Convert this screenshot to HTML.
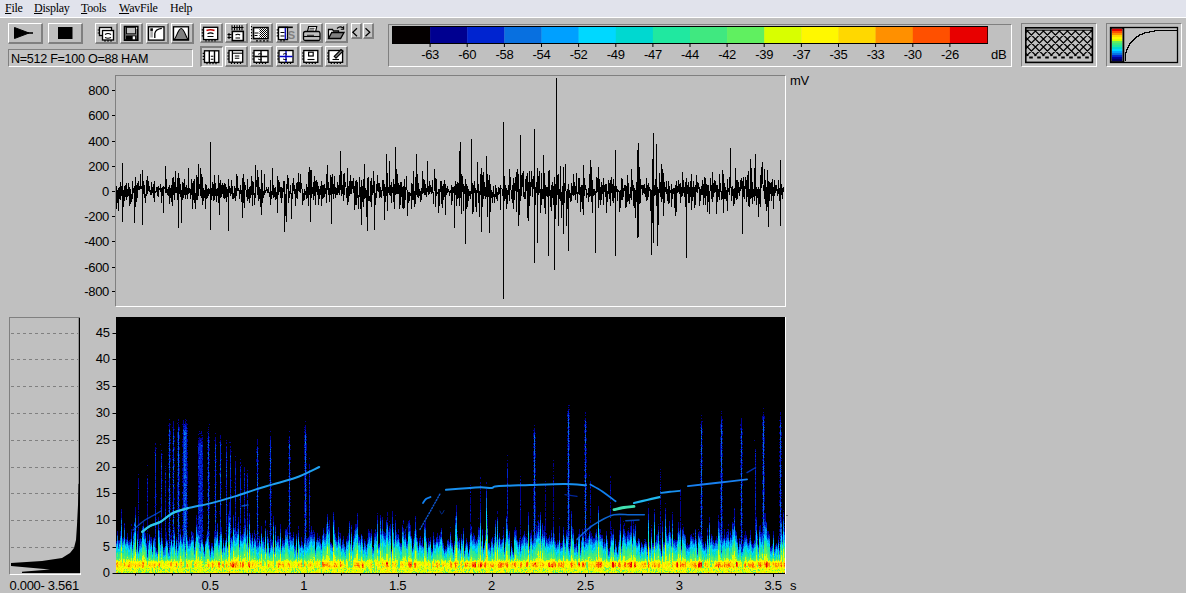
<!DOCTYPE html><html><head><meta charset="utf-8"><style>
*{margin:0;padding:0;box-sizing:border-box}
html,body{width:1186px;height:593px;overflow:hidden;background:#c0c0c0;font-family:"Liberation Sans",sans-serif;color:#000}
.a{position:absolute}
#menu{left:0;top:0;width:1186px;height:17px;background:#e1e3ec;border-bottom:1px solid #fff;height:18px}
#menu span{position:absolute;top:1px;font-family:"Liberation Serif",serif;font-size:12px;line-height:14px;letter-spacing:-0.25px}
#menu u{text-decoration:underline;text-underline-offset:1px;text-decoration-thickness:1px}
.btn{position:absolute;background:#c0c0c0;border-top:1px solid #fff;border-left:1px solid #fff;border-right:2px solid #808080;border-bottom:2px solid #808080}
.btn svg{position:absolute;left:0;top:0}
.pressed{border-top:2px solid #808080;border-left:2px solid #808080;border-right:1px solid #fff;border-bottom:1px solid #fff;background:#c8c8c8}
.sunk{position:absolute;border-top:1px solid #808080;border-left:1px solid #808080;border-right:1px solid #fff;border-bottom:1px solid #fff}
.lbl{position:absolute;font-size:13px;line-height:14px;white-space:nowrap;letter-spacing:-0.3px}
</style></head><body><div id="menu" class="a"><span style="left:5px"><u>F</u>ile</span><span style="left:34px"><u>D</u>isplay</span><span style="left:81px"><u>T</u>ools</span><span style="left:119px"><u>W</u>avFile</span><span style="left:170px">Help</span></div><div class="btn" style="left:8px;top:23px;width:35px;height:21px"></div><div class="btn" style="left:48px;top:23px;width:35px;height:21px"></div><div class="btn" style="left:95px;top:23px;width:23px;height:21px"></div><div class="btn" style="left:120px;top:23px;width:23px;height:21px"></div><div class="btn" style="left:146px;top:23px;width:23px;height:21px"></div><div class="btn" style="left:171px;top:23px;width:23px;height:21px"></div><div class="btn" style="left:200px;top:23px;width:23px;height:20px"></div><div class="btn" style="left:225px;top:23px;width:23px;height:20px"></div><div class="btn" style="left:250px;top:23px;width:23px;height:20px"></div><div class="btn" style="left:276px;top:23px;width:23px;height:20px"></div><div class="btn" style="left:300px;top:23px;width:23px;height:20px"></div><div class="btn" style="left:325px;top:23px;width:23px;height:20px"></div><div class="btn" style="left:351px;top:23px;width:11px;height:16px"></div><div class="btn" style="left:363px;top:23px;width:11px;height:16px"></div><div class="btn pressed" style="left:200px;top:46px;width:23px;height:21px"></div><div class="btn" style="left:225px;top:46px;width:23px;height:21px"></div><div class="btn" style="left:250px;top:46px;width:23px;height:21px"></div><div class="btn" style="left:276px;top:46px;width:23px;height:21px"></div><div class="btn" style="left:300px;top:46px;width:23px;height:21px"></div><div class="btn" style="left:325px;top:46px;width:23px;height:21px"></div><div class="sunk" style="left:8px;top:49px;width:185px;height:18px;background:#c4c4c4"></div><div class="lbl" style="left:11px;top:51.5px;font-size:12.6px;line-height:14px">N=512 F=100 O=88 HAM</div><svg class="a" style="left:0;top:0" width="400" height="70"><path d="M14.5 27.5L14.5 38.5L29 33Z" fill="#000" stroke="#000" stroke-width="1" stroke-linejoin="miter"/><path d="M26 33h7" stroke="#000" stroke-width="1.6"/><rect x="58" y="27" width="14.5" height="12" fill="#000"/><rect x="99.5" y="27.5" width="12.0" height="8.0" fill="#fff" stroke="#000" stroke-width="1.35"/><path d="M97.7 30.0h1.8M97.7 33.0h1.8" stroke="#000" stroke-width="1.2"/><rect x="102.5" y="30.5" width="11.0" height="9.5" fill="#fff" stroke="#000" stroke-width="1.35"/><path d="M105.0 40v1.8M108.0 40v1.8M111.0 40v1.8" stroke="#000" stroke-width="1.2"/><path d="M105 34.5q3-2 6 0M105 37.5q3 1.5 6 0" fill="none" stroke="#000" stroke-width="1.1"/><path d="M124.5 26.5h13.3v13.6h-13.3z" fill="#808080" stroke="#000" stroke-width="1.6"/><rect x="126.5" y="27.3" width="9" height="6.5" fill="#c0c0c0" stroke="#000" stroke-width=".9"/><rect x="126" y="35.5" width="10.5" height="4.3" fill="#000"/><rect x="132.7" y="36.3" width="2.4" height="3" fill="#fff"/><rect x="136" y="27.6" width="1.2" height="1.2" fill="#fff"/><rect x="148.5" y="26.8" width="15.5" height="13.3" fill="#fff" stroke="#000" stroke-width="1.35"/><rect x="150.3" y="28.3" width="2.6" height="2.6" fill="#000"/><rect x="150.3" y="31" width="2.6" height="6.5" fill="#a8a8a8"/><path d="M154.8 38V33.5Q155.5 29 161.8 28.3" fill="none" stroke="#000" stroke-width="1.3"/><rect x="173.5" y="26.8" width="15" height="13.3" fill="#fff" stroke="#000" stroke-width="1.35"/><path d="M174.2 39.5C176.5 37.5 178.2 28.5 181.2 28.5S185.9 37.5 188 39.5Z" fill="#808080" stroke="#000" stroke-width="1.1"/><rect x="203.5" y="27.3" width="14.199999999999989" height="12.3" fill="#fff" stroke="#000" stroke-width="1.35"/><path d="M201.7 29.8h1.8M201.7 32.8h1.8M201.7 35.8h1.8M206.0 39.6v1.8M209.0 39.6v1.8M212.0 39.6v1.8M215.0 39.6v1.8" stroke="#000" stroke-width="1.2"/><path d="M206.5 30.5q4-1.5 8 0" fill="none" stroke="#c00000" stroke-width="1.4"/><path d="M207.5 33.8q3-1.8 6 0M207.5 36.5h6" fill="none" stroke="#000" stroke-width="1.2"/><path d="M232 25.3v5M234.5 25.3v5M237 25.3v5M239.5 25.3v5M242 25.3v5M231.5 27.5h12" stroke="#000" stroke-width="1.1"/><rect x="232.3" y="31.4" width="11" height="9.2" fill="#fff" stroke="#000" stroke-width="1.6"/><path d="M227.5 34.5h4M227.5 37.5h4M229 33v6" stroke="#000" stroke-width="1.1"/><path d="M235.5 35q2.3-1.5 4.6 0M235.5 38h4.6" fill="none" stroke="#000" stroke-width="1.1"/><defs><pattern id="chk" width="2" height="2" patternUnits="userSpaceOnUse"><rect width="2" height="2" fill="#fff"/><rect width="1" height="1" fill="#000"/><rect x="1" y="1" width="1" height="1" fill="#000"/></pattern></defs><rect x="253.5" y="27.6" width="14.5" height="11" fill="#fff" stroke="#000" stroke-width="1.6"/><rect x="259.5" y="28.4" width="7.7" height="9.4" fill="url(#chk)"/><path d="M254.5 33h4M254.5 35.5h3" stroke="#000"/><path d="M251.5 26v13" stroke="#000" stroke-width="1.1" stroke-dasharray="1.2 1.8"/><path d="M256 40.8h13" stroke="#000" stroke-width="1.3" stroke-dasharray="2 1.5"/><rect x="278.5" y="27.3" width="9.0" height="12.3" fill="#fff" stroke="#000" stroke-width="1.35"/><path d="M276.7 29.8h1.8M276.7 32.8h1.8M276.7 35.8h1.8M281.0 39.6v1.8M284.0 39.6v1.8" stroke="#000" stroke-width="1.2"/><path d="M278.5 27.3h14.3" stroke="#000" stroke-width="1.6"/><path d="M285.3 28v11.5" stroke="#0000c0" stroke-width="1.3"/><path d="M280.5 32.5h4M280.5 36h4" stroke="#000" stroke-width="1.1"/><text x="287.6" y="38.5" font-family="Liberation Sans" font-weight="bold" font-size="11.5" fill="#808080">S</text><path d="M307.5 31.5l1.2-5h8l-1 5z" fill="#fff" stroke="#000" stroke-width="1.2"/><path d="M309.5 28.3h5M309.2 30h5" stroke="#000" stroke-width=".8"/><path d="M303.5 33.5q0-2 2-2h13q1.5 0 1.5 2v5.5q0 1.5-1.5 1.5h-13q-2 0-2-1.5z" fill="#c0c0c0" stroke="#000" stroke-width="1.3"/><path d="M304 36.5h16" stroke="#000" stroke-width="1.1"/><path d="M307 35.3h7" stroke="#000" stroke-width=".8"/><path d="M328.5 38.5v-9h4l1 1.5h5v1.8" fill="#fff" stroke="#000" stroke-width="1.3"/><path d="M328.5 38.5l3.2-6h12.3l-3.4 6z" fill="#808080" stroke="#000" stroke-width="1.3"/><path d="M337 28.5q3-3 6 -0.5" fill="none" stroke="#000" stroke-width="1.1"/><path d="M343.6 26.2v3h-2.8" fill="none" stroke="#000" stroke-width="1.1"/><path d="M357 28.3L352.8 32.3L357 36.3" fill="none" stroke="#000" stroke-width="1.25"/><path d="M365.5 28.3L369.8 32.3L365.5 36.3" fill="none" stroke="#000" stroke-width="1.25"/><rect x="204.5" y="50.8" width="14.300000000000011" height="11.700000000000003" fill="#fff" stroke="#000" stroke-width="1.35"/><path d="M202.7 53.3h1.8M202.7 56.3h1.8M202.7 59.3h1.8M207.0 62.5v1.8M210.0 62.5v1.8M213.0 62.5v1.8M216.0 62.5v1.8" stroke="#000" stroke-width="1.2"/><path d="M209.3 51v11.5M214.5 51v11.5" stroke="#000" stroke-width="1.4"/><path d="M210.8 56.2h2.6M210.8 59.2h2.6" stroke="#000" stroke-width="1.1"/><rect x="229" y="50.5" width="13.699999999999989" height="11.700000000000003" fill="#fff" stroke="#000" stroke-width="1.35"/><path d="M227.2 53.0h1.8M227.2 56.0h1.8M227.2 59.0h1.8M231.5 62.2v1.8M234.5 62.2v1.8M237.5 62.2v1.8M240.5 62.2v1.8" stroke="#000" stroke-width="1.2"/><path d="M232.4 51v11" stroke="#000" stroke-width="1.3"/><path d="M232.5 53.2h10" stroke="#000" stroke-width="1.1"/><path d="M234.8 56h4.5M234.8 58.3h4.5" stroke="#000" stroke-width="1.1"/><rect x="254" y="50.5" width="14" height="11.799999999999997" fill="#fff" stroke="#000" stroke-width="1.35"/><path d="M252.2 53.0h1.8M252.2 56.0h1.8M252.2 59.0h1.8M256.5 62.3v1.8M259.5 62.3v1.8M262.5 62.3v1.8M265.5 62.3v1.8" stroke="#000" stroke-width="1.2"/><path d="M261 51v11M254.5 56.5h13" stroke="#000" stroke-width="1.4"/><path d="M258 54.3q2-1.5 4 0M258 59q2 1.5 4 0" fill="none" stroke="#000" stroke-width=".9"/><rect x="279" y="50.5" width="14" height="11.799999999999997" fill="#fff" stroke="#000" stroke-width="1.35"/><path d="M277.2 53.0h1.8M277.2 56.0h1.8M277.2 59.0h1.8M281.5 62.3v1.8M284.5 62.3v1.8M287.5 62.3v1.8M290.5 62.3v1.8" stroke="#000" stroke-width="1.2"/><path d="M286 51v11M279.5 56.5h13" stroke="#0000c0" stroke-width="1.4"/><path d="M283 54.3q2-1.5 4 0M283 59q2 1.5 4 0" fill="none" stroke="#000" stroke-width=".9"/><rect x="303.8" y="50.5" width="14.0" height="11.799999999999997" fill="#fff" stroke="#000" stroke-width="1.35"/><path d="M302.0 53.0h1.8M302.0 56.0h1.8M302.0 59.0h1.8M306.3 62.3v1.8M309.3 62.3v1.8M312.3 62.3v1.8M315.3 62.3v1.8" stroke="#000" stroke-width="1.2"/><rect x="308.6" y="52.2" width="4.6" height="3.8" fill="#fff" stroke="#000" stroke-width="1.2"/><path d="M307.5 59.5h7" stroke="#000" stroke-width="1.1"/><rect x="328.8" y="50.5" width="13.800000000000011" height="11.799999999999997" fill="#fff" stroke="#000" stroke-width="1.35"/><path d="M327.0 53.0h1.8M327.0 56.0h1.8M327.0 59.0h1.8M331.3 62.3v1.8M334.3 62.3v1.8M337.3 62.3v1.8M340.3 62.3v1.8" stroke="#000" stroke-width="1.2"/><path d="M334.2 56.3l6.8-6.8l1.8 1.8l-6.8 6.8z" fill="#808080" stroke="#000" stroke-width="1.2"/><path d="M332.5 59.5h6.5" stroke="#000" stroke-width="1.1"/></svg><div class="sunk" style="left:388px;top:24px;width:624px;height:43px"></div><svg class="a" style="left:0;top:0" width="1186" height="70"><rect x="392.5" y="26.5" width="595" height="17" fill="none" stroke="#000"/><rect x="393.0" y="27" width="37.4" height="16" fill="#040000"/><rect x="430.1" y="27" width="37.4" height="16" fill="#000090"/><rect x="467.2" y="27" width="37.4" height="16" fill="#0024d0"/><rect x="504.4" y="27" width="37.4" height="16" fill="#0870e0"/><rect x="541.5" y="27" width="37.4" height="16" fill="#00a0ff"/><rect x="578.6" y="27" width="37.4" height="16" fill="#00d8ff"/><rect x="615.8" y="27" width="37.4" height="16" fill="#00d8d0"/><rect x="652.9" y="27" width="37.4" height="16" fill="#20e8a0"/><rect x="690.0" y="27" width="37.4" height="16" fill="#40e880"/><rect x="727.1" y="27" width="37.4" height="16" fill="#60f060"/><rect x="764.2" y="27" width="37.4" height="16" fill="#d8ff00"/><rect x="801.4" y="27" width="37.4" height="16" fill="#fff800"/><rect x="838.5" y="27" width="37.4" height="16" fill="#ffd800"/><rect x="875.6" y="27" width="37.4" height="16" fill="#ff9000"/><rect x="912.8" y="27" width="37.4" height="16" fill="#ff5000"/><rect x="949.9" y="27" width="37.4" height="16" fill="#e80000"/><path d="M430.1 43v4" stroke="#000"/><path d="M467.2 43v4" stroke="#000"/><path d="M504.4 43v4" stroke="#000"/><path d="M541.5 43v4" stroke="#000"/><path d="M578.6 43v4" stroke="#000"/><path d="M615.8 43v4" stroke="#000"/><path d="M652.9 43v4" stroke="#000"/><path d="M690.0 43v4" stroke="#000"/><path d="M727.1 43v4" stroke="#000"/><path d="M764.2 43v4" stroke="#000"/><path d="M801.4 43v4" stroke="#000"/><path d="M838.5 43v4" stroke="#000"/><path d="M875.6 43v4" stroke="#000"/><path d="M912.8 43v4" stroke="#000"/><path d="M949.9 43v4" stroke="#000"/></svg><div class="lbl" style="left:410.1px;top:48px;width:40px;text-align:center">-63</div><div class="lbl" style="left:447.2px;top:48px;width:40px;text-align:center">-60</div><div class="lbl" style="left:484.4px;top:48px;width:40px;text-align:center">-58</div><div class="lbl" style="left:521.5px;top:48px;width:40px;text-align:center">-54</div><div class="lbl" style="left:558.6px;top:48px;width:40px;text-align:center">-52</div><div class="lbl" style="left:595.8px;top:48px;width:40px;text-align:center">-49</div><div class="lbl" style="left:632.9px;top:48px;width:40px;text-align:center">-47</div><div class="lbl" style="left:670.0px;top:48px;width:40px;text-align:center">-44</div><div class="lbl" style="left:707.1px;top:48px;width:40px;text-align:center">-42</div><div class="lbl" style="left:744.2px;top:48px;width:40px;text-align:center">-39</div><div class="lbl" style="left:781.4px;top:48px;width:40px;text-align:center">-37</div><div class="lbl" style="left:818.5px;top:48px;width:40px;text-align:center">-35</div><div class="lbl" style="left:855.6px;top:48px;width:40px;text-align:center">-33</div><div class="lbl" style="left:892.8px;top:48px;width:40px;text-align:center">-30</div><div class="lbl" style="left:929.9px;top:48px;width:40px;text-align:center">-26</div><div class="lbl" style="left:991px;top:48px">dB</div><div class="sunk" style="left:1021px;top:23px;width:76px;height:44px"></div><svg class="a" style="left:0;top:0" width="1186" height="70"><defs><clipPath id="hc"><rect x="1026" y="30" width="66" height="26.5"/></clipPath></defs><rect x="1025.8" y="27.8" width="66.6" height="34.6" fill="#c0c0c0" stroke="#000" stroke-width="1.6"/><g clip-path="url(#hc)"><path d="M986.4 30L1012.4 56M1012.4 30L986.4 56M994.4 30L1020.4 56M1020.4 30L994.4 56M1002.4 30L1028.4 56M1028.4 30L1002.4 56M1010.4 30L1036.4 56M1036.4 30L1010.4 56M1018.4 30L1044.4 56M1044.4 30L1018.4 56M1026.4 30L1052.4 56M1052.4 30L1026.4 56M1034.4 30L1060.4 56M1060.4 30L1034.4 56M1042.4 30L1068.4 56M1068.4 30L1042.4 56M1050.4 30L1076.4 56M1076.4 30L1050.4 56M1058.4 30L1084.4 56M1084.4 30L1058.4 56M1066.4 30L1092.4 56M1092.4 30L1066.4 56M1074.4 30L1100.4 56M1100.4 30L1074.4 56M1082.4 30L1108.4 56M1108.4 30L1082.4 56M1090.4 30L1116.4 56M1116.4 30L1090.4 56M1098.4 30L1124.4 56M1124.4 30L1098.4 56M1106.4 30L1132.4 56M1132.4 30L1106.4 56M1114.4 30L1140.4 56M1140.4 30L1114.4 56M1122.4 30L1148.4 56M1148.4 30L1122.4 56M1130.4 30L1156.4 56M1156.4 30L1130.4 56" stroke="#000" stroke-width="1.2"/></g><path d="M1026 30.2h66" stroke="#000" stroke-width="1"/><path d="M1029.2 57.6h3.6M1037.2 57.6h3.6M1045.2 57.6h3.6M1053.2 57.6h3.6M1061.2 57.6h3.6M1069.2 57.6h3.6M1077.2 57.6h3.6M1085.2 57.6h3.6" stroke="#000" stroke-width="2"/></svg><div class="sunk" style="left:1106px;top:23px;width:76px;height:44px"></div><svg class="a" style="left:0;top:0" width="1186" height="70"><rect x="1110.5" y="27.5" width="67" height="35" fill="#c0c0c0" stroke="#000" stroke-width="1.3"/><rect x="1111.3" y="28.3" width="11.6" height="33.2" fill="#d8d8d8" stroke="#000" stroke-width=".9"/><rect x="1112" y="58.89" width="10.2" height="2.21" fill="#000060"/><rect x="1112" y="56.89" width="10.2" height="2.21" fill="#000090"/><rect x="1112" y="54.88" width="10.2" height="2.21" fill="#0024d0"/><rect x="1112" y="52.88" width="10.2" height="2.21" fill="#0870e0"/><rect x="1112" y="50.87" width="10.2" height="2.21" fill="#00a0ff"/><rect x="1112" y="48.86" width="10.2" height="2.21" fill="#00d8ff"/><rect x="1112" y="46.86" width="10.2" height="2.21" fill="#00d8d0"/><rect x="1112" y="44.85" width="10.2" height="2.21" fill="#20e8a0"/><rect x="1112" y="42.84" width="10.2" height="2.21" fill="#40e880"/><rect x="1112" y="40.84" width="10.2" height="2.21" fill="#60f060"/><rect x="1112" y="38.83" width="10.2" height="2.21" fill="#d8ff00"/><rect x="1112" y="36.83" width="10.2" height="2.21" fill="#fff800"/><rect x="1112" y="34.82" width="10.2" height="2.21" fill="#ffd800"/><rect x="1112" y="32.81" width="10.2" height="2.21" fill="#ff9000"/><rect x="1112" y="30.81" width="10.2" height="2.21" fill="#ff5000"/><rect x="1112" y="28.80" width="10.2" height="2.21" fill="#e00000"/><path d="M1123.6 28v34" stroke="#000" stroke-width="1.4"/><path d="M1125.5 61V54.5V52.5H1126.5V49.5H1127.5V47.5H1128.5V45.5H1129.5V43.5H1130.5V42.5H1131.5V41.5H1132.5V40.5H1133.5V39.5H1134.5V38.5H1135.5V37.5H1136.5V36.5H1137.5H1138.5V35.5H1139.5V34.5H1140.5H1141.5H1142.5V33.5H1143.5H1144.5V32.5H1145.5H1146.5H1147.5H1148.5H1149.5V31.5H1150.5H1151.5H1152.5H1153.5H1154.5V30.5H1155.5H1156.5H1157.5H1158.5H1159.5H1160.5H1161.5H1162.5H1163.5H1164.5H1165.5H1166.5H1167.5H1168.5H1169.5H1170.5H1171.5H1172.5H1173.5H1174.5H1175.5H1176.5H1176.5V29.5" fill="none" stroke="#000" stroke-width="1.3" shape-rendering="crispEdges"/></svg><div class="sunk" style="left:115px;top:75px;width:671px;height:232px"></div><div class="lbl" style="left:60px;top:83.5px;width:49px;text-align:right">800</div><div class="lbl" style="left:60px;top:108.5px;width:49px;text-align:right">600</div><div class="lbl" style="left:60px;top:134.5px;width:49px;text-align:right">400</div><div class="lbl" style="left:60px;top:159.5px;width:49px;text-align:right">200</div><div class="lbl" style="left:60px;top:184.5px;width:49px;text-align:right">0</div><div class="lbl" style="left:60px;top:209.5px;width:49px;text-align:right">-200</div><div class="lbl" style="left:60px;top:234.5px;width:49px;text-align:right">-400</div><div class="lbl" style="left:60px;top:260.5px;width:49px;text-align:right">-600</div><div class="lbl" style="left:60px;top:284.5px;width:49px;text-align:right">-800</div><div class="lbl" style="left:790px;top:74px">mV</div><svg class="a" style="left:0;top:0" width="1186" height="320"><path d="M112 90.5h3M112 115.5h3M112 141.5h3M112 166.5h3M112 191.5h3M112 216.5h3M112 241.5h3M112 267.5h3M112 291.5h3" stroke="#000"/><path d="M116.5 186V209M117.5 190V203M118.5 188V211M119.5 187V199M120.5 182V200M121.5 186V196M122.5 163V222M123.5 190V207M124.5 186V201M125.5 185V197M126.5 183V200M127.5 189V197M128.5 183V196M129.5 187V206M130.5 189V204M131.5 194V202M132.5 181V199M133.5 188V193M134.5 186V223M135.5 177V207M136.5 185V202M137.5 183V198M138.5 181V190M139.5 186V190M140.5 174V189M141.5 186V189M142.5 170V225M143.5 181V194M144.5 185V198M145.5 194V203M146.5 180V196M147.5 176V194M148.5 181V191M149.5 186V192M150.5 190V195M151.5 182V195M152.5 187V193M153.5 184V198M154.5 181V202M155.5 191V193M156.5 187V192M157.5 187V196M158.5 186V197M159.5 188V190M160.5 184V192M161.5 188V203M162.5 187V196M163.5 186V213M164.5 187V189M165.5 166V193M166.5 179V193M167.5 189V195M168.5 187V196M169.5 185V204M170.5 188V198M171.5 185V202M172.5 178V206M173.5 177V195M174.5 182V200M175.5 171V193M176.5 187V193M177.5 178V200M178.5 173V228M179.5 178V194M180.5 184V197M181.5 190V223M182.5 182V200M183.5 183V198M184.5 179V195M185.5 187V199M186.5 185V195M187.5 188V199M188.5 168V194M189.5 188V193M190.5 189V199M191.5 179V195M192.5 183V209M193.5 181V200M194.5 179V203M195.5 193V209M196.5 175V200M197.5 177V200M198.5 164V196M199.5 184V189M200.5 168V196M201.5 174V198M202.5 177V205M203.5 188V201M204.5 190V198M205.5 184V209M206.5 185V199M207.5 189V198M208.5 188V196M209.5 189V194M210.5 142V230M211.5 188V200M212.5 182V196M213.5 184V201M214.5 175V200M215.5 183V196M216.5 189V202M217.5 188V196M218.5 175V203M219.5 183V215M220.5 180V198M221.5 185V197M222.5 183V194M223.5 185V198M224.5 183V199M225.5 184V198M226.5 187V202M227.5 189V197M228.5 179V231M229.5 186V193M230.5 188V196M231.5 180V194M232.5 186V199M233.5 193V199M234.5 186V198M235.5 188V201M236.5 174V196M237.5 176V191M238.5 188V191M239.5 190V199M240.5 185V194M241.5 190V202M242.5 178V218M243.5 174V203M244.5 182V208M245.5 185V190M246.5 190V197M247.5 179V201M248.5 189V199M249.5 187V203M250.5 186V198M251.5 176V195M252.5 181V206M253.5 182V195M254.5 193V205M255.5 165V198M256.5 180V187M257.5 170V195M258.5 177V201M259.5 187V199M260.5 189V207M261.5 170V215M262.5 183V203M263.5 191V198M264.5 174V195M265.5 190V193M266.5 187V191M267.5 189V193M268.5 187V193M269.5 192V197M270.5 180V205M271.5 191V199M272.5 168V195M273.5 185V198M274.5 188V197M275.5 187V200M276.5 192V199M277.5 176V213M278.5 180V195M279.5 182V192M280.5 187V198M281.5 187V203M282.5 188V198M283.5 181V192M284.5 181V232M285.5 194V216M286.5 184V222M287.5 175V189M288.5 178V203M289.5 191V198M290.5 185V194M291.5 193V219M292.5 183V199M293.5 178V191M294.5 185V194M295.5 189V206M296.5 183V198M297.5 182V199M298.5 173V191M299.5 182V192M300.5 174V193M301.5 183V189M302.5 189V205M303.5 193V201M304.5 189V200M305.5 191V195M306.5 184V199M307.5 187V198M308.5 172V206M309.5 167V195M310.5 170V222M311.5 170V198M312.5 187V194M313.5 182V200M314.5 176V196M315.5 181V205M316.5 180V192M317.5 182V195M318.5 186V205M319.5 189V199M320.5 186V195M321.5 181V206M322.5 185V199M323.5 185V198M324.5 184V197M325.5 188V194M326.5 174V203M327.5 165V190M328.5 182V195M329.5 188V202M330.5 175V195M331.5 177V224M332.5 174V194M333.5 184V199M334.5 176V194M335.5 187V198M336.5 188V195M337.5 182V195M338.5 185V193M339.5 175V195M340.5 151V190M341.5 171V196M342.5 185V194M343.5 174V201M344.5 173V195M345.5 182V187M346.5 188V198M347.5 168V205M348.5 186V202M349.5 181V196M350.5 175V194M351.5 181V194M352.5 181V189M353.5 178V193M354.5 186V210M355.5 181V205M356.5 180V205M357.5 182V198M358.5 195V209M359.5 177V197M360.5 187V209M361.5 180V225M362.5 186V202M363.5 179V207M364.5 164V199M365.5 188V198M366.5 190V217M367.5 178V231M368.5 177V201M369.5 196V201M370.5 181V202M371.5 178V207M372.5 185V195M373.5 171V193M374.5 181V230M375.5 193V205M376.5 184V198M377.5 175V191M378.5 183V192M379.5 183V198M380.5 187V197M381.5 190V198M382.5 180V191M383.5 180V196M384.5 184V220M385.5 187V202M386.5 154V196M387.5 173V211M388.5 187V193M389.5 161V195M390.5 185V196M391.5 182V203M392.5 187V193M393.5 179V202M394.5 184V209M395.5 147V195M396.5 169V194M397.5 174V194M398.5 183V194M399.5 185V209M400.5 182V205M401.5 182V197M402.5 187V208M403.5 186V209M404.5 179V208M405.5 187V200M406.5 176V190M407.5 190V216M408.5 192V203M409.5 192V201M410.5 193V196M411.5 183V209M412.5 184V200M413.5 171V200M414.5 191V207M415.5 177V204M416.5 154V195M417.5 174V197M418.5 183V198M419.5 189V196M420.5 191V202M421.5 188V200M422.5 171V194M423.5 179V193M424.5 180V195M425.5 184V195M426.5 188V197M427.5 161V192M428.5 186V195M429.5 181V194M430.5 185V192M431.5 187V194M432.5 180V193M433.5 192V204M434.5 169V191M435.5 178V207M436.5 179V196M437.5 192V194M438.5 189V213M439.5 189V206M440.5 181V192M441.5 181V204M442.5 186V208M443.5 184V200M444.5 180V197M445.5 184V215M446.5 188V195M447.5 186V193M448.5 189V192M449.5 191V196M450.5 190V193M451.5 185V205M452.5 187V201M453.5 187V193M454.5 186V228M455.5 181V195M456.5 184V206M457.5 182V199M458.5 183V198M459.5 151V206M460.5 142V198M461.5 174V214M462.5 176V192M463.5 184V211M464.5 186V194M465.5 179V244M466.5 184V209M467.5 186V207M468.5 189V201M469.5 191V196M470.5 191V199M471.5 139V194M472.5 183V214M473.5 185V212M474.5 181V193M475.5 188V207M476.5 190V212M477.5 162V193M478.5 184V203M479.5 191V217M480.5 174V195M481.5 168V232M482.5 175V207M483.5 172V199M484.5 182V196M485.5 187V199M486.5 156V197M487.5 174V217M488.5 180V197M489.5 175V233M490.5 184V212M491.5 190V198M492.5 192V203M493.5 186V197M494.5 194V203M495.5 185V197M496.5 188V199M497.5 192V201M498.5 187V195M499.5 188V194M500.5 185V210M501.5 188V189M502.5 189V196M503.5 122V299M504.5 176V201M505.5 185V199M506.5 188V209M507.5 190V204M508.5 185V195M509.5 169V201M510.5 177V190M511.5 190V199M512.5 185V203M513.5 178V209M514.5 183V200M515.5 177V191M516.5 172V212M517.5 169V192M518.5 174V226M519.5 189V215M520.5 135V201M521.5 175V196M522.5 173V187M523.5 171V197M524.5 192V199M525.5 179V199M526.5 176V191M527.5 173V218M528.5 182V221M529.5 171V206M530.5 182V196M531.5 171V187M532.5 179V197M533.5 176V189M534.5 129V263M535.5 187V205M536.5 182V193M537.5 168V243M538.5 176V195M539.5 171V193M540.5 189V213M541.5 173V205M542.5 189V199M543.5 155V199M544.5 173V208M545.5 185V214M546.5 187V196M547.5 187V197M548.5 171V256M549.5 170V196M550.5 190V207M551.5 185V211M552.5 182V198M553.5 186V205M554.5 177V270M555.5 184V219M556.5 78V205M557.5 175V195M558.5 174V226M559.5 189V199M560.5 166V201M561.5 192V218M562.5 186V205M563.5 167V234M564.5 183V203M565.5 164V191M566.5 191V226M567.5 189V209M568.5 184V251M569.5 190V198M570.5 193V202M571.5 183V201M572.5 186V195M573.5 174V196M574.5 182V195M575.5 186V200M576.5 173V194M577.5 192V203M578.5 178V194M579.5 178V195M580.5 187V212M581.5 185V202M582.5 185V209M583.5 165V215M584.5 178V196M585.5 185V190M586.5 189V198M587.5 193V195M588.5 188V202M589.5 174V197M590.5 160V196M591.5 167V202M592.5 180V213M593.5 189V196M594.5 189V195M595.5 191V253M596.5 177V193M597.5 178V192M598.5 167V208M599.5 179V200M600.5 187V205M601.5 182V200M602.5 185V194M603.5 178V205M604.5 185V192M605.5 184V197M606.5 184V213M607.5 191V202M608.5 180V194M609.5 183V199M610.5 180V206M611.5 177V193M612.5 184V201M613.5 179V203M614.5 186V198M615.5 150V256M616.5 186V192M617.5 189V201M618.5 190V192M619.5 191V212M620.5 190V208M621.5 178V200M622.5 179V200M623.5 188V197M624.5 185V191M625.5 185V208M626.5 186V207M627.5 175V202M628.5 183V201M629.5 194V204M630.5 187V198M631.5 169V200M632.5 180V191M633.5 185V206M634.5 188V208M635.5 190V218M636.5 182V202M637.5 150V238M638.5 143V237M639.5 167V204M640.5 179V203M641.5 185V189M642.5 185V195M643.5 185V193M644.5 184V194M645.5 188V197M646.5 178V201M647.5 185V200M648.5 183V197M649.5 187V191M650.5 189V211M651.5 190V255M652.5 159V223M653.5 133V243M654.5 185V196M655.5 179V195M656.5 144V206M657.5 187V246M658.5 189V225M659.5 173V193M660.5 182V197M661.5 164V202M662.5 169V199M663.5 173V216M664.5 182V203M665.5 187V192M666.5 181V194M667.5 189V201M668.5 181V204M669.5 186V203M670.5 190V193M671.5 184V207M672.5 189V199M673.5 188V194M674.5 188V208M675.5 185V216M676.5 181V212M677.5 186V193M678.5 180V192M679.5 184V194M680.5 183V203M681.5 187V197M682.5 172V196M683.5 180V193M684.5 187V197M685.5 182V207M686.5 178V258M687.5 185V194M688.5 182V203M689.5 187V203M690.5 181V197M691.5 174V210M692.5 187V201M693.5 181V197M694.5 187V208M695.5 185V205M696.5 175V192M697.5 182V193M698.5 183V189M699.5 187V206M700.5 189V201M701.5 186V195M702.5 180V195M703.5 184V205M704.5 177V198M705.5 178V205M706.5 184V196M707.5 185V212M708.5 185V202M709.5 191V214M710.5 178V191M711.5 185V199M712.5 172V202M713.5 183V197M714.5 180V193M715.5 181V192M716.5 185V214M717.5 185V202M718.5 189V197M719.5 174V200M720.5 183V192M721.5 191V200M722.5 170V199M723.5 174V213M724.5 183V199M725.5 187V199M726.5 190V201M727.5 179V211M728.5 188V192M729.5 177V195M730.5 148V188M731.5 187V201M732.5 186V196M733.5 189V206M734.5 188V204M735.5 168V198M736.5 180V200M737.5 180V199M738.5 182V193M739.5 187V196M740.5 180V191M741.5 178V189M742.5 181V234M743.5 177V197M744.5 186V199M745.5 177V189M746.5 180V202M747.5 175V197M748.5 171V206M749.5 189V207M750.5 159V199M751.5 168V198M752.5 182V204M753.5 189V197M754.5 168V201M755.5 154V196M756.5 187V205M757.5 189V198M758.5 187V217M759.5 189V204M760.5 175V207M761.5 167V188M762.5 162V184M763.5 185V191M764.5 169V199M765.5 180V204M766.5 187V211M767.5 170V207M768.5 181V227M769.5 182V201M770.5 183V194M771.5 182V201M772.5 179V196M773.5 187V209M774.5 180V196M775.5 185V193M776.5 185V191M777.5 189V196M778.5 180V194M779.5 188V201M780.5 160V226M781.5 184V195M782.5 188V199M783.5 187V192" stroke="#000" stroke-width="1" shape-rendering="crispEdges"/></svg><div class="sunk" style="left:9px;top:317px;width:72px;height:258px"></div><svg class="a" style="left:0;top:300px" width="100" height="293"><g transform="translate(0,-300)"><path d="M11 547.5h67M11 520.5h67M11 493.5h67M11 467.5h67M11 440.5h67M11 413.5h67M11 386.5h67M11 359.5h67M11 333.5h67" stroke="#808080" stroke-dasharray="3 3"/><path d="M80 318V483L78.5 484L78 505L77 525L76 540L74 548L70 553L62 558L42 561L11 563L11 566L50 569.6L22 571.7L22 573L80 573Z" fill="#000"/><path d="M79.5 318V573" stroke="#000" stroke-width="1.5"/></g></svg><div class="lbl" style="left:9.5px;top:578.8px">0.000- 3.561</div><div class="lbl" style="left:70.7px;top:566.0px;width:39px;text-align:right">0</div><div class="lbl" style="left:70.7px;top:540.0px;width:39px;text-align:right">5</div><div class="lbl" style="left:70.7px;top:513.0px;width:39px;text-align:right">10</div><div class="lbl" style="left:70.7px;top:486.0px;width:39px;text-align:right">15</div><div class="lbl" style="left:70.7px;top:460.0px;width:39px;text-align:right">20</div><div class="lbl" style="left:70.7px;top:433.0px;width:39px;text-align:right">25</div><div class="lbl" style="left:70.7px;top:406.0px;width:39px;text-align:right">30</div><div class="lbl" style="left:70.7px;top:379.0px;width:39px;text-align:right">35</div><div class="lbl" style="left:70.7px;top:352.0px;width:39px;text-align:right">40</div><div class="lbl" style="left:70.7px;top:326.0px;width:39px;text-align:right">45</div><div class="lbl" style="left:190.0px;top:578.6px;width:40px;text-align:center">0.5</div><div class="lbl" style="left:283.8px;top:578.6px;width:40px;text-align:center">1</div><div class="lbl" style="left:377.7px;top:578.6px;width:40px;text-align:center">1.5</div><div class="lbl" style="left:471.5px;top:578.6px;width:40px;text-align:center">2</div><div class="lbl" style="left:565.3px;top:578.6px;width:40px;text-align:center">2.5</div><div class="lbl" style="left:659.2px;top:578.6px;width:40px;text-align:center">3</div><div class="lbl" style="left:753.0px;top:578.6px;width:40px;text-align:center">3.5</div><div class="lbl" style="left:790px;top:578.6px">s</div><svg class="a" style="left:0;top:300px" width="1186" height="293"><g transform="translate(0,-300)"><path d="M112.5 573.5h3.5M112.5 547.5h3.5M112.5 520.5h3.5M112.5 493.5h3.5M112.5 467.5h3.5M112.5 440.5h3.5M112.5 413.5h3.5M112.5 386.5h3.5M112.5 359.5h3.5M112.5 333.5h3.5M135.5 573v2.5M154.5 573v2.5M172.5 573v2.5M191.5 573v2.5M210.5 573v4M229.5 573v2.5M248.5 573v2.5M266.5 573v2.5M285.5 573v2.5M304.5 573v4M323.5 573v2.5M341.5 573v2.5M360.5 573v2.5M379.5 573v2.5M398.5 573v4M416.5 573v2.5M435.5 573v2.5M454.5 573v2.5M473.5 573v2.5M492.5 573v4M510.5 573v2.5M529.5 573v2.5M548.5 573v2.5M567.5 573v2.5M585.5 573v4M604.5 573v2.5M623.5 573v2.5M642.5 573v2.5M660.5 573v2.5M679.5 573v4M698.5 573v2.5M717.5 573v2.5M735.5 573v2.5M754.5 573v2.5M773.5 573v4" stroke="#000"/><path d="M116 573.5H785" stroke="#000"/><path d="M785 515.5h3" stroke="#707070"/><rect x="116" y="317" width="669" height="256" fill="#000"/><g shape-rendering="crispEdges" transform="translate(.5,0)"><path d="M116 541v2M117 531v4M118 540v1M119 540v1M120 531v5M121 509v3M121 513v5M122 538v1M123 537v2M124 523v1M124 525v3M125 539v4M126 539v1M127 533v4M128 541v2M129 540v2M130 539v3M131 524v2M131 529v3M132 545v2M133 527v1M133 532v2M134 522v1M134 526v2M135 507v8M136 547v2M137 531v3M138 474v1M138 478v10M138 490v12M138 504v6M138 511v2M138 514v1M138 516v10M138 528v13M138 542v1M138 544v7M139 539v2M140 538v1M141 536v1M141 539v2M142 526v2M143 522v4M144 530v1M145 533v3M146 543v1M147 465v1M147 475v1M147 478v1M147 480v2M147 484v4M147 489v2M147 492v4M147 497v3M147 501v1M147 503v1M147 505v10M147 516v10M147 527v2M147 530v2M147 533v8M147 543v11M148 541v2M149 534v1M150 537v4M151 537v2M152 547v5M153 538v2M154 452v1M154 497v1M154 506v1M154 514v1M154 537v1M155 443v2M155 447v3M155 451v2M155 456v1M155 473v1M155 475v1M155 480v1M155 482v1M155 488v1M155 504v1M155 506v1M155 508v1M155 516v1M155 528v1M155 534v1M155 537v2M155 540v2M156 448v1M156 494v1M156 496v1M156 504v1M156 519v1M156 548v3M157 550v2M158 517v5M159 528v1M159 530v1M160 444v1M160 498v1M160 508v1M160 533v1M160 542v3M161 450v1M161 453v1M161 455v1M161 459v1M161 461v1M161 470v1M161 475v1M161 477v1M161 484v1M161 487v1M161 489v1M161 492v2M161 496v1M161 504v2M161 517v3M161 522v6M161 530v1M161 532v1M162 454v1M162 480v1M162 538v3M163 548v2M164 547v1M165 466v1M165 468v1M165 470v1M165 472v1M165 475v3M165 480v1M165 483v3M165 487v3M165 491v1M165 493v2M165 496v1M165 498v3M165 502v7M165 511v1M165 518v1M165 520v1M165 522v1M165 524v1M165 526v2M165 530v5M165 536v2M165 539v5M165 545v1M166 532v7M167 540v1M168 425v1M168 434v2M168 443v1M168 446v1M168 448v1M168 452v1M168 454v2M168 459v1M168 463v2M168 467v1M168 481v1M168 488v4M168 497v1M168 499v1M168 502v2M168 505v2M168 508v1M168 510v2M168 516v1M168 523v1M168 525v2M168 528v4M168 534v1M168 540v1M168 544v1M168 546v1M168 550v2M169 419v1M169 423v6M169 521v1M170 424v1M170 431v4M170 436v1M170 439v2M170 442v2M170 449v2M170 452v1M170 455v1M170 458v4M170 467v1M170 471v1M170 477v1M170 484v1M170 488v1M170 491v1M170 494v2M170 497v2M170 500v1M170 502v1M170 504v3M170 508v2M170 512v1M170 516v2M170 520v1M170 524v1M170 527v1M170 529v3M170 535v3M170 539v2M170 542v3M171 533v3M171 537v2M172 427v1M172 443v1M172 450v2M172 455v1M172 457v1M172 459v1M172 467v1M172 472v1M172 474v1M172 476v1M172 479v1M172 484v1M172 492v1M172 502v2M172 505v1M172 508v1M172 510v2M172 520v2M172 524v2M172 530v1M172 532v1M172 535v1M172 540v2M172 543v2M173 421v8M173 431v1M173 446v1M173 472v1M173 478v1M173 483v1M173 518v1M173 529v1M174 429v1M174 436v2M174 440v2M174 447v3M174 458v1M174 460v1M174 464v3M174 471v1M174 484v1M174 487v2M174 498v2M174 504v1M174 507v2M174 512v1M174 517v1M174 527v5M175 545v2M176 537v2M177 423v1M177 432v6M177 439v4M177 444v1M177 446v1M177 448v2M177 451v1M177 453v3M177 458v3M177 462v1M177 466v1M177 469v2M177 472v1M177 474v4M177 479v1M177 482v3M177 486v7M177 494v7M177 503v2M177 506v1M177 508v7M177 516v1M177 519v3M177 525v1M177 527v2M177 533v1M177 540v2M177 543v4M177 548v1M178 419v2M178 422v1M178 424v3M179 427v4M179 435v4M179 442v1M179 444v1M179 447v3M179 454v2M179 457v2M179 460v3M179 465v2M179 468v6M179 476v6M179 484v1M179 486v1M179 489v1M179 491v5M179 499v2M179 505v2M179 508v2M179 511v2M179 515v1M179 517v1M179 522v2M179 526v3M179 530v2M179 534v8M180 529v5M181 537v2M182 424v1M182 433v1M182 439v1M182 441v2M182 444v3M182 453v1M182 456v1M182 458v3M182 462v1M182 465v1M182 468v3M182 473v1M182 475v2M182 478v2M182 481v2M182 485v1M182 493v1M182 498v2M182 505v5M182 513v2M182 516v1M182 520v1M182 525v3M182 529v2M182 535v8M183 420v6M183 427v2M183 435v1M183 466v1M183 479v1M183 487v2M183 506v1M183 521v1M184 425v1M184 427v1M184 429v1M184 481v1M185 419v1M185 421v4M186 420v1M186 423v4M186 429v1M186 466v1M186 474v1M186 486v1M186 488v1M186 491v1M186 508v1M186 512v1M186 524v1M186 528v1M187 424v1M187 428v1M187 430v2M187 433v1M187 435v1M187 439v3M187 444v1M187 446v1M187 450v1M187 452v3M187 456v2M187 461v1M187 463v4M187 468v2M187 471v9M187 481v3M187 485v1M187 488v1M187 491v1M187 495v1M187 498v1M187 501v1M187 504v6M187 511v3M187 516v1M187 518v2M187 522v2M187 526v1M187 532v1M187 535v5M188 541v3M189 537v2M190 540v3M191 531v1M191 535v2M192 532v3M193 533v5M194 547v1M195 538v3M196 515v3M196 519v6M197 446v1M197 519v1M197 524v8M198 434v1M198 438v1M198 440v4M198 445v2M198 454v6M198 464v2M198 469v2M198 472v1M198 476v5M198 482v2M198 485v1M198 487v3M198 491v1M198 494v1M198 497v2M198 500v1M198 503v1M198 510v1M198 514v2M198 517v1M198 520v1M198 524v1M198 526v1M198 529v1M199 431v1M199 433v1M199 437v6M199 451v1M199 453v1M199 455v1M199 459v1M199 471v1M199 473v2M199 476v1M199 480v1M199 484v1M199 488v1M199 506v1M199 511v1M199 513v2M199 530v1M199 534v1M200 433v1M200 438v2M200 441v2M200 464v1M200 467v1M200 474v1M200 478v1M200 491v1M200 500v1M200 513v1M200 516v1M200 525v2M200 529v1M200 539v1M200 542v1M201 431v3M201 435v1M201 438v4M201 443v2M201 459v1M201 464v1M201 474v1M201 480v1M201 486v1M201 490v2M201 512v2M201 515v2M201 522v1M201 524v2M202 435v1M202 437v3M202 441v4M202 447v6M202 455v1M202 457v1M202 460v4M202 467v2M202 470v1M202 472v1M202 475v1M202 477v1M202 480v2M202 483v1M202 487v4M202 492v2M202 495v1M202 497v3M202 502v1M202 505v1M202 507v2M202 510v5M202 522v2M202 526v1M202 532v1M202 535v1M202 537v2M203 490v1M203 496v1M203 498v1M203 511v1M203 530v1M203 535v1M203 537v1M203 544v2M204 551v1M205 541v1M206 535v4M207 432v1M207 438v1M207 440v2M207 444v1M207 446v2M207 449v1M207 452v2M207 457v3M207 463v1M207 467v3M207 472v1M207 476v4M207 481v1M207 489v1M207 493v4M207 500v1M207 505v2M207 509v2M207 514v1M207 523v1M207 527v1M207 529v2M208 427v1M208 429v1M208 431v1M208 434v2M209 424v1M209 437v1M209 440v3M209 445v1M209 448v3M209 454v1M209 456v1M209 459v2M209 462v1M209 464v1M209 472v5M209 478v1M209 482v2M209 487v2M209 490v2M209 495v1M209 497v4M209 503v1M209 505v4M209 510v1M209 512v1M209 514v1M209 519v1M209 521v1M209 531v1M209 533v3M209 542v3M210 551v2M211 543v3M212 543v3M213 548v2M214 440v1M214 452v1M214 460v1M214 470v1M214 476v1M214 484v1M214 491v1M214 496v1M214 498v1M214 503v1M214 506v1M214 514v1M214 531v6M215 433v1M215 437v7M215 524v1M215 531v1M215 534v1M216 445v1M216 459v1M216 461v1M216 470v1M216 474v1M216 482v1M216 484v1M216 501v1M216 511v2M216 514v1M216 517v1M216 531v4M217 523v1M217 528v1M218 541v2M219 442v1M219 465v1M219 473v2M219 511v1M219 513v1M219 533v1M219 536v4M220 435v4M220 440v2M220 471v1M220 484v1M220 499v2M220 517v2M221 444v1M221 453v1M221 459v1M221 482v1M221 484v1M221 488v1M221 491v1M221 499v1M221 504v1M221 527v5M222 548v1M223 538v2M224 546v1M225 486v1M225 533v1M225 540v1M226 440v1M226 442v2M226 446v1M226 448v4M226 458v2M226 461v1M226 468v1M226 472v1M226 478v2M226 485v1M226 487v1M226 489v2M226 493v1M226 496v1M226 503v1M226 515v1M226 523v1M226 525v1M226 529v1M226 532v1M227 460v1M227 505v1M227 524v1M227 541v1M227 546v1M228 514v2M229 442v1M229 497v1M229 502v9M229 515v1M230 442v1M230 446v2M230 449v6M230 462v1M230 478v1M230 488v1M230 493v1M230 516v1M230 522v1M230 524v1M230 530v1M230 534v4M230 539v1M230 543v1M231 451v1M231 480v1M231 487v1M231 495v1M231 528v1M231 530v3M231 537v1M232 536v4M233 515v2M234 482v1M234 490v1M234 528v2M234 532v2M235 456v1M235 461v7M235 475v3M235 480v3M235 484v2M235 488v1M235 494v2M235 502v1M235 504v3M235 508v4M235 515v1M235 518v1M235 521v2M235 524v1M235 526v1M236 531v1M237 524v1M237 526v1M237 528v4M237 533v1M238 517v5M239 499v1M239 540v4M240 459v1M240 462v2M240 466v1M240 468v1M240 472v3M240 476v2M240 490v3M240 494v1M240 503v1M240 505v1M240 507v1M240 514v1M240 518v1M240 523v1M240 525v1M240 527v1M240 529v1M241 465v1M241 489v1M241 535v3M242 534v2M242 538v1M243 527v1M243 529v5M244 467v5M244 475v3M244 481v1M244 483v1M244 486v1M244 488v2M244 495v1M244 498v1M244 500v4M244 505v1M244 507v1M244 509v3M244 513v2M244 516v2M244 523v2M244 528v1M245 519v6M246 475v1M246 535v1M247 470v1M247 473v3M247 477v2M247 483v1M247 487v1M247 489v1M247 491v2M247 497v2M247 509v1M247 511v2M247 516v2M247 520v1M247 527v1M248 543v2M249 513v2M249 516v4M250 533v2M251 538v3M252 533v2M253 541v3M254 530v3M254 534v2M254 537v1M255 534v2M255 537v3M256 449v1M256 451v2M256 459v3M256 465v1M256 473v1M256 488v1M256 496v1M256 499v1M256 513v1M256 534v1M256 539v7M257 439v6M257 446v1M257 472v2M257 486v1M258 448v1M258 454v1M258 460v2M258 464v1M258 468v1M258 473v1M258 478v1M258 483v1M258 487v5M258 496v1M258 507v1M258 514v1M258 525v1M258 527v1M258 532v2M258 536v1M258 538v2M258 543v2M259 536v3M260 541v1M260 543v1M261 526v7M262 538v3M263 537v3M264 542v3M265 520v1M265 523v3M265 528v1M266 548v1M267 530v4M267 535v1M268 538v1M269 445v1M269 453v1M269 455v1M269 458v1M269 460v1M269 468v2M269 473v1M269 475v2M269 478v1M269 480v1M269 483v1M269 489v1M269 494v2M269 497v2M269 507v1M269 512v1M269 524v1M269 526v1M269 531v1M269 533v1M269 541v1M269 548v4M270 431v1M270 436v4M270 499v1M271 447v1M271 459v1M271 462v1M271 482v1M271 486v1M271 489v1M271 491v3M271 495v1M271 497v1M271 503v1M271 505v1M271 511v1M271 513v3M271 518v1M271 524v1M271 526v1M271 529v2M271 533v2M271 539v4M272 540v2M273 516v6M274 547v1M275 525v2M276 541v1M277 536v4M278 536v3M279 539v6M280 524v5M281 546v2M282 538v3M283 540v3M284 540v3M285 529v2M286 529v1M287 527v5M288 440v1M288 442v1M288 446v2M288 453v1M288 457v2M288 464v1M288 469v1M288 476v1M288 490v2M288 496v1M288 501v1M288 509v1M288 512v1M288 520v1M288 525v2M288 533v1M288 539v2M289 431v1M289 436v1M289 438v3M289 442v2M289 456v1M290 445v1M290 449v1M290 457v3M290 462v1M290 470v1M290 472v1M290 474v1M290 477v1M290 480v1M290 491v1M290 496v1M290 499v1M290 502v1M290 505v1M290 513v1M290 516v1M290 522v2M290 527v1M290 532v1M290 534v2M291 535v1M291 537v3M292 537v2M293 532v3M293 536v1M294 546v1M295 545v2M296 534v2M297 550v2M298 526v3M298 530v3M299 542v2M300 546v1M301 537v4M302 542v3M303 546v2M304 427v1M304 429v1M304 431v2M304 435v3M304 439v3M304 443v2M304 446v1M304 449v6M304 456v4M304 462v1M304 464v3M304 468v1M304 470v1M304 473v12M304 486v2M304 489v3M304 494v2M304 500v12M304 515v3M304 520v1M304 523v3M304 527v1M304 529v5M304 535v3M305 421v1M305 425v5M305 431v1M306 434v1M306 436v2M306 439v2M306 443v8M306 453v3M306 457v1M306 459v1M306 463v3M306 467v2M306 470v6M306 479v2M306 482v1M306 484v2M306 487v1M306 489v3M306 493v4M306 498v1M306 500v2M306 504v7M306 512v4M306 517v1M306 520v5M306 526v2M306 530v2M306 536v1M306 538v5M307 538v1M308 537v1M309 458v1M309 464v5M309 472v2M309 475v1M309 477v3M309 481v1M309 484v3M309 488v2M309 491v1M309 493v2M309 504v2M309 508v1M309 511v1M309 516v2M309 520v1M309 523v2M309 526v2M309 529v2M309 532v4M310 496v1M310 532v3M311 526v4M311 534v1M312 532v3M313 530v3M313 534v3M314 532v2M315 549v1M316 540v2M317 533v5M318 538v1M318 540v1M319 536v3M320 539v4M321 544v2M322 535v1M323 528v2M324 533v5M325 534v3M326 524v3M327 514v3M328 524v1M328 526v3M329 520v6M329 527v1M330 542v2M331 543v1M332 545v2M333 512v2M333 515v1M334 520v10M335 533v4M336 538v3M337 540v2M338 527v5M339 533v1M339 537v2M340 533v5M341 545v3M342 540v2M343 536v3M344 544v2M345 547v2M346 539v2M347 536v5M348 533v7M349 521v2M350 541v1M350 543v1M351 525v2M351 529v3M352 545v3M353 536v4M354 530v4M355 524v5M356 524v4M357 513v2M357 516v4M358 535v2M359 537v3M360 539v4M361 534v1M362 536v3M363 547v2M364 539v2M365 541v3M366 545v1M366 547v1M367 538v5M368 529v4M369 531v2M370 533v5M371 529v5M373 545v1M373 548v2M374 533v4M375 529v1M375 531v3M376 532v4M377 513v1M377 515v5M378 544v2M379 543v2M380 515v3M381 531v3M382 517v3M383 531v3M384 532v4M385 533v3M386 520v2M387 512v4M387 517v4M387 522v1M388 530v2M388 536v1M389 521v1M389 526v2M390 524v5M391 549v2M392 511v6M393 524v1M393 527v1M393 529v3M394 539v3M395 515v1M395 520v3M396 532v3M397 534v3M397 538v1M398 529v4M398 534v1M399 539v3M400 543v1M401 543v2M402 525v2M403 520v1M403 522v2M403 528v3M404 535v4M405 529v5M406 539v5M407 541v1M408 521v4M409 520v3M410 525v6M411 536v2M412 548v1M413 539v4M413 544v1M414 531v3M414 535v1M415 516v2M415 519v3M416 530v5M416 536v1M417 538v3M418 546v2M419 538v3M420 536v2M420 539v2M421 543v2M422 538v2M423 546v1M424 524v3M425 519v1M425 521v7M426 538v3M427 548v2M428 538v5M429 541v1M429 543v1M430 537v3M431 548v2M432 549v2M433 532v4M434 539v4M435 542v2M436 537v1M437 533v4M437 538v1M438 539v3M439 535v1M440 532v5M441 528v2M442 539v2M443 543v2M444 549v2M445 546v3M446 547v2M447 540v1M448 539v2M449 542v2M450 527v1M450 532v2M451 540v3M452 543v2M453 550v2M454 541v2M455 516v2M455 520v3M456 505v7M457 531v1M457 534v2M458 541v1M459 538v2M460 549v1M461 534v4M462 539v2M463 528v3M465 544v2M466 538v2M467 542v2M468 552v1M469 542v3M469 546v1M470 485v1M470 487v3M470 491v1M470 495v1M470 497v7M470 505v5M470 511v1M470 513v1M470 515v7M470 524v5M470 530v3M471 526v1M471 529v3M472 536v4M473 533v4M474 535v1M475 539v4M476 540v1M477 537v2M478 518v1M478 527v3M479 528v2M480 477v2M480 482v2M480 485v5M480 491v3M480 495v2M480 498v4M480 503v7M480 511v1M481 541v1M482 529v1M483 548v1M484 543v2M485 530v5M486 482v2M486 489v2M487 515v1M487 517v1M487 519v7M487 527v1M488 543v1M489 543v2M490 547v1M491 539v2M492 537v1M493 544v3M494 534v1M494 536v2M494 539v1M495 520v4M496 537v3M497 511v3M497 517v2M498 539v1M499 533v4M500 539v5M501 540v3M502 536v1M502 539v1M503 527v2M503 530v5M504 548v2M505 538v2M506 516v2M507 455v1M507 460v1M507 463v4M507 468v1M507 478v5M507 485v2M507 488v2M507 492v2M507 495v2M507 499v1M507 504v1M507 509v2M507 514v3M507 518v4M507 523v2M508 535v2M509 531v2M510 552v3M511 541v1M511 543v3M512 548v2M513 552v1M514 530v2M515 527v4M516 530v6M517 540v1M518 542v3M519 538v2M520 476v1M520 479v2M520 482v1M520 484v16M520 501v3M520 505v1M520 507v2M520 510v15M520 526v2M520 529v6M520 536v2M520 540v7M520 548v1M521 539v2M522 537v1M523 535v1M524 531v3M525 536v2M526 534v1M526 537v2M527 538v1M527 540v1M528 512v4M529 546v1M530 533v3M531 530v5M532 541v2M533 430v1M533 433v4M533 438v1M533 443v2M533 446v2M533 451v5M533 457v2M533 460v2M533 465v1M533 467v1M533 470v2M533 474v1M533 479v2M533 482v2M533 485v1M533 488v4M533 493v1M533 495v6M533 503v1M533 505v4M533 512v2M533 515v1M533 519v1M533 521v1M533 523v3M533 527v1M533 529v1M533 531v1M533 535v5M534 425v1M534 428v4M535 433v1M535 437v2M535 441v1M535 443v1M535 446v1M535 448v1M535 451v1M535 453v5M535 460v1M535 462v1M535 465v1M535 468v5M535 474v2M535 479v2M535 482v3M535 487v1M535 492v4M535 498v1M535 500v1M535 502v3M535 506v8M535 515v5M535 521v2M535 524v2M535 527v2M535 530v1M535 533v2M536 525v6M537 521v2M537 526v6M538 515v2M538 520v2M539 523v7M539 531v1M540 512v3M541 536v3M542 523v2M543 530v6M544 526v6M545 481v1M545 485v2M545 488v1M545 490v2M545 494v7M545 502v5M545 508v3M545 512v5M545 518v1M545 520v11M545 532v10M546 533v2M546 536v2M547 539v2M548 538v1M548 541v1M549 535v2M550 539v2M551 530v3M551 536v1M552 537v3M553 460v1M553 463v4M553 468v1M553 471v1M553 475v1M553 477v2M553 480v1M553 482v4M553 487v10M553 498v3M553 502v9M553 512v2M553 515v1M553 518v2M553 521v6M554 534v4M554 539v1M555 541v1M556 544v3M557 540v3M558 542v2M559 518v1M559 526v7M560 543v4M561 543v2M562 541v2M563 527v3M563 532v1M564 537v2M565 543v1M566 530v4M567 411v1M567 413v2M567 416v1M567 418v1M567 420v1M567 422v1M567 427v2M567 431v2M567 435v2M567 438v3M567 442v1M567 444v3M567 448v2M567 451v1M567 453v3M567 457v1M567 459v1M567 462v3M567 466v1M567 468v2M567 473v2M567 476v2M567 479v8M567 488v3M567 492v2M567 496v1M567 498v1M567 500v1M567 502v1M567 505v4M567 511v2M567 517v1M567 519v2M567 522v2M567 525v1M567 527v1M567 529v3M567 534v1M568 405v1M568 407v1M568 409v2M569 405v1M569 409v1M569 413v1M569 415v2M569 418v2M569 422v2M569 426v2M569 429v1M569 431v1M569 433v2M569 438v1M569 440v1M569 443v7M569 454v2M569 459v1M569 461v1M569 463v2M569 467v1M569 469v5M569 475v3M569 480v2M569 483v1M569 486v1M569 488v1M569 490v2M569 493v7M569 501v1M569 504v4M569 509v4M569 514v7M569 526v3M569 531v5M569 537v1M569 539v1M569 543v2M569 546v1M569 548v1M570 539v3M571 511v3M571 518v1M572 527v2M572 530v4M573 529v4M574 544v3M575 544v3M576 540v3M577 546v4M578 534v3M579 529v5M580 548v3M581 540v1M582 529v3M583 534v2M584 420v1M584 424v3M584 430v3M584 437v1M584 439v2M584 444v3M584 448v2M584 452v3M584 459v1M584 462v1M584 464v1M584 466v1M584 469v1M584 475v3M584 480v2M584 486v1M584 490v2M584 494v1M584 496v1M584 498v1M584 501v2M584 504v1M584 507v1M584 509v1M584 511v1M584 517v1M584 519v1M584 524v1M584 528v2M584 531v1M584 533v1M584 535v1M584 541v1M584 545v1M585 412v2M585 415v1M585 418v3M585 445v1M586 422v1M586 424v1M586 426v2M586 430v2M586 438v3M586 444v1M586 448v3M586 452v2M586 457v1M586 459v4M586 465v2M586 469v1M586 473v5M586 483v2M586 487v3M586 492v1M586 494v2M586 500v1M586 502v1M586 505v1M586 508v3M586 515v1M586 518v1M586 524v1M586 528v1M586 530v3M586 534v5M587 533v1M587 538v1M588 536v2M589 475v1M589 526v6M590 481v6M590 488v1M590 490v3M590 494v2M590 497v1M590 499v5M590 505v1M590 508v8M590 517v2M590 520v3M590 525v2M590 528v1M590 531v7M591 533v4M592 536v4M593 538v1M594 538v1M595 533v2M596 529v3M597 537v3M598 506v4M599 529v4M600 529v4M600 534v1M601 535v3M602 535v3M603 542v4M604 539v3M605 543v1M606 531v4M607 539v2M608 549v2M609 548v3M610 476v2M610 481v2M610 484v6M610 491v4M610 496v4M610 502v2M610 505v3M610 509v6M610 521v9M610 531v3M610 536v5M611 527v1M611 529v1M611 531v2M612 534v1M613 529v5M614 549v1M615 539v2M616 546v1M617 552v1M618 542v3M619 530v5M620 517v7M621 546v1M622 537v1M623 521v1M623 525v4M624 523v3M624 529v2M625 533v4M626 536v6M627 531v4M628 528v1M628 530v2M629 533v2M630 526v6M631 521v5M632 541v2M633 521v3M633 525v4M634 529v5M635 524v2M636 542v1M637 541v1M637 543v1M638 538v1M639 539v2M640 548v2M641 542v1M642 544v1M643 547v1M644 539v1M644 541v1M644 543v1M645 539v3M646 542v2M647 549v1M648 503v1M648 508v6M649 542v4M650 548v1M651 525v1M651 528v2M651 531v2M652 543v2M653 543v2M654 509v2M654 512v2M655 542v1M656 535v5M657 534v2M658 524v1M658 526v4M659 541v3M660 469v1M660 472v1M660 474v1M660 476v2M660 479v1M660 482v1M660 484v2M660 488v2M660 493v1M660 497v2M660 500v5M660 506v1M660 508v1M660 511v4M660 516v1M660 518v4M660 524v1M660 526v8M660 535v3M660 539v6M661 551v3M662 521v6M663 542v2M664 542v1M665 503v1M665 508v2M665 511v3M666 528v6M667 536v2M668 533v2M669 521v5M670 532v1M671 538v1M672 512v1M672 514v6M673 540v1M674 539v2M675 540v2M676 540v2M677 533v7M678 522v6M679 531v2M680 489v7M680 497v3M680 501v16M680 518v3M680 522v6M681 546v3M682 524v1M682 529v1M683 527v4M684 534v1M685 535v2M686 545v2M687 543v3M688 545v2M689 544v1M690 535v2M691 534v2M692 537v2M693 533v2M693 537v2M694 540v3M695 529v1M696 539v2M697 548v4M698 529v1M698 532v2M699 531v6M700 424v1M700 427v1M700 430v1M700 445v1M700 449v1M700 451v1M700 453v1M700 459v1M700 461v1M700 463v3M700 467v1M700 471v2M700 474v1M700 476v1M700 478v2M700 481v1M700 483v1M700 485v2M700 494v1M700 496v1M700 498v1M700 501v3M700 506v2M700 509v1M700 515v3M700 519v1M700 522v1M700 525v1M700 532v4M701 415v1M701 418v1M701 421v4M701 463v1M701 528v1M702 421v1M702 429v1M702 431v2M702 434v1M702 439v1M702 445v2M702 448v1M702 453v1M702 457v1M702 460v2M702 463v1M702 465v1M702 469v1M702 481v1M702 483v1M702 487v1M702 491v1M702 493v1M702 495v2M702 500v1M702 506v3M702 515v1M702 519v1M702 521v1M702 523v1M702 526v1M702 528v1M702 536v2M702 539v4M703 542v2M704 547v2M705 541v2M706 545v2M707 528v2M707 532v3M708 539v4M709 517v4M709 522v1M710 539v3M711 534v2M712 536v5M713 540v2M714 543v1M715 540v1M716 536v4M717 538v3M718 515v3M718 519v2M719 522v7M720 424v6M720 431v1M720 437v3M720 441v1M720 443v14M720 458v4M720 466v1M720 471v1M720 473v5M720 479v1M720 482v2M720 487v1M720 489v3M720 493v1M720 495v4M720 500v1M720 502v1M720 504v1M720 506v3M720 510v3M720 514v1M720 517v1M720 519v1M720 523v3M720 527v2M720 531v4M721 411v1M721 413v1M721 416v4M722 419v2M722 423v1M722 425v2M722 428v1M722 432v1M722 434v2M722 438v2M722 442v2M722 446v1M722 448v1M722 450v1M722 453v4M722 459v1M722 463v1M722 468v3M722 474v3M722 478v4M722 483v3M722 487v1M722 490v1M722 496v1M722 498v2M722 501v1M722 506v1M722 509v3M722 513v1M722 516v3M722 521v7M722 529v1M722 531v3M722 535v5M723 538v1M724 529v6M725 538v3M726 532v5M727 529v1M727 531v2M727 534v1M728 524v2M728 529v3M729 540v1M730 531v2M730 535v2M731 535v3M732 522v2M733 518v1M733 523v1M733 525v4M734 508v1M734 510v7M734 518v1M735 530v1M736 532v3M737 539v3M738 547v2M739 538v1M739 540v1M740 424v2M740 428v2M740 434v1M740 436v3M740 440v1M740 443v1M740 449v1M740 451v1M740 455v1M740 458v1M740 460v3M740 465v3M740 469v1M740 473v2M740 479v1M740 484v1M740 487v1M740 489v1M740 493v3M740 498v1M740 500v1M740 509v2M740 512v3M740 519v1M740 521v1M740 523v3M740 530v1M740 536v1M740 539v1M740 541v3M741 418v10M741 483v1M742 429v1M742 432v3M742 441v1M742 443v2M742 447v1M742 449v1M742 452v3M742 456v1M742 460v1M742 462v2M742 465v1M742 468v1M742 473v1M742 480v2M742 483v3M742 493v1M742 498v2M742 501v2M742 508v1M742 513v3M742 517v2M742 522v1M742 524v1M742 528v1M742 531v2M742 534v1M742 536v2M742 539v2M742 544v5M743 540v3M744 535v3M745 531v7M746 535v2M747 539v4M748 543v2M749 538v3M750 530v5M751 541v3M752 544v3M753 543v2M754 440v1M754 540v1M755 449v2M755 454v1M755 457v2M755 460v1M755 462v2M755 465v3M755 469v1M755 475v1M755 477v1M755 480v2M755 484v3M755 489v2M755 492v1M755 498v1M755 506v1M755 510v3M755 514v5M755 521v2M755 524v1M755 531v1M755 533v2M756 517v3M757 534v2M758 545v2M759 526v4M760 525v7M760 533v1M761 532v2M762 416v4M762 422v4M762 429v1M762 433v3M762 437v3M762 442v1M762 444v3M762 448v2M762 452v2M762 455v1M762 459v2M762 464v1M762 466v2M762 469v1M762 471v4M762 480v3M762 490v5M762 498v1M762 503v2M762 506v2M762 509v3M762 514v1M762 517v2M762 522v4M762 527v6M763 408v1M763 412v1M763 414v3M764 416v3M764 421v2M764 425v1M764 429v2M764 432v1M764 435v1M764 437v7M764 446v2M764 449v2M764 453v2M764 457v1M764 461v1M764 463v1M764 465v2M764 468v1M764 470v1M764 472v4M764 477v7M764 485v2M764 488v7M764 496v6M764 504v1M764 507v3M764 513v6M764 520v2M765 513v8M765 524v1M766 522v1M767 531v6M768 531v4M769 534v2M770 547v1M771 546v3M772 544v2M773 531v4M774 549v1M775 545v2M776 543v1M777 545v2M778 536v4M779 420v1M779 426v2M779 432v2M779 439v1M779 442v1M779 444v1M779 447v1M779 451v2M779 455v2M779 459v3M779 465v2M779 470v2M779 473v1M779 475v1M779 477v1M779 481v1M779 484v4M779 491v3M779 496v1M779 500v3M779 504v2M779 515v3M779 521v2M779 526v1M779 529v3M779 533v3M779 538v1M779 542v1M779 544v1M779 548v2M780 412v3M780 416v4M780 421v1M781 423v1M781 427v1M781 432v4M781 437v1M781 441v2M781 444v1M781 446v2M781 449v1M781 451v1M781 453v2M781 458v1M781 460v1M781 465v1M781 467v1M781 469v1M781 471v1M781 474v3M781 484v1M781 490v1M781 492v2M781 495v1M781 498v1M781 502v2M781 505v1M781 508v2M781 514v1M781 517v5M782 534v3M783 510v1M783 512v2M783 517v2M784 523v1M784 526v1M784 528v4" stroke="#000090"/><path d="M116 543v1M117 535v1M118 541v6M119 541v2M120 536v2M121 512v1M121 518v2M121 524v1M122 539v4M123 539v2M124 524v1M124 528v2M125 543v1M126 540v2M127 537v3M128 543v2M129 542v3M130 542v1M131 532v7M132 547v2M133 534v2M133 539v1M134 523v1M134 528v4M135 515v3M136 549v1M137 534v5M138 488v1M138 502v1M138 527v1M138 551v1M139 541v5M140 539v5M141 541v1M142 528v3M143 526v1M143 530v2M144 531v8M145 536v2M146 544v2M147 479v1M147 482v2M147 488v1M147 491v1M147 496v1M147 500v1M147 504v1M147 515v1M147 541v2M147 554v3M148 543v2M149 535v5M150 541v3M151 539v4M153 540v1M154 538v1M155 450v1M155 453v2M155 457v16M155 474v1M155 476v4M155 481v1M155 483v5M155 489v15M155 505v1M155 507v1M155 509v7M155 517v11M155 529v5M155 535v2M155 539v1M155 542v6M156 551v1M157 552v2M158 522v8M159 531v6M161 454v1M161 456v3M161 460v1M161 462v4M161 467v3M161 471v4M161 476v1M161 478v6M161 485v2M161 490v2M161 494v2M161 497v7M161 506v11M161 520v2M161 528v2M161 531v1M161 533v5M162 541v3M163 550v2M164 548v2M165 473v2M165 478v1M165 481v2M165 486v1M165 490v1M165 492v1M165 495v1M165 501v1M165 509v2M165 512v6M165 519v1M165 521v1M165 523v1M165 525v1M165 528v2M165 535v1M165 538v1M165 544v1M166 539v2M167 541v2M168 552v1M169 429v1M169 432v3M169 436v2M169 439v1M169 441v2M169 444v1M169 446v2M169 451v4M169 457v1M169 459v2M169 463v1M169 465v1M169 468v1M169 470v3M169 478v8M169 487v2M169 491v1M169 493v2M169 496v2M169 500v1M169 505v2M169 509v1M169 513v1M169 515v1M169 517v1M169 519v2M169 523v5M169 530v1M169 533v1M169 536v2M169 539v3M169 543v5M169 549v1M170 545v1M171 536v1M171 539v1M172 545v1M173 429v2M173 432v4M173 437v1M173 439v2M173 442v1M173 444v2M173 447v2M173 451v8M173 461v1M173 463v3M173 470v2M173 474v3M173 479v1M173 481v1M173 484v1M173 487v18M173 506v1M173 509v1M173 512v1M173 514v1M173 516v1M173 524v4M173 532v4M173 538v2M173 542v1M174 532v2M175 547v2M176 539v2M177 485v1M177 502v1M177 549v2M178 427v2M178 430v2M178 441v1M178 445v1M178 450v1M178 467v1M178 471v1M178 476v3M178 480v2M178 485v1M178 487v4M178 495v2M178 499v2M178 502v1M178 506v1M178 508v2M178 512v2M178 516v1M178 527v2M178 532v1M178 534v1M178 536v1M178 540v1M179 525v1M179 542v1M180 534v1M181 539v3M182 492v1M182 543v1M183 426v1M183 429v1M183 431v4M183 436v16M183 453v13M183 467v12M183 480v7M183 489v6M183 496v10M183 507v3M183 511v10M183 523v6M183 530v7M184 424v1M184 426v1M184 428v1M184 430v1M184 435v2M184 440v2M184 443v1M184 446v1M184 449v2M184 453v1M184 458v1M184 462v1M184 471v2M184 474v1M184 479v2M184 482v1M184 486v1M184 489v2M184 492v1M184 494v1M184 496v2M184 499v1M184 502v1M184 506v1M184 508v2M184 511v1M184 513v1M184 515v1M184 523v1M184 527v1M184 529v2M184 532v1M184 541v1M185 425v5M185 431v1M185 435v1M185 439v1M185 442v1M185 445v1M185 447v1M185 449v1M185 452v1M185 454v2M185 457v1M185 459v2M185 462v2M185 466v3M185 471v1M185 473v1M185 478v2M185 482v2M185 486v1M185 488v2M185 491v1M185 493v1M185 496v1M185 500v4M185 507v1M185 509v2M185 518v1M185 521v1M185 524v2M185 527v1M185 530v1M185 535v1M185 537v7M185 545v1M185 547v3M186 427v2M186 430v3M186 434v24M186 459v7M186 467v7M186 475v2M186 478v7M186 487v1M186 490v1M186 492v1M186 494v1M186 496v12M186 509v1M186 511v1M186 513v6M186 520v4M186 525v3M186 529v1M186 532v1M187 540v1M188 544v2M189 539v5M190 543v1M191 532v3M191 537v3M192 535v1M192 538v2M193 538v2M194 548v2M195 541v1M196 518v1M196 525v2M197 532v2M198 444v1M198 447v7M198 460v4M198 467v2M198 471v1M198 473v3M198 481v1M198 486v1M198 490v1M198 492v2M198 495v2M198 499v1M198 501v2M198 504v6M198 511v3M198 516v1M198 518v2M198 521v3M198 527v2M198 530v5M199 443v8M199 452v1M199 454v1M199 456v2M199 460v11M199 472v1M199 475v1M199 477v3M199 481v3M199 485v1M199 487v1M199 489v9M199 499v7M199 507v3M199 512v1M199 515v2M199 518v8M199 527v3M199 532v2M199 535v2M199 539v4M200 440v1M200 443v11M200 455v9M200 465v2M200 468v6M200 476v2M200 479v4M200 484v7M200 492v8M200 501v12M200 514v2M200 517v3M200 521v4M200 527v2M200 530v5M200 536v3M200 540v2M200 543v4M201 442v1M201 446v5M201 452v7M201 460v4M201 465v9M201 475v5M201 481v5M201 487v3M201 492v1M201 494v16M201 511v1M201 514v1M201 517v5M201 523v1M201 527v13M202 445v2M202 453v2M202 456v1M202 458v2M202 464v3M202 469v1M202 471v1M202 473v2M202 476v1M202 478v2M202 482v1M202 484v3M202 491v1M202 494v1M202 496v1M202 500v2M202 503v2M202 506v1M202 509v1M202 515v4M202 520v2M202 524v2M202 527v5M202 534v1M202 536v1M202 539v3M203 546v1M204 552v2M205 542v2M206 539v2M207 531v3M207 535v2M208 433v1M208 436v4M208 441v1M208 443v1M208 446v1M208 448v4M208 456v1M208 459v3M208 464v3M208 468v2M208 471v1M208 474v1M208 478v1M208 481v2M208 484v5M208 491v1M208 497v1M208 500v1M208 502v1M208 504v1M208 506v1M208 509v3M208 513v2M208 519v2M208 524v2M208 529v3M208 534v2M208 538v1M209 486v1M209 545v4M210 553v2M211 546v2M212 546v1M213 550v1M214 537v2M215 444v4M215 449v7M215 457v5M215 463v3M215 467v20M215 488v6M215 495v11M215 507v3M215 511v5M215 517v3M215 522v2M215 525v5M215 532v2M215 535v2M216 535v3M217 524v4M217 529v3M218 543v2M219 540v3M220 442v3M220 446v14M220 461v3M220 465v3M220 470v1M220 472v2M220 477v5M220 483v1M220 485v9M220 495v2M220 498v1M220 501v2M220 505v12M220 519v2M220 522v10M220 533v1M221 532v2M222 549v3M223 540v3M224 547v1M225 541v2M226 447v1M226 452v5M226 460v1M226 462v5M226 469v2M226 473v2M226 476v2M226 480v5M226 486v1M226 488v1M226 491v2M226 494v2M226 497v6M226 505v9M226 516v7M226 524v1M226 526v3M226 531v1M226 533v5M227 547v1M228 516v11M229 511v4M229 516v2M229 520v2M230 455v1M230 457v5M230 463v5M230 469v9M230 479v9M230 489v4M230 494v22M230 517v1M230 519v3M230 523v1M230 526v3M230 531v3M230 538v1M230 540v3M230 544v4M231 538v1M232 540v2M233 517v11M234 530v2M234 534v1M235 468v7M235 478v2M235 483v1M235 486v2M235 489v5M235 496v6M235 503v1M235 507v1M235 512v3M235 516v2M235 519v2M235 523v1M235 525v1M235 527v7M235 535v2M236 532v6M237 532v1M238 522v7M239 544v3M240 467v1M240 469v3M240 475v1M240 478v12M240 493v1M240 495v8M240 504v1M240 506v1M240 509v5M240 515v3M240 519v4M240 526v1M240 528v1M240 530v2M240 533v3M241 538v3M242 536v2M242 539v2M243 534v3M244 473v2M244 478v3M244 482v1M244 484v2M244 487v1M244 490v5M244 496v2M244 499v1M244 504v1M244 506v1M244 508v1M244 512v1M244 515v1M244 518v5M244 525v3M244 529v3M245 525v3M246 536v7M247 476v1M247 479v4M247 484v3M247 488v1M247 490v1M247 493v4M247 500v5M247 506v3M247 510v1M247 513v3M247 518v2M247 521v6M247 528v2M248 545v2M249 515v1M249 520v4M250 535v5M251 541v4M252 535v3M253 544v3M254 533v1M254 538v1M255 536v1M255 540v1M256 546v1M257 447v5M257 453v1M257 455v1M257 457v6M257 465v7M257 475v2M257 478v1M257 480v2M257 483v1M257 487v1M257 489v2M257 493v2M257 497v2M257 500v1M257 502v2M257 505v1M257 507v7M257 515v3M257 519v2M257 522v3M257 526v5M257 532v1M257 534v4M257 539v2M257 542v4M258 545v2M259 539v2M260 544v2M261 533v1M262 541v1M263 540v2M264 545v3M265 521v2M265 529v2M266 549v3M267 534v1M267 536v1M267 538v1M268 539v4M269 552v1M270 440v9M270 450v1M270 452v6M270 459v1M270 462v1M270 464v2M270 467v2M270 470v3M270 474v1M270 476v4M270 481v1M270 483v1M270 485v6M270 493v6M270 502v2M270 505v15M270 521v2M270 525v6M270 532v1M270 534v1M270 536v4M270 541v7M271 543v2M272 542v5M273 522v4M274 548v4M275 527v5M275 533v2M276 542v2M276 545v1M277 540v2M278 539v3M279 545v2M280 529v4M281 548v2M282 541v3M283 543v3M284 543v2M285 531v4M286 530v7M287 532v3M288 541v3M289 437v1M289 441v1M289 449v6M289 458v4M289 464v9M289 474v2M289 477v7M289 485v2M289 489v7M289 497v1M289 499v4M289 506v4M289 511v4M289 516v3M289 521v2M289 525v8M289 534v2M289 539v2M289 542v4M290 533v1M290 536v4M291 540v1M292 539v2M293 535v1M293 537v1M294 547v2M295 547v3M296 536v3M297 552v1M298 533v4M299 544v1M300 547v1M301 541v4M302 545v2M303 548v1M304 445v1M304 447v1M304 514v1M304 538v5M305 430v1M305 432v3M305 440v1M305 445v2M305 448v1M305 450v1M305 453v1M305 455v1M305 463v1M305 465v1M305 469v1M305 472v2M305 475v1M305 477v1M305 480v1M305 482v1M305 484v1M305 487v1M305 491v3M305 500v2M305 504v1M305 507v1M305 513v1M305 515v4M305 526v2M305 529v1M305 531v2M305 539v1M306 543v2M307 539v2M308 538v2M308 541v2M309 470v2M309 474v1M309 476v1M309 480v1M309 482v1M309 487v1M309 490v1M309 492v1M309 495v9M309 506v2M309 509v2M309 512v4M309 518v2M309 521v2M309 525v1M309 528v1M309 531v1M309 536v5M310 535v2M311 530v4M311 535v2M312 535v4M313 537v2M314 534v3M315 550v1M317 538v2M318 541v1M319 539v3M320 543v1M321 546v3M322 536v4M323 530v4M324 538v2M325 537v3M326 527v7M327 517v5M328 529v1M328 531v3M329 526v1M329 528v3M330 544v1M331 544v2M332 547v1M333 514v1M333 516v6M334 530v4M335 537v3M336 541v1M337 542v3M338 532v4M339 539v4M340 538v1M341 548v1M342 542v3M343 539v5M344 546v1M345 549v1M346 541v1M347 541v2M348 540v1M349 523v4M349 528v1M350 544v1M351 527v2M351 532v2M352 548v2M353 540v2M354 534v4M355 529v2M356 528v2M357 515v1M357 520v7M358 537v6M359 540v1M360 543v2M361 535v1M362 539v4M363 549v1M364 541v2M365 544v2M366 548v2M367 543v1M368 533v7M369 533v4M370 538v3M371 534v2M372 547v2M373 550v1M374 537v3M375 530v1M375 534v3M376 536v5M377 520v4M378 546v2M379 545v2M380 518v3M380 525v1M380 527v1M381 534v1M382 520v9M383 534v2M384 536v3M385 536v4M386 522v7M387 523v2M388 532v4M388 537v3M389 528v4M390 529v7M391 551v1M392 517v7M393 532v1M394 542v2M395 523v7M396 535v6M397 537v1M397 539v1M398 535v3M399 542v1M400 544v3M401 545v2M402 527v5M403 521v1M403 531v2M404 539v1M405 534v4M406 544v2M407 542v2M408 525v7M409 523v4M409 528v3M410 531v5M411 538v1M412 549v2M413 543v1M413 545v2M414 534v1M414 536v2M415 518v1M415 522v7M416 535v1M416 537v1M417 541v1M418 548v2M419 541v2M420 538v1M420 541v4M421 545v1M422 540v7M423 547v1M424 527v2M425 528v2M426 541v1M427 550v2M428 543v2M429 542v1M429 544v2M430 540v2M431 550v2M432 551v1M433 536v4M434 543v2M435 544v1M436 538v4M437 537v1M437 539v3M438 542v4M439 536v6M440 537v2M441 530v2M441 534v3M442 541v2M443 545v3M444 551v2M445 549v1M446 549v2M447 541v3M448 541v4M449 544v2M450 534v2M451 543v3M452 545v2M453 552v1M454 543v2M455 518v2M455 523v2M456 512v4M457 536v2M458 542v6M459 540v3M460 550v1M461 538v2M462 541v3M463 531v3M464 551v3M465 546v2M466 540v3M467 544v2M468 553v1M469 545v1M469 547v2M470 492v1M470 510v1M470 514v1M470 529v1M470 533v2M471 527v2M471 532v2M472 540v1M473 537v2M474 536v6M475 543v1M476 541v1M477 539v4M478 530v5M479 530v7M480 510v1M480 512v11M481 542v4M482 530v5M483 549v1M484 545v1M485 535v5M486 491v7M487 526v1M487 528v1M487 533v1M488 544v5M489 545v3M490 548v3M491 541v1M492 538v5M493 547v1M494 538v1M494 540v3M495 524v3M496 540v2M497 519v2M498 540v5M499 537v1M500 544v1M501 543v1M502 540v2M503 535v3M504 550v2M505 540v2M506 518v1M506 522v1M507 469v9M507 483v2M507 487v1M507 490v2M507 494v1M507 497v2M507 500v4M507 505v4M507 511v3M507 517v1M507 525v4M508 537v2M509 533v5M510 555v1M511 546v1M512 550v2M513 553v2M514 532v5M515 531v4M516 536v4M517 541v1M518 545v2M519 540v2M520 483v1M520 500v1M520 504v1M520 509v1M520 538v1M520 547v1M520 549v2M521 541v3M522 538v5M523 536v4M524 534v3M525 538v5M526 539v3M527 541v2M528 516v9M529 547v2M530 536v3M531 535v3M532 543v2M533 530v1M533 540v3M534 432v3M534 438v1M534 442v1M534 446v1M534 448v1M534 455v2M534 459v1M534 462v1M534 467v1M534 473v2M534 478v1M534 480v1M534 484v1M534 486v1M534 488v3M534 495v2M534 498v1M534 500v2M534 503v2M534 508v1M534 512v1M534 518v1M534 530v1M535 535v3M536 531v7M537 532v2M538 522v4M538 527v1M539 530v1M539 532v4M540 515v5M541 539v2M542 525v9M543 536v2M544 532v4M545 519v1M545 542v4M546 538v2M547 541v2M548 539v2M548 542v2M549 537v4M550 541v1M551 533v3M551 537v1M552 540v2M553 481v1M553 517v1M553 527v6M554 538v1M554 540v2M555 542v3M556 547v1M557 543v2M558 544v1M559 533v7M560 547v2M561 546v2M562 543v4M563 530v2M563 533v2M564 539v4M565 544v3M566 534v2M567 415v1M567 532v2M567 535v2M568 411v4M568 416v1M568 418v1M568 421v1M568 428v2M568 435v1M568 437v1M568 439v1M568 442v1M568 444v2M568 447v1M568 451v2M568 455v1M568 463v2M568 466v1M568 468v1M568 477v1M568 479v1M568 489v1M568 495v1M568 497v1M568 500v1M568 509v1M568 514v1M568 516v1M568 520v1M568 522v1M568 524v1M568 530v1M568 532v1M568 536v1M568 540v1M568 542v1M568 544v3M569 441v1M569 524v1M569 549v2M570 542v4M571 514v4M571 519v7M572 529v1M572 534v4M573 533v2M574 547v2M575 547v1M576 543v3M577 550v2M578 537v2M579 534v3M580 551v2M581 541v1M582 532v5M583 536v2M584 470v1M584 542v3M584 546v1M585 422v3M585 426v1M585 428v1M585 430v1M585 432v3M585 436v1M585 438v1M585 443v2M585 448v2M585 451v3M585 455v7M585 463v1M585 465v2M585 468v1M585 470v1M585 472v3M585 476v1M585 479v1M585 482v1M585 486v2M585 490v1M585 493v2M585 497v1M585 499v2M585 504v1M585 506v1M585 508v3M585 514v1M585 519v1M585 524v1M585 528v1M585 532v1M585 535v3M585 539v1M585 541v1M586 539v4M587 539v4M588 538v2M589 532v2M590 487v1M590 496v1M590 498v1M590 506v1M590 527v1M590 538v1M591 537v2M592 540v2M593 539v4M594 539v3M595 535v5M596 532v2M597 540v1M598 510v3M599 533v2M600 535v2M600 538v1M601 538v1M602 538v1M603 546v2M604 542v2M605 544v3M606 535v1M607 541v2M607 544v1M608 551v4M609 551v1M610 490v1M610 517v1M610 541v5M611 533v5M612 535v5M613 534v1M614 550v2M615 541v3M616 547v1M617 553v1M618 545v2M619 535v5M620 524v7M621 547v2M622 538v3M623 529v5M624 531v5M625 537v2M626 542v2M627 535v2M628 532v7M629 535v5M630 532v3M631 526v7M632 543v1M633 529v4M634 534v2M635 526v5M636 543v2M637 544v2M638 539v2M639 541v2M640 550v2M641 543v4M642 545v2M643 548v1M644 544v1M645 542v2M646 544v2M647 550v2M647 554v1M648 514v6M649 546v2M650 549v1M651 530v1M651 533v4M652 545v2M653 545v2M654 514v8M655 543v3M656 540v2M657 536v7M658 530v2M659 544v1M660 487v1M660 491v1M660 495v1M660 517v1M660 523v1M660 545v4M661 554v2M662 527v5M663 544v3M664 543v2M665 510v1M665 514v5M666 534v2M667 538v3M668 535v6M669 526v6M670 533v4M671 539v7M672 520v4M672 526v2M673 541v3M674 541v2M675 542v4M676 542v3M676 546v1M677 540v1M678 528v4M679 533v2M680 528v2M681 549v1M682 530v6M683 531v3M684 535v1M685 537v2M686 547v1M687 546v3M688 547v1M689 545v2M690 537v4M691 536v3M692 539v2M693 539v4M694 543v1M695 530v3M695 534v2M695 537v1M696 541v3M697 552v2M698 534v2M699 537v1M700 526v1M700 536v4M701 425v3M701 429v1M701 434v2M701 437v1M701 439v3M701 443v1M701 445v2M701 452v1M701 455v5M701 464v1M701 466v1M701 468v1M701 476v2M701 479v1M701 483v1M701 485v2M701 495v3M701 499v1M701 504v2M701 507v1M701 510v1M701 513v2M701 517v4M701 530v1M701 532v1M701 534v3M701 538v1M702 543v2M703 544v4M704 549v1M705 543v1M706 547v2M707 530v2M707 535v1M708 543v2M709 523v2M710 542v1M711 536v2M712 541v3M713 542v1M713 544v1M714 544v2M715 541v2M716 540v3M717 541v3M718 521v7M719 529v4M720 488v1M720 530v1M720 535v5M721 420v5M721 427v2M721 434v2M721 437v1M721 444v1M721 446v1M721 448v2M721 455v1M721 466v1M721 468v1M721 473v3M721 477v3M721 482v2M721 490v2M721 495v1M721 501v1M721 503v1M721 508v1M721 510v4M721 515v2M721 521v1M721 523v1M721 527v1M721 529v1M721 531v1M721 537v1M721 543v2M721 551v1M722 431v1M722 433v1M722 473v1M722 540v2M723 539v2M724 535v4M725 541v2M726 537v3M727 535v3M728 532v6M729 541v1M730 533v2M730 537v1M731 538v2M732 524v5M733 524v1M733 529v1M734 509v1M734 517v1M734 519v2M734 522v4M735 531v5M736 535v1M737 542v1M738 549v1M739 539v1M739 541v3M741 428v3M741 433v3M741 438v2M741 441v1M741 444v3M741 448v2M741 453v2M741 456v3M741 461v1M741 463v5M741 470v1M741 472v1M741 477v5M741 489v2M741 493v2M741 497v2M741 501v1M741 503v3M741 507v1M741 511v2M741 514v1M741 516v1M741 518v2M741 523v1M741 525v5M741 531v1M741 533v2M741 537v3M741 544v3M741 549v3M742 549v3M743 543v3M744 538v4M745 538v2M746 537v2M747 543v1M748 545v1M749 541v2M750 535v3M750 539v1M751 544v1M752 547v1M753 545v3M754 541v3M755 451v1M755 453v1M755 455v2M755 459v1M755 461v1M755 464v1M755 468v1M755 470v5M755 476v1M755 478v2M755 482v2M755 487v2M755 491v1M755 493v5M755 499v7M755 507v3M755 513v1M755 519v2M755 523v1M755 525v6M755 532v1M755 535v8M756 520v5M756 526v4M757 536v3M757 540v4M758 547v1M759 530v2M760 532v1M760 534v3M761 534v8M762 483v1M762 533v3M763 417v3M763 421v1M763 423v1M763 425v1M763 432v1M763 437v1M763 439v1M763 441v1M763 448v1M763 452v1M763 454v1M763 458v2M763 461v1M763 464v2M763 470v1M763 474v2M763 482v1M763 488v1M763 490v2M763 497v1M763 499v1M763 501v1M763 511v1M763 514v1M763 517v2M763 525v1M763 528v1M763 531v1M763 533v1M763 536v2M764 427v1M764 506v1M764 519v1M764 522v3M765 521v3M765 525v2M766 523v5M767 537v2M768 535v3M769 536v3M770 548v3M771 549v2M772 546v2M773 535v3M774 550v2M775 547v2M776 544v2M777 547v2M778 540v3M779 550v1M780 420v1M780 422v3M780 427v3M780 435v2M780 440v1M780 442v1M780 444v1M780 449v2M780 452v5M780 458v7M780 467v1M780 469v1M780 473v1M780 477v2M780 480v1M780 482v1M780 484v2M780 487v2M780 491v2M780 494v3M780 498v4M780 507v3M780 512v2M780 515v1M780 517v3M780 521v2M780 528v1M780 532v2M780 535v1M780 537v2M780 541v1M781 522v2M781 527v2M782 537v5M783 514v3M783 519v2M784 532v3" stroke="#0024d0"/><path d="M116 544v2M117 536v5M118 547v2M119 543v1M120 538v3M121 520v4M121 525v2M122 543v2M123 541v1M124 530v8M125 544v1M126 542v2M127 540v2M128 545v1M129 545v4M130 543v2M131 539v2M132 549v2M133 536v3M133 540v2M134 524v2M134 532v1M135 518v7M135 530v1M136 550v2M137 539v1M138 552v1M139 546v2M140 544v2M141 542v5M142 531v6M143 527v3M143 532v2M144 539v1M145 538v1M145 542v1M146 546v2M147 557v1M148 545v4M149 540v1M150 544v3M151 543v2M152 552v2M153 541v2M154 539v8M155 455v1M155 548v5M156 552v1M157 554v2M158 530v1M159 537v3M160 545v3M161 466v1M161 488v1M161 538v3M162 544v2M163 552v3M164 550v5M165 546v2M166 541v1M167 543v4M168 553v1M169 430v2M169 435v1M169 438v1M169 440v1M169 443v1M169 445v1M169 448v3M169 455v2M169 458v1M169 461v2M169 464v1M169 466v2M169 469v1M169 473v1M169 475v3M169 486v1M169 489v2M169 492v1M169 495v1M169 498v2M169 501v4M169 507v2M169 510v3M169 514v1M169 516v1M169 518v1M169 522v1M169 528v2M169 531v2M169 534v2M169 538v1M169 542v1M169 548v1M169 550v6M170 546v2M171 540v1M172 546v1M173 436v1M173 438v1M173 441v1M173 443v1M173 449v2M173 459v2M173 462v1M173 466v4M173 473v1M173 477v1M173 480v1M173 482v1M173 485v2M173 505v1M173 507v2M173 510v2M173 513v1M173 515v1M173 517v1M173 519v5M173 528v1M173 530v2M173 536v2M173 540v2M173 543v1M174 534v2M174 539v1M175 549v2M176 541v2M177 551v2M178 429v1M178 432v9M178 442v3M178 446v4M178 451v4M178 456v8M178 465v2M178 468v3M178 472v4M178 479v1M178 482v3M178 486v1M178 491v4M178 497v2M178 501v1M178 503v3M178 507v1M178 510v2M178 514v2M178 517v10M178 529v3M178 533v1M178 535v1M178 537v3M178 541v7M179 543v2M180 535v5M181 542v2M182 544v1M183 430v1M183 452v1M183 495v1M183 510v1M183 522v1M183 529v1M183 537v2M184 431v3M184 437v3M184 442v1M184 444v2M184 447v2M184 451v2M184 454v4M184 459v3M184 463v8M184 473v1M184 475v4M184 483v3M184 487v2M184 491v1M184 493v1M184 495v1M184 498v1M184 500v2M184 503v3M184 507v1M184 510v1M184 512v1M184 514v1M184 516v7M184 524v3M184 528v1M184 531v1M184 533v8M184 542v2M185 430v1M185 432v3M185 436v3M185 440v2M185 443v2M185 446v1M185 448v1M185 450v2M185 453v1M185 456v1M185 458v1M185 461v1M185 464v2M185 469v2M185 472v1M185 474v4M185 480v2M185 484v2M185 487v1M185 490v1M185 492v1M185 494v2M185 497v3M185 504v3M185 508v1M185 511v2M185 514v4M185 519v2M185 522v2M185 528v2M185 531v4M185 536v1M185 544v1M185 546v1M185 550v2M186 433v1M186 458v1M186 477v1M186 485v1M186 489v1M186 493v1M186 495v1M186 510v1M186 519v1M186 530v2M186 533v4M187 541v1M188 546v2M189 544v2M190 544v2M191 540v2M192 536v2M192 540v1M193 540v2M194 550v4M195 542v2M196 527v3M197 534v3M198 466v1M198 535v1M198 538v4M199 458v1M199 486v1M199 498v1M199 510v1M199 517v1M199 526v1M199 531v1M199 537v2M199 543v2M199 548v1M200 454v1M200 475v1M200 483v1M200 520v1M200 535v1M200 547v4M201 445v1M201 451v1M201 493v1M201 510v1M201 526v1M201 540v3M202 542v2M203 547v1M203 551v1M204 554v2M205 544v1M206 541v2M207 534v1M207 537v1M208 440v1M208 442v1M208 444v2M208 447v1M208 452v4M208 457v2M208 462v2M208 467v1M208 470v1M208 472v2M208 475v3M208 479v2M208 483v1M208 489v2M208 492v5M208 498v2M208 501v1M208 503v1M208 505v1M208 507v2M208 512v1M208 515v4M208 521v3M208 526v3M208 532v2M208 536v2M208 539v6M209 549v1M210 555v2M211 548v1M212 547v3M213 551v2M214 539v4M215 448v1M215 456v1M215 462v1M215 466v1M215 487v1M215 494v1M215 506v1M215 510v1M215 516v1M215 520v2M215 530v1M215 537v6M216 538v2M217 532v3M217 536v1M218 545v3M219 543v2M220 445v1M220 460v1M220 464v1M220 468v2M220 474v3M220 482v1M220 494v1M220 497v1M220 503v2M220 521v1M220 532v1M220 534v2M221 534v2M221 537v1M222 552v1M223 543v2M224 548v4M225 543v2M226 457v1M226 467v1M226 471v1M226 475v1M226 504v1M226 514v1M226 530v1M226 538v2M227 548v1M228 527v4M228 532v2M229 518v2M229 522v1M230 456v1M230 468v1M230 518v1M230 525v1M230 529v1M230 548v2M231 539v2M232 542v2M233 528v2M234 535v5M235 534v1M235 537v5M236 538v2M237 534v2M238 529v5M239 547v1M240 508v1M240 532v1M240 536v4M241 541v1M242 541v2M243 537v3M244 532v2M245 528v9M246 543v1M247 530v4M248 547v1M249 524v1M249 529v2M250 540v3M251 545v2M252 538v3M253 547v1M254 539v4M255 541v1M256 547v2M257 452v1M257 454v1M257 456v1M257 463v2M257 474v1M257 477v1M257 479v1M257 482v1M257 484v2M257 488v1M257 491v2M257 495v2M257 499v1M257 501v1M257 504v1M257 506v1M257 514v1M257 518v1M257 521v1M257 525v1M257 531v1M257 533v1M257 538v1M257 541v1M257 546v2M258 547v1M259 541v1M260 546v1M261 534v2M262 542v2M263 542v5M264 548v2M265 531v6M266 552v1M267 537v1M267 539v4M268 543v3M269 553v1M270 449v1M270 451v1M270 458v1M270 460v2M270 463v1M270 466v1M270 469v1M270 473v1M270 475v1M270 480v1M270 482v1M270 484v1M270 491v2M270 500v2M270 504v1M270 520v1M270 523v2M270 531v1M270 533v1M270 535v1M270 540v1M270 548v2M271 545v1M272 547v2M273 526v1M273 530v4M274 552v2M275 532v1M275 535v5M276 544v1M276 546v1M277 542v1M278 542v4M279 547v1M280 533v4M281 550v2M282 544v2M283 546v1M284 545v3M285 535v4M286 537v2M287 535v4M288 544v2M289 444v5M289 455v1M289 457v1M289 462v2M289 473v1M289 476v1M289 484v1M289 487v2M289 496v1M289 498v1M289 503v3M289 510v1M289 515v1M289 519v2M289 523v2M289 533v1M289 536v3M289 541v1M289 546v2M290 540v2M291 541v3M292 541v4M293 538v1M293 540v3M294 549v3M295 550v1M296 539v2M297 553v2M298 537v2M299 545v2M300 551v1M301 545v1M302 547v1M303 549v1M304 543v1M305 435v5M305 441v1M305 443v2M305 447v1M305 449v1M305 451v2M305 454v1M305 456v7M305 464v1M305 466v3M305 470v2M305 474v1M305 476v1M305 478v2M305 481v1M305 483v1M305 485v2M305 488v3M305 494v6M305 502v2M305 505v2M305 508v5M305 514v1M305 519v7M305 528v1M305 530v1M305 533v6M305 540v5M305 546v1M306 545v2M307 541v6M308 540v1M308 543v3M309 483v1M309 541v1M310 537v3M311 537v2M312 539v3M313 539v2M314 537v4M315 551v2M316 542v5M317 540v3M318 542v1M319 542v4M320 544v1M321 549v1M322 540v2M323 534v2M323 538v1M324 540v2M325 540v3M326 534v2M327 522v2M327 525v1M327 528v3M328 530v1M328 534v1M328 538v1M329 531v2M330 545v3M331 546v2M332 548v3M333 522v3M334 534v1M335 540v2M336 542v4M337 545v2M338 536v4M339 543v1M340 539v7M341 549v2M342 545v3M343 544v4M344 547v5M345 550v2M345 553v1M346 542v4M347 543v2M347 548v1M348 541v1M349 527v1M349 529v6M350 545v2M351 534v3M352 550v1M353 542v3M354 538v1M355 531v4M356 530v4M357 527v2M358 543v2M359 541v2M360 545v2M361 536v4M362 543v2M363 550v1M364 543v4M365 546v3M366 550v2M367 544v1M368 540v2M369 537v2M370 541v2M371 536v2M372 549v4M373 551v2M374 540v3M375 537v2M377 524v8M378 548v1M379 547v1M380 521v4M380 526v1M380 528v1M380 533v1M381 535v4M382 529v5M383 536v2M384 539v1M385 540v2M386 529v6M387 525v2M388 540v2M389 532v3M390 536v3M391 552v2M392 524v4M393 533v7M394 544v3M395 530v6M396 541v2M397 540v2M398 538v2M399 543v3M400 547v2M401 547v3M402 532v1M402 534v1M403 533v4M403 538v1M404 540v2M405 538v2M406 546v2M407 544v3M408 532v2M409 527v1M409 531v1M410 536v1M411 539v2M412 551v1M413 547v2M414 538v2M415 529v2M416 538v2M417 542v4M418 550v1M419 543v2M420 545v1M421 546v2M423 548v1M424 529v4M425 530v6M426 542v2M427 552v2M428 545v2M429 546v1M430 542v2M431 552v3M432 552v1M433 540v3M434 545v3M435 545v3M436 542v1M437 542v1M438 546v1M439 542v2M440 539v1M441 532v2M441 537v1M442 543v3M443 548v2M444 553v1M445 550v2M446 551v1M447 544v4M448 545v2M449 546v2M450 536v7M451 546v2M452 547v2M453 553v2M454 545v2M455 525v4M456 516v2M456 520v3M457 538v4M458 548v2M459 543v2M460 551v2M461 540v2M462 544v2M463 534v6M464 554v2M465 548v2M466 543v2M467 546v2M468 554v2M469 549v1M470 535v1M471 534v6M472 541v3M473 539v5M474 542v2M475 544v2M476 542v3M477 543v1M478 535v5M479 537v3M480 523v3M481 546v1M482 535v1M483 550v2M484 546v2M485 540v1M486 498v10M487 529v4M487 534v1M488 549v1M489 548v2M490 551v3M491 542v4M492 543v2M493 548v4M494 543v2M495 527v7M496 542v2M497 521v6M497 528v1M497 530v1M498 545v2M499 538v1M500 545v2M501 544v3M502 542v1M503 538v1M504 552v2M505 542v2M506 519v3M506 523v6M507 529v2M508 539v2M509 538v2M510 556v1M511 547v2M512 552v2M513 555v2M514 537v2M515 535v3M516 540v1M517 542v3M518 547v2M519 542v2M520 551v1M521 544v2M522 543v1M523 540v5M524 537v1M525 543v3M526 542v2M527 543v1M528 525v6M529 549v2M530 539v3M531 538v4M532 545v4M533 543v1M534 435v2M534 439v3M534 443v3M534 447v1M534 449v6M534 457v2M534 460v2M534 463v4M534 468v5M534 475v1M534 477v1M534 479v1M534 481v3M534 485v1M534 487v1M534 491v4M534 497v1M534 499v1M534 502v1M534 505v3M534 509v3M534 513v5M534 519v11M534 531v8M534 540v3M535 538v5M536 538v1M537 534v2M538 526v1M538 528v4M539 536v2M540 520v6M541 541v2M541 544v1M542 534v3M543 538v2M544 536v2M545 546v1M546 540v3M547 543v2M548 544v2M549 541v3M550 542v2M551 538v3M552 542v2M553 533v5M554 542v2M555 545v3M556 548v1M557 545v2M558 545v2M559 540v1M560 549v2M562 547v1M563 535v1M563 537v1M564 543v2M565 547v3M566 536v3M567 537v2M568 415v1M568 417v1M568 419v2M568 422v6M568 430v5M568 436v1M568 438v1M568 440v2M568 443v1M568 446v1M568 448v3M568 453v2M568 456v7M568 465v1M568 467v1M568 469v7M568 478v1M568 480v4M568 485v4M568 490v5M568 496v1M568 498v2M568 501v8M568 510v4M568 515v1M568 517v3M568 521v1M568 523v1M568 525v5M568 531v1M568 533v3M568 537v3M568 541v1M568 543v1M568 547v2M569 551v2M570 546v1M571 526v5M572 538v1M573 535v5M574 549v3M575 548v2M576 546v2M577 552v1M578 539v3M579 537v2M580 553v2M581 542v5M582 537v1M583 538v4M584 547v1M585 421v1M585 425v1M585 427v1M585 429v1M585 431v1M585 435v1M585 437v1M585 439v4M585 446v2M585 450v1M585 454v1M585 462v1M585 464v1M585 467v1M585 469v1M585 471v1M585 475v1M585 477v2M585 480v1M585 483v3M585 488v2M585 491v2M585 495v2M585 498v1M585 501v3M585 505v1M585 507v1M585 511v3M585 515v4M585 520v4M585 525v3M585 529v3M585 533v2M585 538v1M585 540v1M585 542v2M586 543v1M587 543v2M588 540v3M589 534v2M590 539v5M591 539v3M592 542v3M593 543v1M594 542v2M595 540v1M596 534v2M596 537v3M597 541v2M598 513v8M598 524v1M599 535v5M600 537v1M600 539v2M601 539v2M602 539v3M603 548v1M604 544v3M605 547v2M606 536v4M607 543v1M607 545v3M608 555v1M609 552v2M610 546v1M611 538v2M612 540v1M613 535v3M614 552v1M615 544v3M616 548v4M617 554v1M618 547v3M619 540v2M620 531v2M621 549v3M622 541v2M623 534v1M624 536v4M625 539v4M626 544v2M627 537v2M628 539v2M629 540v1M630 535v2M631 533v4M632 544v1M633 533v3M634 536v1M635 531v9M636 545v1M637 546v1M638 541v1M639 543v1M640 552v2M641 547v1M642 547v2M642 550v2M643 549v2M644 545v2M645 544v2M646 546v2M647 552v2M648 520v3M649 548v2M650 550v3M651 537v2M652 547v2M653 547v2M654 522v3M655 546v2M656 542v3M657 543v1M658 532v4M659 545v3M660 549v2M661 556v1M662 532v6M663 547v2M664 545v3M665 519v7M666 536v3M667 541v2M668 541v2M669 532v3M670 537v2M671 546v1M672 524v2M672 528v2M672 531v3M673 544v3M674 543v2M675 546v2M676 545v1M676 547v1M677 541v1M678 532v2M679 535v5M680 530v7M681 550v1M682 536v2M683 534v6M684 536v5M685 539v5M686 548v3M688 548v2M689 547v1M690 541v2M691 539v2M692 541v3M693 543v1M694 544v1M695 533v1M695 536v1M695 538v2M696 544v2M697 554v1M698 536v6M699 538v1M700 540v1M701 428v1M701 430v4M701 436v1M701 442v1M701 444v1M701 447v5M701 453v2M701 460v3M701 465v1M701 467v1M701 469v7M701 478v1M701 480v3M701 484v1M701 487v8M701 498v1M701 500v4M701 506v1M701 508v2M701 511v2M701 515v2M701 521v1M701 523v5M701 529v1M701 531v1M701 537v1M701 539v4M702 545v3M703 548v1M704 550v1M705 544v4M706 549v4M707 536v3M708 545v2M709 525v5M709 532v3M710 543v2M711 538v4M712 544v1M713 543v1M713 545v4M714 546v2M715 543v3M716 543v1M717 544v2M718 528v2M718 531v1M719 533v3M720 540v1M721 425v2M721 429v5M721 436v1M721 438v6M721 445v1M721 447v1M721 450v5M721 456v10M721 467v1M721 469v4M721 476v1M721 480v2M721 484v6M721 492v3M721 496v5M721 502v1M721 504v4M721 509v1M721 514v1M721 517v4M721 522v1M721 524v3M721 528v1M721 530v1M721 532v5M721 538v5M721 545v6M721 552v1M722 542v2M723 541v2M724 539v1M725 543v3M726 540v1M727 538v3M728 538v2M729 542v4M730 538v2M731 540v3M732 529v6M733 530v2M734 521v1M734 526v1M735 536v3M736 536v6M737 543v2M738 550v3M739 544v3M740 544v1M741 431v2M741 436v2M741 440v1M741 442v2M741 447v1M741 450v3M741 455v1M741 459v2M741 462v1M741 468v2M741 471v1M741 473v4M741 482v1M741 484v5M741 491v2M741 495v2M741 499v2M741 502v1M741 506v1M741 508v3M741 513v1M741 515v1M741 517v1M741 520v3M741 524v1M741 530v1M741 532v1M741 535v2M741 540v4M741 547v2M741 552v1M743 546v2M744 542v2M745 540v2M746 539v3M747 544v2M748 546v2M749 543v2M750 538v1M750 540v2M751 545v2M752 548v4M753 548v1M754 544v3M755 543v2M756 525v1M756 530v1M757 539v1M757 544v1M758 548v4M759 532v5M760 537v2M761 542v2M762 536v4M763 420v1M763 422v1M763 424v1M763 426v6M763 433v4M763 438v1M763 440v1M763 442v6M763 449v3M763 453v1M763 455v3M763 460v1M763 462v2M763 466v4M763 471v3M763 476v6M763 483v5M763 489v1M763 492v5M763 500v1M763 502v9M763 512v2M763 515v2M763 519v6M763 526v2M763 529v2M763 532v1M763 534v2M763 538v7M764 525v2M764 528v6M765 527v2M766 528v2M766 531v1M766 533v2M767 539v1M768 538v2M769 539v2M770 551v1M771 551v2M772 548v2M773 538v2M774 552v2M775 549v2M776 546v1M777 549v1M778 543v1M779 551v3M780 425v2M780 430v5M780 437v3M780 441v1M780 443v1M780 445v4M780 451v1M780 457v1M780 465v2M780 468v1M780 470v3M780 474v3M780 479v1M780 481v1M780 483v1M780 486v1M780 489v2M780 493v1M780 497v1M780 502v5M780 510v2M780 514v1M780 516v1M780 520v1M780 523v5M780 529v3M780 534v1M780 536v1M780 539v2M780 542v2M781 524v3M781 529v6M782 542v2M783 521v6M783 529v2M784 535v5" stroke="#0870e0"/><path d="M116 546v2M117 541v3M119 544v1M119 546v3M120 541v4M121 527v9M122 545v3M123 542v3M124 538v2M125 545v1M126 544v3M127 542v2M128 546v2M129 549v1M130 545v2M131 541v1M132 551v2M133 542v3M134 533v6M134 540v3M135 525v2M135 528v2M135 531v2M136 552v2M137 540v2M138 553v1M139 548v2M140 546v3M141 547v1M142 537v1M143 534v5M144 540v2M145 539v3M145 543v2M146 548v2M148 549v1M149 541v2M150 547v2M151 545v1M152 554v1M153 543v2M155 553v2M156 553v1M157 556v1M158 531v7M159 540v3M160 548v3M160 553v1M161 541v3M162 546v1M163 555v2M164 555v1M165 548v7M166 542v4M167 547v1M168 554v3M169 474v1M170 548v4M171 541v1M172 547v1M173 544v3M174 536v3M174 540v1M175 551v2M176 543v3M177 553v3M178 455v1M178 464v1M178 548v3M179 545v1M180 540v1M181 544v2M182 545v4M183 539v3M184 434v1M184 544v2M185 513v1M185 526v1M185 552v5M186 537v1M187 542v4M188 548v1M189 546v3M190 546v1M191 542v1M192 541v1M193 542v4M194 554v1M195 544v3M196 530v7M197 537v1M198 536v2M198 542v1M199 545v3M199 549v2M200 551v1M201 543v1M202 544v1M203 548v3M203 552v1M204 556v1M205 545v2M206 543v1M207 538v4M208 545v1M209 550v1M210 557v1M211 549v3M212 550v2M213 553v3M214 543v3M215 543v1M216 540v1M217 535v1M217 537v2M218 548v2M219 545v1M220 536v4M221 536v1M221 538v3M222 553v2M223 545v3M224 552v1M225 545v3M226 540v2M227 549v6M228 531v1M228 534v2M229 523v1M229 525v2M229 528v1M230 550v3M231 541v5M232 544v3M233 530v2M233 535v1M234 540v1M235 542v2M236 540v3M237 536v2M238 534v1M239 548v2M240 540v1M241 542v2M242 543v1M243 540v2M244 534v4M245 537v2M246 544v1M247 534v3M248 548v5M249 525v4M249 531v2M249 534v3M250 543v1M251 547v2M252 541v1M253 548v1M253 550v1M254 543v2M255 542v3M256 549v1M257 548v5M258 548v4M259 542v4M260 547v1M261 536v4M262 544v5M263 547v2M264 550v2M265 537v2M266 553v1M267 543v1M268 546v2M269 554v2M270 550v2M271 546v2M272 549v2M273 527v3M273 534v2M274 554v1M275 540v1M276 547v1M277 543v2M278 546v3M279 548v2M280 537v2M281 552v2M282 546v2M283 547v1M284 548v2M285 539v3M286 539v4M287 539v2M288 546v3M289 548v2M290 542v3M291 544v3M292 545v1M293 539v1M293 543v2M294 552v2M295 551v6M296 541v2M297 555v2M298 539v2M299 547v2M300 548v3M300 552v1M301 546v2M302 548v3M303 550v1M303 552v3M304 544v1M305 442v1M305 545v1M305 547v3M306 547v4M307 547v1M308 546v3M309 542v3M310 540v2M311 539v2M312 542v4M313 541v4M314 541v1M315 553v2M316 547v1M317 543v3M318 543v2M319 546v1M320 545v5M321 550v1M321 553v1M322 542v1M323 536v2M323 539v2M324 542v2M324 545v1M325 543v3M326 536v3M326 540v1M327 524v1M327 526v2M327 531v1M328 535v3M328 539v4M329 533v5M330 548v2M331 548v3M332 551v1M333 525v2M334 535v5M335 542v2M336 546v2M337 547v1M338 540v2M339 544v2M340 546v1M341 551v1M342 548v1M343 548v2M344 552v1M345 552v1M345 554v2M346 546v2M347 545v3M348 542v3M349 535v5M350 547v5M351 537v3M352 551v1M353 545v2M354 539v3M355 535v3M356 534v2M356 537v1M356 539v4M357 529v5M358 545v1M359 543v2M360 547v3M361 540v2M362 545v2M362 548v1M363 551v3M364 547v3M365 549v3M366 552v3M367 545v3M368 542v2M369 539v7M370 543v1M371 538v3M372 553v2M373 553v1M374 543v2M375 539v5M376 541v4M377 532v2M378 549v2M379 548v2M380 529v4M380 534v1M381 539v4M382 534v2M383 538v3M384 540v3M385 542v3M386 535v3M387 527v11M388 542v2M389 535v4M389 540v1M390 539v4M391 554v4M392 528v2M393 540v3M394 547v1M395 536v4M396 543v2M397 542v2M398 540v2M399 546v1M400 549v2M401 550v2M402 533v1M402 535v3M403 537v1M403 539v2M404 542v4M405 540v2M406 548v1M407 547v2M408 534v3M409 532v4M410 537v2M411 541v5M412 552v1M413 549v1M414 540v4M415 531v3M416 540v2M417 546v2M418 551v2M419 545v2M420 546v2M421 548v3M422 547v3M423 549v4M424 533v4M425 536v3M426 544v4M427 554v3M428 547v1M429 547v1M430 544v1M431 555v1M432 553v1M433 543v2M434 548v3M435 548v1M436 543v2M437 543v1M438 547v1M439 544v2M440 540v2M440 544v2M441 538v2M442 546v3M443 550v1M444 554v2M445 552v1M446 552v2M447 548v2M448 547v1M449 548v3M450 543v2M451 548v1M452 549v3M453 555v3M454 547v3M455 529v6M456 518v2M456 523v6M457 542v3M458 550v1M459 545v4M460 553v1M461 542v2M461 545v1M462 546v2M463 540v1M464 556v1M465 550v1M466 545v2M467 548v2M468 556v1M469 550v1M470 536v7M471 540v2M472 544v2M473 544v1M474 544v2M475 546v3M476 545v3M477 544v2M479 540v3M480 526v4M481 547v3M482 536v5M483 552v2M484 548v2M485 541v1M486 508v3M487 535v1M488 550v1M489 550v2M490 554v2M491 546v2M492 545v3M493 552v2M494 545v1M495 534v3M496 544v3M497 527v1M497 529v1M497 531v4M498 547v1M499 539v3M500 547v2M501 547v2M502 543v4M503 539v4M504 554v1M505 544v3M506 529v3M506 533v1M507 531v8M508 541v3M509 540v4M510 557v2M511 549v2M512 554v1M513 557v1M514 539v1M515 538v3M516 541v2M517 545v2M518 549v3M519 544v1M520 552v2M521 546v2M521 550v1M522 544v2M523 545v1M524 538v5M525 546v3M526 544v2M527 544v2M528 531v2M529 551v3M530 542v4M531 542v2M532 549v1M533 544v2M534 437v1M534 476v1M534 539v1M534 543v4M535 543v2M536 539v1M537 536v3M538 532v6M539 538v1M539 540v3M540 526v3M541 543v1M541 545v3M542 537v2M543 540v3M544 538v2M545 547v1M546 543v1M547 545v2M548 546v1M549 544v4M550 544v1M551 541v5M552 544v1M553 538v3M554 544v3M555 548v2M556 549v3M557 547v3M558 547v2M559 541v2M560 551v1M561 548v3M562 548v3M563 536v1M563 538v2M564 545v2M565 550v2M566 539v2M567 539v3M568 476v1M568 484v1M568 549v2M569 553v2M570 547v2M571 531v4M572 539v2M573 540v2M574 552v1M575 550v3M576 548v4M577 553v2M578 542v2M579 539v5M580 555v1M581 547v3M582 538v5M583 542v4M584 548v2M585 481v1M585 544v3M586 544v1M586 547v2M587 545v2M588 543v2M589 536v4M590 544v1M591 542v3M592 545v5M593 544v4M594 544v3M595 541v2M596 536v1M596 540v2M597 543v4M598 521v3M598 525v3M599 540v2M600 541v1M601 541v4M602 542v4M603 549v1M604 547v2M605 549v2M606 540v3M607 548v2M608 556v1M609 554v3M610 547v1M611 540v2M612 541v2M613 538v3M614 553v2M615 547v3M616 552v1M617 555v2M618 550v5M619 542v2M619 545v1M620 533v2M621 552v2M622 543v3M623 535v3M623 539v1M624 540v3M625 543v1M626 546v1M627 539v3M628 541v1M629 541v2M630 537v3M631 537v2M632 545v5M633 536v2M634 537v2M635 540v1M636 546v2M637 547v1M638 542v4M639 544v1M639 551v1M640 554v2M641 548v2M642 549v1M643 551v2M644 547v3M645 546v2M646 548v4M647 555v2M648 523v4M648 528v3M649 550v2M650 553v3M651 539v2M652 549v2M653 549v1M654 525v4M655 548v2M656 545v4M657 544v2M658 536v5M659 548v1M660 551v2M662 538v2M663 549v2M664 548v4M665 526v1M665 528v2M665 531v1M666 539v4M667 543v2M668 543v1M669 535v2M670 539v4M671 547v1M672 530v1M672 534v1M673 547v1M674 545v4M675 548v3M676 548v2M677 542v2M678 534v3M679 540v2M680 537v3M681 551v2M682 538v2M683 540v3M684 541v3M685 544v2M686 551v4M687 549v2M688 550v2M689 548v4M690 543v4M691 541v1M691 544v1M692 544v3M693 544v1M694 545v3M695 540v2M696 546v2M697 555v1M698 542v1M699 539v5M700 541v1M700 544v2M701 438v1M701 522v1M701 533v1M701 543v2M702 548v2M703 549v2M705 548v2M706 553v1M707 539v2M708 547v2M709 530v2M709 535v1M710 545v1M711 542v3M712 545v4M713 549v1M714 548v1M715 546v3M716 544v5M717 546v3M718 530v1M718 532v4M719 536v3M720 541v3M721 553v1M722 544v2M723 543v2M724 540v1M725 546v3M726 541v2M727 541v4M728 540v2M729 546v2M730 540v4M731 543v3M732 535v5M733 532v5M734 527v8M735 539v2M736 542v1M737 545v2M738 553v2M739 547v3M740 545v4M741 553v3M742 552v2M743 548v1M744 544v3M745 542v4M746 542v3M747 546v2M748 548v2M749 545v4M750 542v2M751 547v4M752 552v1M753 549v2M754 547v1M755 545v2M756 531v2M757 545v1M758 552v2M759 537v2M760 539v3M761 544v1M762 540v2M763 498v1M763 545v4M764 527v1M764 534v1M765 529v7M766 530v1M766 532v1M766 535v3M767 540v1M768 540v3M769 541v3M770 552v2M771 553v2M772 550v2M773 540v3M774 554v2M775 551v2M776 547v2M777 550v5M778 544v2M778 547v1M779 554v1M780 544v1M781 535v1M782 544v1M783 527v2M783 531v1M784 540v3" stroke="#00a0ff"/><path d="M116 548v3M117 544v3M118 549v2M119 545v1M119 549v2M120 545v2M121 536v3M122 548v4M123 545v2M123 551v1M124 540v1M125 546v3M126 547v3M127 544v4M128 548v4M129 550v2M130 547v2M131 542v1M131 544v2M132 553v2M133 545v2M134 539v1M134 543v1M135 527v1M135 533v3M136 554v2M137 542v5M138 554v4M139 550v2M140 549v1M141 548v4M142 538v1M142 541v1M143 539v4M144 542v4M145 545v2M146 550v1M147 558v1M148 550v3M149 543v2M150 549v2M151 546v3M152 555v2M153 545v5M154 547v1M155 555v2M156 554v2M157 557v1M158 538v5M159 543v2M160 551v2M160 554v2M161 544v1M162 547v1M163 557v1M164 556v1M165 555v1M166 546v2M167 548v2M168 557v1M169 556v2M170 552v2M171 542v4M172 548v6M173 547v3M174 541v3M175 553v2M176 546v2M177 556v2M178 551v2M179 546v4M180 541v2M181 546v1M182 549v2M183 542v1M184 546v3M185 557v1M186 538v1M186 542v1M187 546v2M187 549v3M188 549v2M189 549v2M190 547v3M191 543v4M192 542v2M193 546v2M194 555v2M195 547v2M196 537v1M197 538v3M197 542v1M198 543v1M199 551v2M200 552v1M201 544v2M202 545v4M203 553v2M204 557v1M205 547v5M206 544v1M206 546v1M207 542v3M208 546v1M209 551v4M211 552v2M212 552v2M213 556v2M214 546v1M215 544v2M216 541v5M217 539v2M218 550v1M219 546v2M220 540v2M221 541v1M222 555v2M223 548v2M224 553v2M225 548v4M226 542v2M227 555v1M228 536v5M229 524v1M229 527v1M229 529v2M230 553v2M231 546v4M232 547v4M233 532v3M233 536v4M234 541v2M234 544v2M235 544v2M236 543v2M237 538v6M238 535v6M239 550v1M240 541v5M241 544v2M242 544v4M243 542v2M244 538v3M245 539v3M246 545v4M247 537v1M248 553v2M249 533v1M249 537v1M250 544v3M251 549v2M252 542v5M253 549v1M253 551v2M254 545v1M255 545v2M256 550v1M256 552v2M257 553v3M258 552v2M258 556v2M259 546v2M260 548v4M261 540v2M262 549v1M263 549v2M264 552v1M265 539v4M266 554v2M267 544v1M268 548v3M269 556v2M270 552v1M271 548v4M272 551v2M273 536v3M274 555v1M275 541v1M276 548v3M276 553v2M277 545v3M278 549v2M279 550v2M280 539v3M282 548v2M284 550v2M285 542v3M286 543v2M287 541v2M288 549v3M289 550v4M290 545v2M291 547v3M292 546v3M293 545v2M294 554v3M296 543v3M297 557v1M298 541v3M299 549v4M300 553v3M301 548v4M302 551v2M303 551v1M303 555v1M304 545v2M305 550v5M306 551v2M307 548v4M308 549v1M309 545v4M310 542v5M311 541v2M312 546v1M313 545v3M314 542v4M315 555v2M316 548v2M317 546v3M318 545v2M319 547v1M321 551v2M321 554v2M322 543v4M323 541v3M324 544v1M324 546v3M325 546v1M326 539v1M326 541v3M327 532v2M328 543v1M329 538v2M330 550v2M331 551v3M332 552v3M333 527v6M333 534v1M334 540v2M335 544v1M336 548v3M337 548v2M338 542v2M339 546v2M340 547v1M341 552v3M342 549v1M343 550v2M344 553v1M345 556v1M346 548v2M347 549v2M348 545v2M348 548v1M350 552v1M351 540v2M352 552v6M353 547v2M354 542v5M355 538v4M356 536v1M356 538v1M356 543v1M357 534v4M357 539v1M358 546v1M359 545v7M360 550v2M361 542v3M362 547v1M362 549v2M363 554v3M364 550v2M365 552v2M366 555v2M367 548v6M368 544v1M369 546v1M370 544v1M370 546v2M371 541v3M372 555v1M373 554v3M374 545v3M375 544v1M376 545v2M377 534v2M378 551v4M379 550v4M380 535v4M381 543v3M382 536v2M383 541v6M384 543v3M385 545v2M386 538v4M387 538v2M388 544v1M389 539v1M389 541v2M390 543v2M392 530v5M393 543v3M394 548v4M395 540v1M396 545v1M397 544v3M398 542v4M399 547v4M400 551v4M401 552v2M402 538v3M403 541v2M404 546v1M405 542v5M406 549v1M407 549v4M408 537v5M409 536v3M410 539v4M411 546v2M412 553v3M413 550v4M414 544v3M415 534v2M415 537v2M416 542v3M417 548v4M418 553v2M419 547v5M420 548v1M421 551v2M422 550v3M423 553v4M424 537v4M425 539v2M426 548v1M427 557v1M428 548v2M429 548v5M430 545v2M430 551v1M431 556v2M432 554v3M433 545v4M434 551v2M435 549v4M436 545v3M437 544v3M438 548v4M439 546v2M440 542v2M440 546v1M441 540v5M442 549v2M443 551v3M444 556v2M445 553v1M446 554v3M447 550v1M448 548v5M449 551v4M450 545v2M451 549v2M452 552v2M453 558v1M454 550v2M455 535v1M455 542v1M456 529v4M457 545v1M458 551v2M459 549v2M460 554v4M461 544v1M461 546v2M462 548v5M463 541v3M464 557v1M465 551v2M466 547v5M467 550v4M468 557v2M469 551v4M470 543v3M471 542v4M472 546v3M473 545v4M474 546v2M475 549v2M476 548v5M477 546v6M478 540v2M479 543v2M480 530v3M481 550v2M482 541v3M483 554v4M484 550v4M485 542v4M486 511v9M487 536v4M488 551v4M489 552v2M490 556v1M491 548v2M492 548v1M493 554v2M494 546v1M495 537v3M496 547v2M497 535v2M498 548v4M499 542v5M500 549v3M501 549v2M501 552v1M502 547v1M503 543v1M504 555v2M505 547v5M506 532v1M506 534v2M507 539v1M508 544v2M509 544v1M511 551v1M512 555v2M513 558v1M514 540v5M515 541v1M516 543v6M517 547v6M518 552v2M519 545v4M520 554v3M521 548v2M521 551v2M522 546v3M523 546v2M524 543v3M525 549v1M526 546v3M527 546v4M528 533v2M529 554v2M530 546v1M531 544v1M532 550v3M533 546v1M534 547v2M535 545v2M536 540v2M537 539v3M538 538v3M539 539v1M539 543v1M540 529v6M541 548v1M542 539v3M543 543v3M544 540v2M545 548v2M546 544v2M547 547v5M548 547v1M549 548v2M550 545v4M551 546v1M552 545v2M553 541v2M554 547v2M555 550v1M556 552v3M557 550v3M558 549v4M559 543v2M560 552v1M561 551v4M562 551v1M563 540v2M564 547v2M565 552v1M566 541v2M567 542v5M568 551v4M569 555v2M570 549v3M571 535v2M572 541v3M573 542v4M574 553v2M575 553v2M576 552v1M577 555v1M578 544v5M579 544v1M580 556v1M581 550v2M582 543v2M583 546v2M584 550v2M585 547v1M586 545v2M586 549v1M587 547v3M589 540v1M590 545v1M591 545v3M592 550v2M593 548v2M594 547v2M595 543v2M596 542v1M597 547v2M598 528v4M598 533v1M599 542v2M600 542v4M601 545v1M602 546v1M603 550v3M604 549v2M605 551v3M606 543v3M607 550v1M608 557v1M609 557v1M610 548v1M611 542v3M612 543v2M613 541v4M614 555v2M615 550v2M615 553v1M616 553v2M617 557v2M618 555v1M619 544v1M619 546v4M620 535v6M621 554v1M622 546v1M623 538v1M623 540v1M624 543v2M625 544v2M626 547v2M627 542v4M628 542v3M629 543v2M630 540v4M631 539v1M632 550v2M633 538v5M634 539v7M635 541v1M636 548v6M637 548v4M638 546v4M639 545v6M639 552v2M640 556v2M641 550v2M642 552v2M643 553v1M644 550v3M645 548v1M646 552v3M647 557v2M648 527v1M648 531v3M649 552v2M650 556v1M651 541v3M652 551v3M653 550v2M654 529v6M655 550v2M656 549v1M657 546v3M658 541v1M659 549v2M660 553v3M661 557v1M662 540v3M663 551v2M664 552v2M665 527v1M665 530v1M665 532v5M666 543v2M667 545v6M668 544v2M668 547v1M669 537v6M670 543v1M671 548v4M672 535v1M673 548v2M674 549v1M675 551v2M676 550v2M677 544v3M678 537v2M679 542v2M680 540v1M681 553v2M682 540v3M683 543v1M684 544v1M685 546v2M686 555v1M687 551v2M688 552v3M689 552v1M690 547v2M691 542v2M691 545v3M692 547v2M693 545v2M694 548v3M695 542v4M696 548v4M697 556v1M698 543v2M699 544v3M700 542v2M700 546v1M701 545v4M702 550v2M703 551v3M704 551v6M705 550v2M706 554v2M707 541v3M708 549v3M709 536v4M710 546v2M711 545v1M712 549v3M713 550v1M714 549v3M714 553v1M715 549v2M716 549v1M717 549v1M718 536v2M719 539v2M720 544v3M721 554v3M722 546v2M723 545v1M724 541v5M725 549v2M726 543v3M727 545v2M728 542v2M729 548v3M730 544v3M731 546v1M732 540v2M733 537v4M734 535v3M735 541v5M736 543v1M737 547v2M737 551v1M738 555v2M739 550v2M740 549v2M741 556v1M742 554v1M743 549v2M744 547v1M745 546v1M746 545v2M747 548v4M748 550v3M749 549v2M750 544v1M751 551v2M752 553v2M753 551v2M754 548v1M755 547v1M756 533v6M757 546v3M758 554v2M759 539v3M760 542v5M761 545v2M762 542v2M763 549v3M764 535v3M765 536v3M766 538v2M767 541v1M767 543v3M768 543v1M769 544v2M770 554v2M771 555v2M772 552v3M773 543v3M774 556v1M775 553v3M776 549v4M777 555v2M778 546v1M778 548v3M779 555v3M780 545v2M781 536v4M782 545v3M783 532v7M784 543v3" stroke="#00d8ff"/><path d="M116 551v2M117 547v5M118 551v1M118 553v1M119 551v1M120 547v1M121 539v2M122 552v1M123 547v1M123 549v2M123 552v1M124 541v3M125 549v2M126 550v3M127 548v2M128 552v3M129 552v3M130 549v4M131 543v1M131 546v2M132 555v3M133 547v2M134 544v1M135 536v2M136 556v2M137 547v1M139 552v2M140 550v2M141 552v1M142 539v2M142 542v2M143 543v2M144 546v1M145 547v3M146 551v5M147 559v1M148 553v3M149 545v6M150 551v4M151 549v2M152 557v2M153 550v3M154 548v3M155 557v1M156 556v1M157 558v1M158 543v1M159 545v2M160 556v1M161 545v4M162 548v3M163 558v1M165 556v1M166 548v1M167 550v6M168 558v1M169 558v1M170 554v3M171 546v3M172 554v2M173 550v3M174 544v3M175 555v1M176 548v2M178 553v2M179 550v3M180 543v4M181 547v5M182 551v4M183 543v2M183 546v2M184 549v3M186 539v3M186 543v1M187 548v1M188 551v5M189 551v3M190 550v1M190 552v1M191 547v1M192 544v4M193 548v3M194 557v1M195 549v4M196 538v3M197 541v1M197 543v3M198 544v1M198 546v2M199 553v3M200 553v1M201 546v1M201 551v2M202 549v2M203 555v1M204 558v1M205 552v2M206 545v1M206 547v3M207 545v2M208 547v2M209 555v1M210 558v2M211 554v3M212 554v4M213 558v1M214 547v1M214 549v1M215 546v3M216 546v1M217 541v5M218 551v1M219 548v4M220 542v6M221 542v7M222 557v1M223 550v2M224 555v2M225 552v1M226 544v2M227 556v2M228 541v1M229 531v2M229 534v1M230 555v1M231 550v2M232 551v4M233 540v1M234 543v1M234 546v2M235 546v4M236 545v1M237 544v2M238 541v2M239 551v4M240 546v1M241 546v5M242 548v4M243 544v3M244 541v2M245 542v2M246 549v2M247 538v4M248 555v2M249 538v1M250 547v4M251 551v4M252 547v2M252 550v2M253 553v2M254 546v2M255 547v3M256 551v1M256 554v2M257 556v2M258 554v2M258 558v1M259 548v3M260 552v2M261 542v5M262 550v1M262 552v3M263 551v2M264 553v2M265 543v2M266 556v2M267 545v2M268 551v3M270 553v2M271 552v3M272 553v4M273 539v2M274 556v2M275 542v3M276 551v2M276 555v1M277 548v4M278 551v3M279 552v3M280 542v3M281 554v3M282 550v1M282 552v1M283 548v7M284 552v2M285 545v2M286 545v3M287 543v3M288 552v2M289 554v3M290 547v1M290 549v2M291 550v1M292 549v3M293 547v1M294 557v2M295 557v1M296 546v2M297 558v1M298 544v4M299 553v4M300 556v1M301 552v2M302 553v5M303 556v2M304 547v5M305 555v1M306 553v1M307 552v1M308 550v5M309 549v4M310 547v1M310 550v2M311 543v2M312 547v1M312 550v2M313 548v2M314 546v3M315 557v1M316 550v3M317 549v2M318 547v4M319 548v4M320 550v5M321 556v2M322 547v5M323 544v3M324 549v2M325 547v1M326 544v2M327 534v7M328 544v2M329 540v4M330 552v2M331 554v2M332 555v3M333 533v1M333 535v4M334 542v2M335 545v4M336 551v2M337 550v1M337 552v3M338 544v3M339 548v2M340 548v4M341 555v2M342 550v6M343 552v2M344 554v2M345 557v1M346 550v1M347 551v2M348 547v1M348 549v2M349 540v3M350 553v2M351 542v3M352 558v1M353 549v6M354 547v2M355 542v3M356 544v1M357 538v1M357 540v1M358 547v6M359 552v2M360 552v3M361 545v2M362 551v3M363 557v2M364 552v2M365 554v2M366 557v1M367 554v2M368 545v4M369 547v1M370 545v1M370 548v3M371 544v1M372 556v2M373 557v1M374 548v3M375 545v5M376 547v2M377 536v5M378 555v1M379 554v2M380 539v4M381 546v2M382 538v4M383 547v6M384 546v3M385 547v6M386 542v3M387 540v1M388 545v5M389 543v3M390 545v1M391 558v1M392 535v4M393 546v2M394 552v2M395 541v1M395 544v2M396 546v2M397 547v2M398 546v4M399 551v2M400 555v2M401 554v4M402 541v3M403 543v2M404 547v2M405 547v1M406 550v3M407 553v2M408 542v2M409 539v4M410 543v1M411 548v2M412 556v2M413 554v3M414 547v3M415 536v1M415 539v3M416 545v2M417 552v1M418 555v3M419 552v1M420 549v7M421 553v4M422 553v1M423 557v2M424 541v2M425 541v1M426 549v2M427 558v1M428 550v3M429 553v3M430 547v4M431 558v1M432 557v2M433 549v2M434 553v1M435 553v2M436 548v3M437 547v2M438 552v2M439 548v3M440 547v1M441 545v1M442 551v5M443 554v1M445 554v4M446 557v1M447 551v2M448 553v1M449 555v1M450 547v1M450 549v4M451 551v2M452 554v1M453 559v1M454 552v3M455 536v6M455 543v1M456 533v4M457 546v2M458 553v3M459 551v3M460 558v1M461 548v2M462 553v3M463 544v1M464 558v1M465 553v2M466 552v2M467 554v3M468 559v1M469 555v2M470 546v2M471 546v1M472 549v2M473 549v2M474 548v3M475 551v2M476 553v1M477 552v2M478 542v4M479 545v3M480 533v5M481 552v4M482 544v3M482 548v2M484 554v2M485 546v3M486 520v1M486 522v1M487 540v2M487 543v3M488 555v2M489 554v3M490 557v1M491 550v3M492 549v3M493 556v2M494 547v3M495 540v3M496 549v4M497 537v3M498 552v2M499 547v1M500 552v1M501 551v1M501 553v2M502 548v4M503 544v2M503 550v2M504 557v2M505 552v1M506 536v7M507 540v2M508 546v4M509 545v3M510 559v1M511 552v3M511 556v1M512 557v1M514 545v4M515 542v5M516 549v1M517 553v2M518 554v2M519 549v3M520 557v1M521 553v2M522 549v2M523 548v1M523 550v5M524 546v1M525 550v3M526 549v2M527 550v5M528 535v4M529 556v1M530 547v2M530 550v1M532 553v3M533 547v3M534 549v2M535 547v2M536 543v4M537 542v3M538 541v2M540 535v2M540 538v1M541 549v2M541 553v2M542 542v2M543 546v4M544 542v4M545 550v3M546 546v3M547 552v2M548 548v5M549 550v2M550 549v3M551 547v2M552 547v7M553 543v3M554 549v3M555 551v4M556 555v3M557 553v3M558 553v1M559 545v5M560 553v5M561 555v2M562 552v3M562 556v2M563 542v3M564 549v4M565 553v2M566 543v6M567 547v1M568 555v2M569 557v2M570 552v4M571 537v2M572 544v5M573 546v1M574 555v2M575 555v1M576 553v2M577 556v1M578 549v1M579 545v1M580 557v1M581 552v2M582 545v2M583 548v3M584 552v3M585 548v3M586 550v2M587 550v1M587 554v1M588 545v5M589 541v5M590 546v4M591 548v3M592 552v1M593 550v1M593 552v1M594 549v2M595 545v5M596 543v2M597 549v5M597 555v1M598 532v1M598 534v2M598 538v2M599 544v1M600 546v1M601 546v2M602 547v4M603 553v4M604 551v3M605 554v4M606 546v1M607 551v4M608 558v1M609 558v1M610 549v3M610 553v2M611 545v2M612 545v7M613 545v3M614 557v1M615 552v1M615 554v1M616 555v2M617 559v1M618 556v1M619 550v1M620 541v3M621 555v1M622 547v2M622 551v1M623 541v3M624 545v1M625 546v4M626 549v2M627 546v2M628 545v2M629 545v4M630 544v1M630 546v2M631 540v2M632 552v4M633 543v3M634 546v2M635 542v4M636 554v2M637 552v3M638 550v1M639 554v1M640 558v1M641 552v2M641 556v2M642 554v1M643 554v4M644 553v4M645 549v2M646 555v2M647 559v1M648 534v5M649 554v4M650 557v1M651 544v3M652 554v4M653 552v4M654 535v5M655 552v2M656 550v2M657 549v1M658 542v2M659 551v3M660 556v1M661 558v1M662 543v1M663 553v3M664 554v1M665 537v2M666 545v3M667 551v2M668 546v1M668 548v2M668 554v1M669 543v3M670 544v2M671 552v1M672 536v6M672 545v1M673 550v2M674 550v3M675 553v1M676 552v3M677 547v5M678 539v1M678 541v3M679 544v3M680 541v4M681 555v3M682 543v2M683 544v3M684 545v4M685 548v4M686 556v2M687 553v4M688 555v3M689 553v3M690 549v2M691 548v6M692 549v3M693 547v3M694 551v3M695 546v2M696 552v2M697 557v1M698 545v4M699 547v1M700 547v1M701 549v2M702 552v2M702 555v3M703 554v1M704 557v2M705 552v3M706 556v2M707 544v6M708 552v2M709 540v3M709 544v1M710 548v7M711 546v3M712 552v2M713 551v4M714 552v1M714 554v3M715 551v3M716 550v1M716 554v1M717 550v1M718 538v4M719 541v3M720 547v3M721 557v1M722 548v3M723 546v4M724 546v2M725 551v3M726 546v2M727 547v1M728 544v3M729 551v4M730 547v2M731 547v5M732 542v3M733 541v2M734 538v1M735 546v1M736 544v4M737 549v2M737 552v2M738 557v1M739 552v2M740 551v2M741 557v2M742 555v1M743 551v4M744 548v5M745 547v3M746 547v5M747 552v2M748 553v3M749 551v2M750 545v4M750 550v1M751 553v2M752 555v3M753 553v3M754 549v7M755 548v4M756 539v2M757 549v3M758 556v2M759 542v4M760 547v1M761 547v5M762 544v2M763 552v1M764 538v3M765 539v2M766 540v3M767 542v1M767 546v1M768 544v3M769 546v1M770 556v2M771 557v1M772 555v2M773 546v3M774 557v2M775 556v2M776 553v2M777 557v2M778 551v1M779 558v1M780 547v1M781 540v3M782 548v4M783 539v1M784 546v1" stroke="#00d8d0"/><path d="M116 553v3M117 552v1M117 557v1M118 552v1M118 554v4M119 552v2M120 548v4M121 541v3M122 553v2M123 548v1M123 553v1M124 544v6M125 551v5M126 553v3M127 550v1M128 555v2M129 555v2M130 553v3M131 548v2M132 558v1M133 549v2M134 545v2M135 538v2M136 558v2M137 548v8M138 558v1M139 554v2M140 552v1M140 556v2M141 553v2M141 556v2M142 544v1M142 546v3M143 545v2M144 547v3M145 550v2M146 556v2M148 556v2M149 551v2M150 555v1M151 551v4M151 556v2M153 553v3M154 551v3M155 558v1M156 557v1M157 559v1M158 544v2M158 547v2M159 547v5M160 557v1M161 549v2M162 551v4M164 557v3M165 557v1M166 549v5M167 556v2M168 559v1M170 557v2M171 549v2M172 556v1M173 553v4M174 547v2M175 556v1M176 550v1M176 552v3M177 558v2M178 555v3M179 553v2M180 547v1M181 552v4M182 555v1M183 545v1M183 548v4M184 552v3M185 558v1M185 572v1M186 544v5M187 552v2M188 556v2M189 554v3M190 551v1M190 553v4M191 548v3M192 548v4M193 551v3M194 558v1M195 553v3M196 541v3M197 546v2M198 545v1M198 548v5M199 556v2M200 554v4M201 547v4M201 553v1M202 551v7M203 556v3M204 559v1M205 554v3M206 550v4M207 547v2M208 549v1M209 556v1M210 560v1M211 557v1M212 558v1M213 559v1M214 548v1M214 550v4M215 549v4M216 547v5M217 546v3M218 552v3M219 552v2M220 548v1M222 558v1M223 552v2M224 557v1M225 553v3M225 557v1M226 546v4M226 554v1M227 558v1M228 542v1M229 533v1M229 535v6M230 556v2M231 552v4M232 555v3M233 541v6M234 548v3M235 550v1M236 546v3M236 554v1M237 546v2M238 543v1M239 555v2M240 547v1M240 549v3M241 551v3M242 552v3M243 547v4M244 543v1M245 544v1M245 546v3M246 551v4M247 542v2M248 557v1M249 539v2M250 551v4M251 555v1M252 549v1M252 552v1M253 555v3M254 548v4M254 553v2M255 550v3M256 556v2M257 558v1M258 559v1M259 551v2M260 554v3M261 547v3M262 551v1M262 555v3M263 553v5M264 555v3M265 545v2M266 558v1M267 547v6M268 554v2M269 558v1M270 555v3M271 555v2M272 557v1M273 541v2M274 558v2M275 545v7M276 556v2M277 552v3M278 554v4M279 555v3M280 545v3M280 549v2M281 557v1M282 551v1M282 553v4M283 555v2M284 554v4M285 547v1M285 549v3M286 548v2M287 546v3M287 550v2M288 554v2M289 557v1M290 548v1M290 551v4M291 551v7M292 552v3M293 548v5M293 555v1M294 559v1M295 558v1M296 548v4M297 559v2M298 548v1M299 557v1M300 557v1M301 554v3M302 558v1M303 558v2M304 552v1M305 556v2M306 554v4M307 553v3M308 555v2M309 553v2M310 548v2M310 552v2M311 545v5M312 548v2M312 552v2M313 550v3M314 549v4M315 558v1M316 553v2M317 551v2M318 551v5M319 552v2M319 555v1M320 555v2M321 558v2M322 552v2M323 547v2M324 551v2M325 548v4M326 546v3M327 541v3M328 546v2M329 544v2M330 554v5M330 572v1M331 556v2M332 558v1M333 539v4M334 544v4M335 549v2M335 552v3M336 553v3M337 551v1M337 555v1M338 547v1M338 549v1M339 550v7M340 552v1M341 557v2M342 556v1M343 554v3M344 556v2M345 558v2M346 551v4M346 556v1M347 553v3M348 551v3M348 555v3M349 543v4M350 555v1M351 545v2M351 551v2M352 559v2M353 555v2M354 549v5M355 545v2M356 545v4M357 541v2M358 553v5M359 554v1M360 555v3M361 547v2M362 554v2M363 559v1M364 554v2M365 556v2M366 558v2M367 556v2M368 549v2M369 548v5M370 551v2M370 554v1M371 545v4M372 558v1M373 558v2M374 551v2M375 550v4M376 549v3M377 541v5M378 556v1M379 556v1M380 543v1M381 548v2M382 542v2M383 553v3M384 549v4M385 553v3M386 545v2M387 541v3M388 550v2M389 546v2M390 546v4M391 559v1M392 539v4M393 548v1M393 550v2M394 554v4M395 542v2M395 546v2M396 548v5M397 549v4M397 555v3M398 550v2M398 563v4M399 553v2M399 562v1M399 564v1M400 557v2M401 558v1M402 544v5M403 545v2M404 549v2M405 548v2M406 553v5M407 555v2M408 544v2M409 543v2M410 544v6M411 550v5M412 558v1M413 557v1M414 550v2M414 553v1M415 542v2M416 547v4M417 553v4M418 558v1M419 553v3M420 556v2M421 557v1M422 554v4M424 543v3M425 542v1M426 551v4M427 559v1M428 553v3M429 556v3M430 552v2M431 559v1M432 559v1M433 551v5M434 554v3M435 555v2M436 551v4M437 549v4M438 554v2M439 551v3M440 548v4M441 546v6M442 556v1M443 555v2M444 558v2M445 558v1M446 558v2M447 553v2M448 554v4M449 556v1M450 548v1M450 553v2M451 553v2M452 555v2M453 560v1M454 555v3M455 544v1M456 537v4M457 548v3M457 552v1M458 556v2M459 554v2M460 559v1M461 550v3M462 556v1M463 545v4M464 559v2M465 555v3M466 554v3M467 557v1M468 560v1M469 557v1M470 548v3M471 547v2M472 551v3M473 551v1M473 553v3M474 551v3M474 555v1M475 553v3M475 557v1M476 554v4M477 554v2M478 546v2M479 548v4M480 538v3M481 556v2M482 547v1M482 550v2M483 558v2M484 556v1M485 549v3M486 521v1M486 523v6M486 533v1M487 542v1M487 546v2M488 557v1M489 557v1M490 558v2M491 553v4M492 552v2M493 558v1M494 550v5M495 543v2M496 553v3M497 540v3M498 554v2M499 548v6M500 553v5M501 555v2M502 552v5M503 546v4M503 552v1M505 553v2M505 556v1M506 543v2M507 542v3M507 546v1M508 550v1M508 553v2M509 548v7M510 560v1M511 555v1M511 557v2M512 558v2M513 559v1M514 549v3M515 547v5M516 550v1M516 552v1M517 555v1M518 556v2M519 552v2M519 555v1M520 558v2M521 555v2M522 551v3M523 549v1M523 555v1M524 547v1M525 553v4M526 551v5M527 555v1M528 539v4M529 557v2M530 549v1M530 551v3M531 545v4M531 551v3M532 556v2M533 550v3M534 551v5M535 549v2M536 542v1M536 547v1M537 545v3M537 549v1M538 543v1M539 544v1M539 547v5M540 537v1M540 539v4M541 551v2M541 555v3M542 544v3M543 550v1M544 546v5M545 553v2M546 549v2M546 552v3M547 554v4M548 553v1M548 555v2M549 552v2M550 552v3M551 549v3M552 554v2M553 546v4M554 552v2M554 555v2M555 555v1M556 558v1M557 556v1M558 554v3M559 550v3M560 558v1M561 557v1M562 555v1M562 558v1M563 545v3M564 553v3M565 555v3M566 549v4M567 548v8M568 557v2M569 559v1M570 556v1M571 539v5M572 549v1M573 547v3M574 557v2M575 556v1M576 555v2M577 557v2M578 550v2M579 546v1M580 558v1M581 554v3M582 547v2M583 551v4M584 555v2M585 551v3M586 552v4M587 551v3M587 555v1M588 550v4M589 546v7M590 550v3M591 551v2M592 553v2M593 551v1M593 553v1M594 551v1M594 557v1M595 550v3M596 545v2M597 554v1M597 556v2M598 536v2M598 540v2M599 545v3M599 549v3M600 547v3M601 548v7M602 551v3M603 557v1M604 554v4M605 558v1M606 547v2M607 555v2M608 559v1M609 559v1M610 552v1M610 555v1M611 547v4M612 552v1M613 548v4M614 558v2M615 555v2M616 557v1M617 560v1M618 557v1M619 551v2M620 544v2M621 556v3M622 549v2M622 552v1M623 544v4M624 546v3M625 550v5M626 551v5M627 548v2M628 547v2M629 549v2M630 545v1M630 548v4M631 542v2M632 556v1M633 546v1M634 548v2M635 546v1M636 556v1M637 555v4M638 551v5M639 555v2M641 554v2M642 555v3M643 558v2M644 557v2M645 551v1M646 557v2M647 560v1M648 539v4M650 558v2M651 547v6M652 558v1M653 556v2M654 540v3M655 554v4M656 552v1M657 550v4M658 544v3M659 554v4M660 557v1M661 559v1M662 544v1M663 556v3M664 555v3M665 539v3M666 548v4M667 553v1M668 550v1M668 552v2M668 555v1M669 546v1M670 546v6M671 553v3M672 542v3M672 546v1M673 552v4M674 553v2M675 554v4M676 555v2M677 552v3M678 540v1M678 544v3M679 547v3M680 545v3M681 558v1M682 545v6M683 547v3M684 549v2M685 552v3M686 558v1M687 557v3M688 558v1M689 556v2M690 551v3M691 554v2M692 552v2M693 550v2M694 554v2M695 548v2M696 554v3M697 558v1M698 549v2M699 548v5M700 548v3M701 551v4M702 554v1M702 558v1M703 555v1M704 559v1M705 555v2M706 558v1M707 550v4M708 554v1M708 556v1M709 543v1M709 545v2M710 555v1M711 549v4M712 554v2M713 555v1M714 557v1M715 554v2M716 551v3M716 555v1M717 551v5M718 542v2M719 544v6M720 550v5M721 558v1M722 551v3M723 550v6M724 548v4M725 554v2M726 548v3M727 548v1M728 547v1M729 555v2M730 549v3M731 552v1M732 545v2M733 543v2M734 539v3M735 547v1M735 553v2M736 548v5M737 554v4M738 558v1M739 554v4M740 553v3M741 559v2M742 556v1M743 555v2M744 553v4M745 550v5M746 552v3M747 554v3M748 556v1M749 553v5M750 549v1M750 551v3M751 555v3M753 556v2M754 556v1M755 552v6M756 541v6M757 552v4M759 546v2M760 548v5M761 552v1M762 546v4M763 553v1M763 555v1M764 541v3M765 541v3M766 543v2M767 547v2M768 547v5M769 547v1M769 549v5M770 558v1M771 558v1M772 557v1M773 549v2M774 559v1M775 558v1M776 555v2M778 552v3M779 559v1M780 548v5M781 543v3M782 552v3M783 540v2M784 547v1" stroke="#20e8a0"/><path d="M116 556v2M117 558v1M118 558v2M119 554v4M120 552v2M121 544v2M122 555v3M122 560v1M123 554v4M124 550v6M125 556v4M126 556v2M127 551v5M128 557v2M129 557v1M130 556v2M131 550v5M132 559v1M133 551v3M134 547v3M135 540v2M136 560v1M136 572v1M137 556v1M138 559v1M139 556v2M140 553v3M140 558v1M141 555v1M141 558v2M142 545v1M142 549v2M143 547v1M143 549v3M144 550v2M145 552v6M146 558v2M147 560v1M148 558v2M149 553v4M150 556v2M151 555v1M151 558v2M152 559v1M152 569v1M153 556v2M154 554v6M155 559v1M155 570v2M156 558v2M157 560v1M158 546v1M158 549v3M159 552v3M159 570v1M160 558v2M161 551v3M161 556v1M162 555v4M162 570v1M163 559v1M164 560v1M165 558v2M166 554v2M167 558v1M169 559v1M170 559v1M171 551v5M172 557v2M173 557v2M173 572v1M174 549v2M174 554v1M175 557v3M176 551v1M176 555v4M177 569v1M178 558v2M179 555v4M180 548v5M181 556v2M182 556v3M183 552v2M184 555v4M185 559v1M185 562v3M185 566v1M185 571v1M186 549v2M186 557v1M187 554v4M188 558v1M188 570v1M189 557v2M190 557v2M191 551v7M192 552v1M192 555v3M192 565v2M193 554v4M193 563v1M193 566v1M194 559v1M195 556v2M196 544v4M197 548v1M198 553v3M199 558v2M200 558v1M201 554v2M202 558v2M203 559v1M204 560v3M205 557v3M206 554v3M206 558v1M207 549v2M207 553v3M207 557v1M208 550v5M209 557v3M211 558v2M212 559v1M213 560v1M214 554v4M215 553v4M215 559v1M216 552v2M216 555v3M217 549v4M218 555v2M219 554v2M220 549v3M221 549v2M222 559v1M223 554v5M224 558v2M225 556v1M225 558v1M226 550v4M226 555v2M227 559v2M228 543v4M229 541v2M230 558v3M231 556v2M233 547v2M234 551v2M235 551v4M236 549v5M236 555v1M237 548v6M237 570v1M238 544v1M239 557v4M240 548v1M240 552v2M241 554v4M242 555v2M243 551v5M244 544v1M244 549v3M245 545v1M245 549v1M246 555v3M247 544v5M248 558v2M248 571v1M249 541v6M250 555v2M251 556v2M252 553v3M252 570v1M253 558v1M254 552v1M254 555v1M255 553v5M256 558v1M257 559v1M258 569v1M259 553v1M259 555v3M260 557v3M261 550v3M262 558v1M263 558v1M264 558v2M265 547v1M265 549v3M266 559v2M266 563v1M267 553v3M268 556v1M269 559v1M270 558v1M271 557v1M272 558v2M273 543v1M273 551v1M274 560v1M275 552v1M276 558v2M277 555v2M278 558v1M279 558v1M280 548v1M280 551v1M281 558v3M281 569v1M282 557v2M283 557v2M284 558v1M284 571v1M285 548v1M285 552v2M286 550v3M287 549v1M287 552v3M288 556v2M289 558v2M290 555v4M291 558v1M292 555v3M292 571v1M293 553v2M293 556v4M295 569v3M296 552v2M297 572v1M298 549v1M299 558v1M300 558v1M300 571v2M301 557v1M302 559v1M302 563v1M303 560v2M303 563v1M303 566v1M304 553v5M305 558v1M306 558v2M307 556v5M308 557v2M309 555v3M310 554v2M311 550v5M312 555v1M313 553v2M314 553v1M315 559v1M316 555v5M317 553v2M317 556v2M318 556v2M319 554v1M319 556v3M320 557v2M321 560v1M321 562v1M321 566v1M322 554v3M323 549v2M323 552v2M324 553v4M325 552v5M326 549v2M326 570v1M327 544v1M328 548v6M329 546v3M330 559v1M331 558v2M332 559v1M333 543v2M334 548v5M335 551v1M335 555v1M336 556v3M337 556v2M338 548v1M338 550v7M339 557v2M340 553v2M340 556v2M341 559v1M342 557v2M343 557v2M344 558v4M345 570v1M346 555v1M346 557v2M347 556v3M348 554v1M348 558v1M348 562v3M349 547v3M350 556v3M350 560v1M350 566v1M351 547v4M351 553v1M351 566v1M352 561v2M353 557v2M354 554v2M355 547v1M355 550v5M356 549v2M357 543v3M358 558v1M359 555v2M360 558v1M361 549v2M361 553v3M362 556v2M363 560v1M364 556v3M364 571v2M365 558v2M365 571v1M366 560v1M367 558v1M367 570v1M368 551v5M369 553v5M370 553v1M370 555v2M371 549v6M372 559v1M372 572v1M373 560v1M374 553v3M375 554v3M376 552v6M376 569v1M377 546v2M378 557v2M379 557v2M380 544v3M381 550v4M382 544v6M383 556v2M384 553v3M385 556v2M386 547v6M387 544v4M388 552v2M389 548v4M390 550v5M391 560v1M392 543v3M393 549v1M393 552v2M394 558v2M395 548v4M396 553v5M397 553v2M397 558v1M398 552v4M398 560v3M398 570v1M399 555v2M399 558v4M399 563v1M399 565v2M400 559v1M401 559v1M402 549v7M403 547v8M404 551v5M405 550v3M406 558v1M407 557v4M408 546v7M408 554v1M409 545v2M409 550v1M410 550v3M411 555v3M412 559v2M413 558v2M414 552v1M414 554v2M415 544v5M416 553v1M417 557v2M418 559v1M419 556v4M420 558v2M421 558v1M422 558v2M423 559v2M424 546v5M424 552v1M425 543v8M426 555v2M427 570v1M428 556v3M429 559v2M430 554v7M431 566v1M432 560v1M433 556v2M434 557v2M435 557v2M436 555v4M437 553v2M438 556v3M439 554v3M440 552v3M441 552v3M442 557v1M443 557v2M445 559v1M445 571v1M446 560v1M447 555v5M448 558v1M449 557v1M449 559v1M450 555v1M451 555v6M452 557v3M454 558v1M455 545v1M456 541v4M457 551v1M457 553v5M458 558v2M459 556v3M461 553v1M462 557v2M462 566v1M463 549v4M465 558v1M465 571v1M466 557v1M467 558v1M469 558v2M469 570v1M470 551v4M471 549v6M472 554v4M473 552v1M473 556v2M473 570v1M474 554v1M474 556v2M475 556v1M475 558v1M476 558v2M477 556v3M478 548v2M479 552v2M480 541v5M481 558v2M482 552v2M483 560v1M484 557v1M485 552v5M486 529v4M486 534v3M487 548v4M488 558v2M489 558v2M490 560v1M491 557v2M492 554v5M492 570v1M493 559v1M494 555v2M495 545v5M496 556v2M497 543v3M498 556v2M499 554v5M500 558v1M501 557v2M502 557v2M503 553v2M503 556v2M504 559v1M505 555v1M505 557v1M506 545v3M507 545v1M507 547v4M508 551v2M508 555v3M509 555v2M513 560v1M513 570v1M514 552v2M514 555v3M515 552v2M516 551v1M516 553v3M516 557v1M517 556v2M518 558v2M519 554v1M519 556v3M521 557v2M522 554v5M522 570v1M523 556v3M524 548v6M524 555v1M525 557v1M526 556v2M527 556v1M528 543v1M529 559v2M530 554v4M531 549v2M531 554v2M532 558v3M533 553v5M533 570v1M534 556v1M535 551v2M535 554v4M536 548v9M537 548v1M537 550v3M538 544v5M539 545v2M539 552v1M540 543v2M542 547v2M543 551v6M543 570v1M544 551v5M545 555v3M546 551v1M546 555v3M547 558v2M547 570v1M548 554v1M548 557v3M549 554v4M550 555v3M551 552v2M552 556v3M553 550v3M554 554v1M554 557v1M555 556v2M555 572v1M556 559v1M557 557v3M557 572v1M558 557v2M559 553v4M560 570v1M561 558v2M562 559v1M563 548v7M564 556v2M565 558v2M566 553v3M567 556v2M568 559v1M569 560v1M570 557v2M571 544v3M572 550v1M572 553v1M573 550v5M575 557v2M576 557v3M577 559v2M578 552v4M579 547v9M580 559v1M581 557v2M581 571v1M582 549v2M582 552v5M583 555v2M584 557v3M585 554v5M586 556v2M587 556v1M587 566v1M588 554v2M588 572v1M589 553v2M590 553v3M591 553v4M592 555v4M593 554v3M594 552v5M594 558v1M595 553v2M595 556v1M596 547v7M597 558v1M598 542v2M599 548v1M599 552v3M600 550v5M601 555v2M602 554v6M603 558v3M604 558v1M605 559v1M606 549v4M607 557v3M608 560v1M608 572v1M609 560v1M610 556v2M611 551v2M612 553v6M613 552v2M615 557v4M616 558v2M617 561v1M617 570v1M618 558v2M619 553v4M619 571v1M620 546v2M621 559v1M622 553v5M623 548v7M624 549v2M624 552v1M624 554v1M625 555v2M626 556v2M627 550v6M628 549v7M629 551v3M630 552v1M631 544v8M632 557v1M633 547v6M634 550v5M635 547v8M636 557v4M638 556v4M639 557v1M640 559v1M641 558v2M642 558v1M643 560v1M644 559v1M645 552v6M646 559v1M647 561v2M648 543v2M649 558v2M650 560v1M651 553v2M651 570v1M653 558v2M654 543v2M655 558v1M656 553v4M657 554v2M658 547v2M658 551v1M659 558v1M660 558v3M661 560v1M662 545v8M663 559v2M664 558v2M665 542v1M666 552v2M667 554v5M668 551v1M668 556v2M669 547v5M670 552v5M671 556v2M672 547v1M673 556v3M673 572v1M674 555v5M675 558v1M676 557v2M676 570v1M677 555v3M678 547v5M679 550v4M680 548v2M680 551v1M681 559v1M682 551v4M683 550v4M684 551v5M685 555v2M686 559v1M688 559v1M688 570v1M689 558v2M690 554v2M690 569v2M691 556v2M692 554v3M692 558v1M693 552v2M693 557v1M694 556v2M695 550v1M695 554v1M696 557v2M697 559v1M697 572v1M698 551v7M699 553v2M700 551v3M701 555v2M702 559v1M702 562v1M702 566v2M703 556v1M703 571v1M705 557v1M706 559v1M707 554v3M708 555v1M708 557v2M709 547v1M710 556v5M710 565v2M711 553v4M711 566v1M712 556v1M713 556v4M714 558v3M715 556v2M716 556v2M717 556v3M718 544v5M719 550v2M720 555v2M722 554v4M723 556v1M723 558v1M724 552v3M725 556v3M726 551v4M727 549v4M728 548v9M729 557v2M730 552v6M731 553v1M731 557v1M732 547v1M733 545v7M734 542v2M735 548v5M735 555v1M736 553v4M737 558v2M738 559v1M738 570v1M739 558v2M740 556v2M742 557v3M742 566v1M742 569v1M743 557v1M743 559v2M744 557v2M744 560v1M745 555v1M746 555v2M747 557v2M748 557v2M749 558v1M750 554v1M751 558v1M752 558v2M753 558v2M754 557v2M755 558v1M755 572v1M756 547v2M757 556v2M758 558v2M758 569v1M759 548v2M760 553v2M761 553v1M761 556v2M762 550v2M763 554v1M763 556v2M764 544v2M765 544v4M766 545v5M767 549v4M768 552v3M769 548v1M769 554v3M770 559v2M771 559v2M772 558v1M773 551v2M773 557v1M774 560v1M775 559v1M776 557v1M777 559v1M778 555v2M779 560v1M780 553v5M781 546v4M782 555v1M783 542v4M784 548v4" stroke="#40e880"/><path d="M116 558v2M116 570v1M117 553v4M117 559v1M118 560v1M118 571v2M119 558v1M119 560v1M119 572v1M120 554v6M120 572v1M121 546v1M121 551v2M122 558v2M122 561v2M123 558v1M123 572v1M124 556v3M124 569v1M124 571v1M125 560v2M126 558v1M126 569v1M126 571v1M127 556v1M127 558v2M127 572v1M128 571v1M129 558v2M130 558v3M130 572v1M131 555v3M131 571v1M132 560v1M132 568v2M132 572v1M133 554v4M133 569v1M134 550v6M134 560v1M135 542v10M137 557v2M137 569v1M138 560v1M138 570v3M139 558v3M139 568v3M139 572v1M140 559v1M140 570v3M141 560v1M141 571v1M142 551v5M142 569v1M143 548v1M143 552v3M143 570v1M144 552v5M144 559v1M145 558v1M145 572v1M146 560v1M146 568v1M146 570v3M147 561v4M147 572v1M148 560v1M148 568v1M148 571v2M149 557v2M149 560v1M149 570v1M150 558v3M152 560v1M152 568v1M152 570v2M153 558v2M153 572v1M154 560v1M155 560v1M155 568v1M155 572v1M156 560v1M156 572v1M157 561v1M157 566v2M157 569v3M158 552v2M159 555v6M160 560v1M160 567v2M161 554v2M161 557v1M161 559v1M161 568v2M162 559v1M162 572v1M163 560v1M163 569v2M164 561v2M164 569v2M164 572v1M165 560v1M166 556v5M166 572v1M167 559v1M167 569v1M168 560v1M168 570v1M169 560v1M169 568v4M170 560v1M171 556v3M172 559v3M173 559v2M173 571v1M174 551v3M174 555v4M174 572v1M175 560v1M175 566v1M176 559v2M177 560v1M177 570v2M178 560v3M178 566v2M178 572v1M179 559v2M180 553v3M181 558v1M182 559v3M182 567v1M183 554v7M183 566v1M183 571v1M184 559v9M184 570v1M185 560v2M185 565v1M185 569v1M186 551v3M186 555v2M186 558v1M186 569v1M187 558v3M187 570v1M188 559v1M188 569v1M189 559v1M190 559v2M190 568v5M191 558v2M191 572v1M192 553v2M192 558v2M192 562v3M192 567v1M192 569v1M192 572v1M193 558v2M193 561v2M193 565v1M193 567v1M193 569v1M194 560v1M194 570v1M195 558v2M196 548v3M196 571v1M197 549v10M197 569v1M198 556v1M199 560v1M200 559v1M201 556v1M201 558v1M201 560v1M202 560v1M202 563v1M202 566v1M203 560v4M203 565v2M203 568v1M203 571v1M204 563v2M204 572v1M205 560v2M205 563v1M205 567v1M206 557v1M206 559v3M206 563v1M206 571v1M207 551v2M207 556v1M207 558v1M207 567v1M207 570v1M208 555v4M208 570v1M209 560v1M209 569v1M209 571v1M210 561v1M210 567v4M211 560v1M212 571v1M213 569v1M214 558v1M214 567v2M215 557v2M215 560v1M216 554v1M216 558v2M216 569v1M217 553v8M218 557v4M218 572v1M219 556v3M219 560v1M219 570v1M220 552v10M220 563v2M220 571v1M221 551v4M222 560v1M222 568v4M223 559v2M224 560v4M224 565v3M224 570v2M225 559v1M225 570v1M226 557v2M227 571v1M228 547v4M228 552v5M228 566v1M229 543v2M231 558v1M231 570v1M232 558v2M232 570v1M233 549v2M234 553v4M235 555v2M235 558v1M235 570v1M236 556v2M237 554v3M238 545v10M239 569v2M240 554v2M240 557v1M240 570v1M241 558v3M242 557v2M242 570v1M243 556v2M243 570v3M244 545v4M244 552v2M244 556v2M245 550v7M245 572v1M246 558v2M246 561v1M247 549v3M248 560v1M248 570v1M249 547v2M250 557v4M251 558v2M251 569v1M251 571v2M252 556v3M252 569v1M253 559v1M253 569v1M253 571v1M254 556v2M254 559v1M255 558v2M255 568v1M256 559v2M256 572v1M257 572v1M258 560v2M258 564v1M258 567v2M258 570v1M259 554v1M259 558v1M260 560v1M260 569v2M260 572v1M261 553v1M262 559v7M263 559v1M263 561v5M263 571v1M264 560v1M265 548v1M265 552v2M265 559v3M266 561v2M266 564v2M266 569v1M267 556v4M267 571v1M268 557v3M268 569v2M269 560v1M269 568v1M270 559v2M270 568v1M271 558v3M271 569v2M272 560v1M273 544v7M273 552v2M273 571v1M274 561v7M274 570v1M275 553v1M275 557v8M275 566v1M276 560v1M277 557v4M278 559v1M278 569v1M279 559v1M279 572v1M280 552v2M281 570v1M282 559v2M282 571v1M283 559v2M284 559v1M285 554v6M286 553v6M287 555v4M287 570v1M288 558v2M288 568v1M289 560v1M290 559v1M291 559v2M291 571v2M292 558v4M292 568v3M293 560v1M293 570v3M294 560v1M295 559v1M295 568v1M296 554v5M296 570v1M297 561v1M297 566v1M297 568v1M297 571v1M298 550v8M298 559v1M298 569v1M299 559v2M299 570v1M300 559v1M301 558v1M302 560v3M302 564v1M302 566v1M303 562v1M303 564v2M304 558v2M305 559v2M306 560v2M306 566v2M306 569v1M307 562v2M307 568v1M307 570v3M308 559v1M309 558v3M309 572v1M310 556v3M310 571v1M311 555v4M311 560v1M312 554v1M312 556v4M312 569v2M313 555v2M313 558v1M313 560v3M313 570v1M314 554v3M314 566v1M314 568v1M315 560v1M315 568v3M316 560v1M316 568v2M317 555v1M317 558v1M318 558v3M318 568v1M319 559v1M320 559v2M320 562v3M320 566v1M321 561v1M321 563v3M321 569v4M322 557v2M323 551v1M323 554v2M324 557v3M324 572v1M325 557v2M326 551v4M326 572v1M327 545v2M327 554v1M328 554v2M328 572v1M329 549v9M329 560v1M329 569v1M330 560v1M330 570v1M331 560v1M331 569v2M332 560v1M333 545v2M333 551v1M334 553v2M335 556v1M335 558v1M336 559v2M337 558v2M337 569v3M338 557v2M339 559v2M340 555v1M340 558v1M341 560v1M341 569v1M341 572v1M342 559v2M343 559v1M344 562v2M344 568v1M344 570v1M344 572v1M345 560v5M345 566v1M345 568v1M346 569v1M347 559v2M347 572v1M348 559v3M348 565v3M348 570v1M349 550v3M349 561v6M350 559v1M350 561v5M350 567v1M350 569v1M350 571v1M351 554v2M351 559v2M351 562v2M351 565v1M351 567v1M351 569v1M352 563v4M353 559v1M354 556v2M355 548v2M355 555v3M356 551v3M356 570v1M357 546v4M358 559v2M359 557v2M359 560v1M360 559v2M361 551v2M361 556v1M362 558v2M362 569v1M363 572v1M364 559v2M364 570v1M365 560v2M366 566v1M366 568v3M367 559v1M367 567v3M367 571v2M368 556v4M368 569v2M369 558v1M369 571v2M370 557v3M371 555v4M372 560v1M372 563v1M372 566v1M372 568v1M372 570v2M373 561v3M373 565v1M373 568v2M373 572v1M374 556v4M374 562v10M375 557v2M376 558v2M376 566v3M376 570v1M376 572v1M377 548v2M377 553v3M378 559v2M378 570v1M378 572v1M379 559v2M379 570v2M380 547v4M380 563v1M381 554v4M381 566v2M382 550v7M383 558v1M383 566v1M384 556v4M385 558v2M385 569v1M386 553v1M387 548v6M388 554v7M389 552v6M390 555v2M390 565v1M390 570v1M391 561v4M391 566v2M391 569v1M391 571v1M392 546v4M393 554v5M393 560v1M394 560v1M395 552v4M395 557v1M396 558v2M396 563v1M396 567v1M397 559v1M397 565v2M397 569v3M398 556v4M398 567v2M398 572v1M399 557v1M399 567v1M399 571v1M400 560v1M400 570v1M400 572v1M401 560v1M402 556v3M402 560v1M402 570v1M402 572v1M403 555v2M403 571v1M404 556v2M405 553v3M405 561v1M405 566v1M406 559v1M407 561v1M407 570v1M408 553v1M408 555v2M409 547v3M409 551v5M409 557v1M410 553v5M411 558v1M412 561v4M412 566v1M412 572v1M413 560v2M413 569v1M413 571v1M414 556v3M414 571v1M415 549v2M415 559v1M415 572v1M416 551v2M416 554v5M416 572v1M417 559v2M418 560v1M418 569v1M419 560v1M419 572v1M420 560v1M420 570v1M421 559v3M421 566v1M421 568v1M422 560v1M422 569v1M423 561v1M423 567v1M423 572v1M424 551v1M424 553v3M425 551v7M425 572v1M426 557v4M427 560v2M427 566v1M427 569v1M427 571v1M428 559v1M428 570v1M430 561v2M431 560v6M431 567v2M431 570v1M432 572v1M433 558v1M433 570v1M434 559v4M435 559v1M435 566v1M435 570v1M436 559v2M437 555v5M438 559v1M438 570v1M439 557v4M440 555v9M440 565v2M441 555v4M441 565v2M442 558v2M442 571v1M443 559v2M443 572v1M444 560v1M444 567v4M445 572v1M446 561v2M446 572v1M447 560v2M447 572v1M448 559v2M448 562v1M448 569v2M449 558v1M450 556v2M451 570v1M452 560v2M452 569v3M453 561v1M453 570v1M454 559v2M454 570v1M455 546v8M455 555v1M455 557v1M456 545v3M457 558v2M457 569v1M458 560v1M458 566v2M458 571v1M459 559v5M459 565v2M459 568v2M460 560v1M460 571v1M461 554v3M462 559v1M462 562v2M462 567v2M462 572v1M463 553v5M463 565v2M464 561v1M464 569v1M464 571v1M465 559v2M465 572v1M466 558v2M466 569v2M467 559v1M468 570v1M468 572v1M469 560v1M469 569v1M470 555v4M470 568v1M471 555v2M472 558v3M473 558v3M473 569v1M473 571v1M474 558v2M474 571v2M475 559v1M475 572v1M476 560v1M476 562v1M477 559v1M477 571v2M478 550v8M478 559v1M479 554v5M480 546v9M480 572v1M481 560v1M481 569v2M482 554v6M482 569v4M483 561v1M483 569v1M484 558v3M484 570v1M484 572v1M485 557v2M485 571v1M486 537v2M486 541v2M487 552v3M488 560v1M489 560v1M490 570v1M490 572v1M491 559v2M491 568v3M492 569v1M492 572v1M493 560v1M494 557v3M495 550v2M496 558v3M496 572v1M497 546v4M497 571v1M498 558v2M499 570v1M500 559v2M501 559v1M502 559v2M503 555v1M503 558v2M504 560v1M504 569v2M505 558v2M505 570v3M506 548v3M507 551v4M507 572v1M508 558v2M509 557v2M509 572v1M510 561v1M510 570v3M511 559v1M511 569v1M512 560v1M512 569v1M512 571v1M513 569v1M513 571v2M514 554v1M514 558v1M515 554v1M515 560v1M515 572v1M516 556v1M516 558v3M516 572v1M517 558v1M517 570v2M518 560v1M518 567v1M518 572v1M519 559v1M519 572v1M520 560v1M521 559v2M521 569v1M521 571v1M522 559v2M523 559v1M523 572v1M524 554v1M524 556v4M524 569v1M524 572v1M525 558v3M525 567v1M525 569v2M526 558v2M526 569v1M527 557v2M527 571v1M528 544v6M528 553v2M529 561v1M529 566v1M530 558v2M530 569v1M531 556v4M531 572v1M533 558v1M533 571v2M534 557v4M535 553v1M535 558v1M535 570v1M536 557v1M536 570v1M537 553v1M537 555v3M537 571v1M538 549v2M539 553v3M539 557v1M539 569v1M540 545v6M541 558v1M542 549v4M542 571v1M543 557v3M543 568v2M544 556v5M544 570v1M545 558v3M545 569v1M545 572v1M546 558v2M547 572v1M549 558v2M550 558v1M551 554v4M552 571v1M553 553v6M553 570v3M554 558v1M555 558v3M555 570v2M556 560v1M556 572v1M557 560v2M557 570v1M558 559v1M559 557v2M559 571v1M560 559v1M560 568v1M560 571v1M561 560v1M561 571v1M562 560v1M562 570v3M563 555v1M564 558v3M564 572v1M565 560v1M566 556v3M566 568v1M566 571v2M567 558v1M568 560v1M568 570v1M570 559v2M570 572v1M571 547v8M571 572v1M572 551v2M572 554v4M573 555v5M573 571v1M574 559v2M574 569v2M575 570v1M576 560v1M576 570v1M577 561v4M578 556v3M579 556v2M579 572v1M580 560v2M581 559v2M581 572v1M582 551v1M582 557v2M582 560v1M582 571v1M583 557v3M584 560v1M585 569v1M586 558v2M586 562v6M587 557v3M587 562v4M587 567v3M588 556v1M588 570v2M589 555v2M589 558v3M590 556v4M590 571v1M591 557v2M591 560v1M591 571v2M592 559v2M592 571v1M593 557v4M593 568v1M594 559v1M595 555v1M595 557v4M596 554v3M596 572v1M597 559v1M598 544v3M598 572v1M599 555v2M600 555v3M601 557v1M602 560v1M603 569v1M604 559v1M604 567v1M604 570v1M605 560v2M605 567v4M606 553v6M606 568v2M606 572v1M607 560v1M607 568v1M608 561v1M608 568v2M608 571v1M609 561v1M609 567v1M609 570v1M610 558v1M610 568v1M610 570v1M611 553v4M612 559v2M612 571v1M613 554v3M614 560v1M614 571v1M616 560v1M616 567v1M616 569v2M617 567v1M617 572v1M618 570v2M619 557v2M619 569v1M619 572v1M620 548v5M620 554v1M621 560v1M621 572v1M622 558v2M622 570v2M623 555v1M623 570v2M624 551v1M624 553v1M624 555v1M624 570v1M625 557v4M626 558v2M626 570v1M626 572v1M627 556v4M627 571v1M628 556v3M629 554v4M630 553v5M630 571v1M631 552v3M632 558v2M633 553v2M634 555v2M634 572v1M635 555v3M636 571v2M637 559v2M638 560v2M638 571v1M639 558v3M639 570v1M640 560v2M641 560v1M641 571v2M642 559v2M642 569v1M644 560v1M644 569v1M645 558v1M646 560v1M646 569v1M647 563v2M647 568v4M648 545v2M650 561v1M650 567v2M650 570v1M650 572v1M651 555v3M651 569v1M652 559v2M653 560v1M653 569v3M654 545v2M654 548v5M655 559v1M655 571v2M656 557v3M656 569v3M657 556v4M657 571v1M658 549v2M658 552v4M658 558v1M659 559v1M659 572v1M661 561v3M661 568v1M661 570v3M662 553v3M663 561v1M663 572v1M664 560v2M664 570v1M665 543v2M665 571v1M666 554v2M666 560v1M666 571v1M667 559v2M667 571v1M668 558v3M669 552v2M669 571v1M670 557v3M670 561v1M670 563v1M670 571v1M671 558v5M671 564v1M671 566v1M671 569v1M672 548v5M673 559v2M674 560v1M675 559v2M676 559v2M676 571v1M677 558v1M678 552v2M679 554v4M679 571v1M680 550v1M680 552v3M681 560v1M681 570v1M682 555v2M683 554v4M684 556v3M685 557v2M686 560v2M686 571v1M687 560v1M687 568v2M687 572v1M688 560v1M688 568v1M688 571v2M689 560v2M689 571v1M690 556v3M690 568v1M691 558v1M692 557v1M692 559v2M692 571v1M693 554v3M693 558v3M693 570v1M694 558v3M694 569v1M695 551v3M695 555v3M696 559v2M697 560v1M697 570v1M698 558v2M698 571v1M699 555v2M699 572v1M700 554v5M700 571v2M701 557v4M701 572v1M702 561v1M702 563v3M703 557v8M703 566v2M704 560v2M705 558v2M705 568v1M706 560v1M707 557v2M708 559v2M708 568v3M709 548v6M709 555v3M710 561v3M711 557v3M711 562v4M712 557v4M712 562v1M713 560v4M713 569v2M714 569v1M715 558v2M715 572v1M716 558v3M716 570v1M717 559v2M717 571v1M718 549v1M719 552v3M719 568v2M720 557v1M720 559v1M720 570v1M721 559v1M722 558v3M722 571v2M723 557v1M723 559v2M724 555v3M725 559v1M726 555v3M727 553v5M728 557v2M728 570v1M729 559v2M729 568v1M729 571v1M730 558v1M731 554v3M731 558v2M731 569v1M731 571v1M732 548v7M733 552v3M733 571v1M734 544v7M734 570v1M735 556v1M735 558v1M735 563v1M736 557v2M737 560v1M738 560v1M738 567v1M739 560v1M740 558v2M740 567v1M740 569v1M741 561v1M742 560v6M742 567v1M742 570v2M743 558v1M743 561v3M743 572v1M744 559v1M745 556v1M745 572v1M746 557v3M746 566v1M747 559v3M747 566v1M748 559v2M748 568v1M749 559v1M750 555v3M750 569v2M751 559v1M751 571v1M752 571v1M753 560v1M753 570v1M753 572v1M754 559v2M754 570v1M754 572v1M755 559v2M755 570v1M756 549v6M757 558v2M757 565v2M758 560v1M758 570v1M759 550v6M759 557v2M759 570v1M760 555v3M761 554v2M761 558v1M762 552v2M762 558v2M762 569v1M763 558v2M764 546v8M765 548v8M766 550v4M766 571v1M767 553v5M768 555v6M769 557v3M770 566v1M771 561v1M772 559v2M772 570v1M773 553v1M773 555v2M773 558v1M775 560v1M775 570v1M776 558v2M777 560v1M777 570v1M778 557v3M778 569v1M778 572v1M779 570v1M780 558v2M781 550v1M781 552v3M782 556v6M782 572v1M783 546v3M784 552v6M784 569v1" stroke="#60f060"/><path d="M116 560v1M116 571v2M117 560v1M117 569v2M118 561v1M118 566v1M118 568v1M118 570v1M119 559v1M119 567v1M119 569v3M120 560v2M120 566v1M120 570v1M121 547v4M121 553v6M121 568v2M122 563v3M122 567v1M123 559v1M123 563v1M123 565v3M123 570v2M124 559v2M124 570v1M124 572v1M125 562v1M125 568v1M125 571v2M126 559v2M126 562v1M126 570v1M126 572v1M127 557v1M127 560v2M127 568v4M128 559v2M128 569v1M128 572v1M129 560v1M129 568v5M130 561v1M131 558v3M131 568v1M131 572v1M132 561v3M132 566v2M132 570v2M133 558v2M133 570v2M134 556v4M134 561v1M134 567v1M134 570v2M135 552v2M135 558v1M135 569v2M136 561v1M136 568v1M136 570v2M137 559v3M137 571v1M138 561v1M138 567v3M139 571v1M140 560v2M140 568v2M141 561v2M141 568v3M141 572v1M142 556v2M142 570v2M143 555v5M143 569v1M143 571v2M144 557v2M144 560v4M144 566v4M144 572v1M145 559v2M145 566v6M146 561v1M146 565v3M146 569v1M147 565v7M148 561v1M148 570v1M149 559v1M149 561v1M149 568v2M149 572v1M150 561v1M150 570v1M151 560v2M151 568v2M151 571v1M152 561v1M152 567v1M152 572v1M153 560v1M153 570v2M154 561v1M155 561v1M155 567v1M155 569v1M156 561v1M156 566v4M157 562v1M157 564v2M157 568v1M157 572v1M158 554v7M158 569v1M159 568v2M159 571v2M160 561v2M160 564v1M160 566v1M160 569v2M160 572v1M161 558v1M161 560v7M161 571v2M162 560v2M162 568v1M163 561v1M163 563v1M163 571v2M164 563v3M164 567v2M164 571v1M165 561v1M165 563v1M165 566v1M165 568v2M165 571v2M166 561v4M166 566v1M166 568v2M166 571v1M167 560v2M167 566v1M167 570v1M168 567v3M168 571v2M169 561v1M169 563v1M170 561v1M170 570v2M171 559v2M171 569v2M172 562v2M172 568v4M173 561v1M173 567v1M173 569v2M174 559v1M174 561v1M174 570v1M175 561v1M175 570v1M175 572v1M176 561v1M176 569v2M177 561v1M177 567v2M177 572v1M178 563v3M178 570v2M179 561v2M179 568v4M180 556v3M180 568v5M181 559v2M181 570v1M182 562v5M182 568v4M183 561v2M183 564v1M183 567v4M183 572v1M184 568v1M184 571v1M185 567v2M186 554v1M186 559v2M186 570v1M187 561v2M187 569v1M187 571v1M188 560v4M188 567v2M188 571v1M189 560v2M189 563v4M189 569v1M189 572v1M190 561v7M191 560v1M191 566v6M192 560v2M192 568v1M192 570v2M193 560v1M193 564v1M193 570v3M194 561v1M194 567v3M194 571v2M195 560v2M195 568v4M196 551v5M196 568v1M196 570v1M196 572v1M197 559v3M197 563v1M197 567v1M197 570v1M197 572v1M198 557v4M198 563v1M198 565v6M199 561v5M199 567v6M200 560v1M200 564v1M200 568v1M200 572v1M201 557v1M201 559v1M201 561v1M201 569v4M202 561v2M202 564v2M202 567v1M202 570v3M203 564v1M203 567v1M203 569v2M204 565v5M204 571v1M205 562v1M205 564v3M205 568v1M205 571v2M206 562v1M206 568v2M207 559v1M207 569v1M208 559v2M208 568v2M208 571v2M209 561v1M209 570v1M209 572v1M210 562v1M210 564v3M210 571v2M211 561v1M211 568v1M211 570v1M211 572v1M212 560v1M213 561v1M213 568v1M213 570v2M214 559v3M214 563v2M214 566v1M214 570v1M215 561v2M215 567v1M215 570v1M216 560v1M216 562v3M216 567v1M216 570v2M217 561v2M217 566v1M217 569v4M218 570v2M219 559v1M219 569v1M220 562v1M220 566v1M220 572v1M221 555v11M221 567v1M221 571v1M222 572v1M223 569v3M224 564v1M224 568v2M225 560v3M225 564v4M225 571v1M226 559v2M226 568v4M227 561v1M227 569v2M228 551v1M228 557v3M228 561v2M228 565v1M228 567v1M228 571v2M229 545v10M229 563v1M230 561v1M230 568v1M230 571v1M231 559v1M231 572v1M232 560v1M232 569v1M232 571v1M233 551v3M233 555v1M233 557v1M233 569v1M234 557v3M234 571v1M235 557v1M235 559v1M235 569v1M235 571v2M236 558v1M236 571v1M237 557v2M238 555v2M238 559v2M238 569v1M238 572v1M239 561v2M239 565v3M239 571v2M240 556v1M240 558v3M240 569v1M240 571v2M241 561v1M241 568v1M241 571v2M242 559v1M242 568v2M242 571v2M243 558v2M243 569v1M244 554v2M244 558v2M244 570v1M244 572v1M245 557v5M245 563v1M245 568v1M245 570v2M246 560v1M246 562v2M246 566v1M246 571v2M247 552v12M247 566v2M248 568v2M248 572v1M249 549v7M249 569v2M250 561v1M250 567v1M250 569v2M251 560v1M251 570v1M252 559v2M253 560v1M253 570v1M253 572v1M254 558v1M254 560v3M254 571v2M255 560v2M255 570v3M256 561v3M256 569v3M257 560v1M257 566v3M257 571v1M258 562v2M258 565v1M259 559v2M259 567v1M259 569v4M260 561v1M260 566v1M260 568v1M260 571v1M261 554v4M261 559v2M261 569v1M261 571v2M262 567v1M262 569v3M263 560v1M263 566v3M264 561v3M264 565v1M264 567v1M264 570v3M265 554v5M265 562v1M265 568v2M266 566v3M266 570v1M266 572v1M267 560v5M267 566v3M267 570v1M267 572v1M268 560v2M269 567v1M269 569v4M270 561v3M270 565v3M270 569v4M271 561v1M271 566v2M271 571v2M272 561v4M272 566v1M272 568v1M272 570v3M273 554v6M273 570v1M273 572v1M274 568v1M274 571v2M275 554v3M275 565v1M275 567v4M276 561v1M276 567v2M276 570v1M276 572v1M277 561v1M277 567v1M278 560v1M278 571v1M279 560v1M279 568v3M280 554v4M280 568v1M280 570v1M281 561v1M281 568v1M281 572v1M282 569v2M283 561v1M284 560v10M284 572v1M285 560v1M286 559v2M286 562v1M286 569v1M286 571v1M287 559v2M287 572v1M288 560v1M288 570v2M289 561v1M289 569v4M290 560v3M290 568v1M290 570v1M290 572v1M291 561v5M291 568v1M291 570v1M292 562v6M293 561v4M293 566v1M293 568v2M294 561v1M294 566v6M295 560v1M295 564v1M296 559v3M296 568v1M296 572v1M297 562v4M297 567v1M297 569v2M298 558v1M298 560v2M298 568v1M298 570v3M299 569v1M299 571v1M300 560v1M300 569v2M301 559v2M301 569v2M301 572v1M302 565v1M302 567v3M302 571v2M303 567v2M303 570v1M304 560v1M304 569v1M304 571v2M305 561v1M305 570v2M306 562v4M306 568v1M306 570v2M307 561v1M307 564v4M307 569v1M308 560v2M308 571v1M309 561v1M309 570v2M310 559v2M310 568v3M310 572v1M311 559v1M311 561v1M311 567v1M311 570v1M312 560v2M312 566v1M312 571v2M313 557v1M313 559v1M313 563v2M313 571v2M314 557v5M314 564v2M314 567v1M314 569v1M314 571v1M315 561v7M315 571v1M316 561v1M316 567v1M316 570v2M317 559v2M317 568v4M318 561v1M318 566v2M318 569v4M319 560v2M320 561v1M320 565v1M320 567v5M321 567v2M322 559v2M322 568v2M322 571v1M323 556v5M323 568v1M324 560v1M324 571v1M325 559v2M325 569v2M325 572v1M326 555v5M326 571v1M327 547v7M327 555v6M327 571v1M328 556v4M328 571v1M329 558v2M329 568v1M329 570v3M330 561v2M330 567v1M330 569v1M330 571v1M331 568v1M331 571v2M332 561v3M332 569v1M332 572v1M333 547v4M333 552v2M333 569v1M333 571v1M334 555v5M334 569v1M335 557v1M335 559v2M335 568v2M335 572v1M336 561v1M336 568v3M336 572v1M337 560v2M337 568v1M338 559v1M338 566v3M339 561v9M339 571v1M340 559v1M340 569v1M340 571v1M341 570v2M342 561v1M342 568v1M342 570v2M343 560v2M343 567v5M344 564v3M344 569v1M344 571v1M345 565v1M345 567v1M345 569v1M345 571v2M346 559v2M346 562v1M346 567v2M346 570v1M347 561v1M347 566v2M347 571v1M348 568v2M348 571v1M349 553v8M349 567v1M349 570v3M350 568v1M350 570v1M350 572v1M351 556v3M351 561v1M351 564v1M351 568v1M351 570v3M352 567v4M352 572v1M353 560v5M353 567v1M353 569v2M354 558v2M354 569v4M355 558v2M355 569v1M355 571v2M356 554v7M356 567v1M356 569v1M356 571v1M357 550v4M357 555v1M357 559v2M357 570v1M358 569v3M359 559v1M359 570v2M360 561v1M360 567v5M361 557v2M361 571v1M362 560v1M362 570v3M363 561v1M363 571v1M364 561v3M364 567v1M364 569v1M365 562v9M365 572v1M366 561v2M366 564v2M366 567v1M366 571v2M367 561v5M368 560v3M368 564v1M368 566v3M368 571v1M369 559v1M369 565v1M369 569v2M370 560v2M370 568v1M370 571v2M371 559v3M371 568v1M371 570v1M372 561v2M372 564v2M372 569v1M373 564v1M373 566v1M373 570v1M374 560v2M375 559v3M375 565v3M375 569v4M376 560v2M376 571v1M377 550v3M377 556v2M377 571v1M378 561v3M378 568v2M378 571v1M379 561v1M379 568v2M379 572v1M380 551v5M380 558v5M380 564v3M380 568v2M381 558v8M381 568v1M381 570v3M382 557v2M382 571v1M383 559v3M383 567v1M383 570v1M383 572v1M384 560v1M384 570v2M385 560v2M385 571v1M386 554v6M386 569v1M386 572v1M387 554v5M388 561v3M388 571v2M389 558v3M389 570v1M390 557v8M390 566v3M391 565v1M391 568v1M391 570v1M391 572v1M392 550v6M392 560v1M392 569v1M393 559v1M393 569v1M394 561v2M394 572v1M395 556v1M395 558v2M395 569v2M396 560v3M396 564v3M396 568v3M396 572v1M397 560v5M397 567v2M399 568v1M399 570v1M399 572v1M400 561v1M400 568v2M400 571v1M401 568v1M401 570v1M402 559v1M402 571v1M403 557v4M403 568v1M403 570v1M404 558v3M404 563v2M404 568v1M404 570v3M405 556v5M405 562v4M405 567v2M405 572v1M406 560v3M406 564v1M406 566v2M406 569v2M406 572v1M407 562v3M407 567v3M407 571v1M408 557v3M408 568v1M408 570v1M408 572v1M409 556v1M409 558v2M409 569v3M410 558v2M410 570v1M411 559v1M411 572v1M412 565v1M412 567v2M412 570v1M413 562v3M413 567v2M413 572v1M414 559v2M414 569v2M414 572v1M415 551v8M415 560v1M416 559v2M416 570v1M417 561v1M417 568v3M418 561v1M418 567v2M418 570v3M419 561v1M419 566v3M419 570v2M420 561v3M420 566v3M420 571v2M421 562v2M421 565v1M421 567v1M421 569v4M422 561v4M422 567v2M422 570v3M423 562v5M423 568v4M424 556v2M424 568v5M425 558v2M425 570v2M426 561v2M426 567v1M426 569v1M427 562v2M427 565v1M427 567v2M427 572v1M428 560v2M428 567v1M428 569v1M429 561v2M429 566v1M429 568v1M429 570v2M430 563v8M431 569v1M431 572v1M432 561v1M432 569v3M433 559v2M433 567v3M433 571v1M434 563v1M434 566v2M434 569v1M434 571v1M435 560v4M435 567v1M435 571v1M436 561v1M436 569v1M437 560v1M437 568v5M438 560v2M438 567v2M438 571v2M439 561v1M439 568v1M439 570v1M440 564v1M440 567v2M440 571v2M441 559v6M441 567v1M441 569v1M441 571v1M442 560v1M442 568v1M443 561v1M443 569v3M444 561v2M444 571v2M445 560v1M445 566v1M445 568v3M446 563v6M446 570v1M447 562v1M447 571v1M448 561v1M448 564v1M448 567v1M448 571v2M449 560v2M449 563v1M449 566v1M449 568v2M449 572v1M450 558v2M450 568v1M450 570v3M451 561v1M451 571v2M452 562v3M452 567v2M452 572v1M453 562v1M453 567v3M453 571v2M454 561v1M454 567v3M455 554v1M455 556v1M455 558v1M456 548v8M456 570v1M456 572v1M457 560v1M457 567v2M457 570v1M458 561v5M458 569v2M458 572v1M459 564v1M459 567v1M459 570v1M460 561v1M460 567v2M460 570v1M461 557v4M461 569v1M462 560v2M462 564v2M462 570v2M463 558v7M463 567v1M464 562v1M464 568v1M464 570v1M465 569v2M466 560v1M466 572v1M467 560v1M467 569v1M467 572v1M468 561v1M468 565v2M468 568v1M468 571v1M469 561v1M469 567v2M469 571v1M470 559v3M470 569v1M471 557v5M471 569v2M471 572v1M472 569v1M473 568v1M473 572v1M474 560v1M474 570v1M475 560v1M475 569v2M476 561v1M476 563v1M476 566v6M477 560v2M477 566v2M477 569v2M478 558v1M478 560v1M478 570v3M479 559v3M479 570v1M480 555v3M480 570v2M481 568v1M482 560v1M483 568v1M483 570v2M484 571v1M485 559v1M485 568v3M486 539v2M486 543v3M487 555v2M487 558v3M487 566v1M487 568v1M487 570v2M488 568v3M488 572v1M489 561v2M489 568v1M489 570v3M490 561v1M490 569v1M491 561v1M492 559v1M492 571v1M493 561v1M493 569v2M494 560v2M494 565v5M494 571v2M495 552v9M495 562v1M495 567v1M495 569v1M495 571v1M496 566v1M496 571v1M497 550v9M498 560v1M498 569v4M499 559v1M499 571v1M500 569v2M501 560v1M501 569v1M502 572v1M503 560v2M503 567v2M503 572v1M504 561v1M504 568v1M504 571v2M505 560v1M505 568v2M506 551v8M507 555v6M507 571v1M508 560v1M508 562v1M508 566v1M508 568v4M509 559v5M509 569v1M509 571v1M510 562v1M510 566v1M510 568v2M511 560v2M511 570v1M512 561v1M512 568v1M512 570v1M512 572v1M513 561v2M513 567v2M514 559v1M514 569v1M514 572v1M515 555v5M515 570v2M516 561v1M516 569v2M517 559v2M517 562v1M517 568v2M517 572v1M518 561v1M518 563v3M518 570v1M519 560v2M519 567v3M520 561v1M520 568v2M520 572v1M521 568v1M521 570v1M521 572v1M522 561v1M522 568v2M522 571v2M523 560v3M523 566v3M523 570v1M524 560v2M524 567v2M524 570v2M525 561v4M525 568v1M526 560v1M526 568v1M526 571v1M527 559v1M527 568v3M528 550v3M528 555v1M528 571v1M529 562v1M529 564v2M529 567v6M530 560v1M530 567v1M530 570v1M531 560v2M531 568v1M532 561v1M533 559v2M533 568v2M534 568v3M534 572v1M535 559v2M535 571v2M536 558v2M536 572v1M537 554v1M537 558v2M537 569v1M537 572v1M538 551v10M538 568v1M538 570v3M539 556v1M539 558v1M539 562v1M539 567v2M539 570v3M540 551v6M540 569v1M540 571v2M541 559v2M541 568v1M541 570v1M541 572v1M542 553v7M542 569v2M542 572v1M543 560v1M543 571v2M544 561v1M544 569v1M544 571v2M545 561v1M545 568v1M545 570v2M546 560v1M546 568v1M546 570v2M547 560v2M547 566v4M548 560v1M548 570v1M548 572v1M549 560v1M549 568v2M550 559v2M550 568v4M551 558v2M551 569v1M552 559v2M552 569v1M552 572v1M553 559v1M553 568v2M554 559v1M554 570v3M555 569v1M556 561v2M556 564v2M556 568v1M556 570v2M557 562v1M557 566v3M557 571v1M558 560v1M558 568v4M559 559v2M559 568v1M559 570v1M559 572v1M560 560v1M560 569v1M560 572v1M561 568v1M561 570v1M562 561v1M562 568v2M563 556v2M564 565v1M564 567v2M564 570v2M565 561v3M565 566v2M565 570v1M566 559v2M566 563v1M566 567v1M566 569v2M567 559v1M567 571v2M568 561v1M568 568v2M568 571v1M569 561v2M569 565v6M569 572v1M570 561v1M570 568v4M571 555v1M571 571v1M572 558v1M572 569v3M573 560v1M573 569v1M573 572v1M574 561v1M574 567v2M574 571v1M575 559v2M575 569v1M576 561v3M576 567v1M576 569v1M576 571v2M577 565v2M577 568v3M577 572v1M578 559v2M578 571v2M579 558v3M579 570v2M580 567v1M581 566v1M581 569v2M582 559v1M582 570v1M583 560v1M583 569v2M584 561v1M584 569v4M585 559v2M585 568v1M585 570v3M586 560v2M586 568v3M586 572v1M587 560v2M587 570v1M588 557v3M588 568v2M589 557v1M589 561v1M589 570v1M590 560v2M590 566v2M590 569v2M590 572v1M591 559v1M591 561v1M591 568v3M592 561v2M592 569v2M593 561v1M593 566v2M593 569v4M594 560v2M594 571v2M595 561v1M595 570v1M595 572v1M596 557v2M596 569v1M596 571v1M597 560v1M597 572v1M598 547v5M598 553v2M598 569v1M598 571v1M599 557v2M599 569v1M599 572v1M600 558v2M600 568v1M600 570v1M601 558v1M601 568v2M601 572v1M602 561v1M602 568v1M602 570v3M603 561v2M603 570v3M604 560v7M604 568v2M604 571v1M605 562v3M605 571v1M606 559v2M606 570v2M607 561v2M607 569v1M607 572v1M608 562v1M608 566v2M608 570v1M609 562v5M609 568v2M609 571v2M610 559v2M610 566v2M610 569v1M610 571v1M611 557v5M612 569v2M612 572v1M613 557v4M614 569v2M614 572v1M615 568v1M615 570v1M616 561v1M616 563v1M616 566v1M616 568v1M616 571v1M617 562v1M617 566v1M617 568v2M617 571v1M618 560v1M618 568v2M618 572v1M619 559v1M619 568v1M619 570v1M620 553v1M620 555v6M620 572v1M621 561v2M621 569v1M622 560v3M622 572v1M623 556v1M623 572v1M624 556v1M624 558v3M624 569v1M624 571v1M625 569v3M626 560v2M626 567v1M626 569v1M627 560v2M627 569v2M627 572v1M628 559v2M629 558v2M629 572v1M630 558v3M630 570v1M631 555v6M631 569v3M632 560v1M632 562v1M632 571v1M633 555v6M633 566v1M633 568v1M633 570v2M634 557v3M634 571v1M635 558v2M635 569v4M636 561v2M636 568v3M637 561v1M637 569v1M637 571v2M638 566v1M638 569v2M638 572v1M639 561v1M639 564v1M639 572v1M640 562v1M640 571v2M641 561v1M641 568v1M642 561v1M642 568v1M642 570v1M643 561v1M643 569v2M644 561v1M644 571v1M645 559v2M645 569v2M646 561v4M646 566v3M646 570v1M646 572v1M647 566v2M647 572v1M648 547v7M648 555v4M649 560v1M649 569v1M649 571v2M650 565v2M650 569v1M650 571v1M651 558v4M651 563v1M651 568v1M651 571v2M652 571v2M653 561v1M654 547v1M654 553v3M654 570v1M654 572v1M655 560v1M655 569v2M656 560v1M656 568v1M656 572v1M657 560v2M657 567v2M657 570v1M658 556v2M658 559v2M658 570v1M658 572v1M659 560v1M659 568v4M660 561v3M660 568v1M660 570v1M661 564v1M661 566v2M661 569v1M662 556v3M662 568v2M663 569v2M664 562v2M664 569v1M664 571v2M665 545v12M665 569v2M665 572v1M666 556v4M666 561v4M666 572v1M667 561v4M667 566v2M667 569v2M668 561v1M668 568v1M668 570v3M669 554v7M669 567v4M670 560v1M670 562v1M670 565v3M670 572v1M671 563v1M671 565v1M671 567v1M671 571v2M672 553v3M672 557v2M672 560v1M672 569v1M672 571v1M673 561v1M673 567v2M673 571v1M674 561v1M674 571v1M675 561v1M675 570v1M676 572v1M677 559v2M677 570v2M678 554v3M678 558v4M678 571v2M679 558v5M679 570v1M679 572v1M680 555v2M680 572v1M681 561v1M681 571v1M682 557v4M682 569v1M682 572v1M683 558v3M683 570v1M684 559v2M684 569v1M684 572v1M685 559v2M685 569v1M686 562v2M686 566v1M686 569v2M687 561v2M687 566v2M687 570v2M688 561v2M688 567v1M688 569v1M689 562v1M689 568v1M690 559v2M690 571v2M691 559v1M691 568v3M691 572v1M692 561v1M692 568v3M692 572v1M694 568v1M694 570v2M695 558v2M695 570v3M696 562v2M696 571v1M697 561v1M697 567v3M698 560v1M698 569v1M698 572v1M699 557v2M699 569v2M700 559v2M700 570v1M701 568v2M702 560v1M702 568v4M703 565v1M703 568v1M703 570v1M703 572v1M704 567v4M705 560v1M705 569v3M706 561v1M706 567v2M706 570v3M707 559v1M707 568v1M707 570v2M708 561v5M708 571v1M709 554v1M709 558v2M709 564v1M709 570v2M710 564v1M710 567v2M710 570v3M711 560v2M711 567v1M711 572v1M712 561v1M712 563v1M712 566v3M713 564v2M713 568v1M713 571v1M714 561v1M714 570v1M715 560v1M715 568v4M716 561v1M716 569v1M716 572v1M717 561v1M717 570v1M718 550v11M719 555v6M719 570v2M720 558v1M720 560v1M720 568v1M720 571v2M721 560v1M721 569v1M721 571v2M722 561v1M722 569v2M723 561v1M723 568v5M724 558v3M724 571v1M725 560v1M725 570v1M725 572v1M726 558v2M726 569v2M727 558v2M727 570v1M727 572v1M728 559v1M728 569v1M728 572v1M729 570v1M729 572v1M730 559v1M730 572v1M731 560v1M731 568v1M731 570v1M732 555v2M732 558v3M733 555v7M734 551v2M734 556v3M734 560v1M734 564v1M734 567v3M734 571v1M735 557v1M735 559v1M735 561v2M735 566v1M735 571v1M736 559v2M736 569v4M737 570v2M738 561v2M738 566v1M738 568v2M738 571v2M739 561v2M739 566v1M739 568v1M739 570v3M740 560v2M740 568v1M740 571v1M741 562v3M741 567v4M741 572v1M742 568v1M742 572v1M743 564v8M744 561v1M744 570v3M745 557v4M745 570v2M746 560v2M746 563v1M746 569v2M746 572v1M747 562v4M747 567v1M747 571v2M748 569v2M748 572v1M749 560v1M749 571v1M750 558v3M750 572v1M751 560v1M751 572v1M752 560v1M752 568v2M753 568v1M754 561v1M754 568v1M755 561v1M755 571v1M756 555v4M756 563v2M757 560v5M757 567v1M757 569v3M758 571v1M759 556v1M759 559v2M759 569v1M760 558v3M760 568v5M761 559v1M761 570v1M761 572v1M762 554v4M762 560v1M762 568v1M762 570v2M763 560v1M763 567v5M764 554v2M764 569v1M765 556v5M765 569v1M765 571v2M766 554v6M766 572v1M767 558v2M768 569v1M768 571v2M769 560v1M769 570v3M770 561v2M770 567v4M770 572v1M771 562v2M771 565v2M771 568v5M772 561v1M772 567v1M772 571v2M773 554v1M773 559v2M773 570v2M774 561v1M774 566v2M774 569v4M775 569v1M775 571v2M776 560v1M776 570v2M777 561v1M777 569v1M777 571v1M778 560v1M778 570v1M779 561v1M779 567v3M780 560v1M780 570v2M781 551v1M781 555v2M781 568v3M782 562v2M782 568v1M782 570v2M783 549v4M783 557v4M783 569v2M783 572v1M784 558v3M784 570v1" stroke="#d8ff00"/><path d="M116 561v2M116 567v3M117 561v1M117 568v1M117 571v1M118 562v2M118 565v1M118 569v1M119 561v3M119 565v2M119 568v1M120 567v3M120 571v1M121 559v3M121 566v2M121 570v1M122 566v1M122 568v5M123 560v3M123 564v1M123 568v2M124 561v1M124 567v2M125 563v1M125 566v2M125 569v2M126 561v1M126 563v3M126 567v2M127 562v3M127 567v1M128 561v2M128 570v1M129 561v1M130 568v1M130 570v2M131 561v2M131 567v1M131 569v2M132 565v1M133 560v3M133 566v3M133 572v1M134 562v2M134 565v2M134 568v2M134 572v1M135 554v4M135 559v4M135 568v1M135 571v2M136 562v2M136 565v3M136 569v1M137 562v2M137 568v1M137 570v1M138 562v1M139 561v1M139 567v1M140 562v2M140 567v1M141 563v1M141 566v2M142 558v2M142 568v1M142 572v1M143 560v2M143 568v1M144 564v2M144 570v1M145 561v5M146 562v1M148 562v2M148 565v1M148 567v1M148 569v1M149 562v1M149 566v2M149 571v1M150 562v1M150 567v3M150 571v2M151 562v3M151 566v1M151 572v1M152 562v1M152 566v1M153 561v3M153 567v3M154 562v1M154 568v5M155 562v1M155 566v1M156 562v4M156 570v2M157 563v1M158 561v2M158 568v1M158 570v3M159 561v1M160 565v1M160 571v1M161 567v1M161 570v1M162 562v6M162 569v1M162 571v1M163 562v1M163 566v3M164 566v1M165 562v1M165 564v2M165 567v1M165 570v1M166 565v1M166 567v1M166 570v1M167 562v2M167 565v1M167 567v2M167 571v1M168 561v2M168 565v2M169 562v1M169 564v4M169 572v1M170 567v1M170 572v1M171 561v1M171 567v2M171 571v2M172 564v4M173 562v1M173 564v3M173 568v1M174 560v1M174 562v4M174 567v3M174 571v1M175 562v1M175 564v2M175 567v3M175 571v1M176 568v1M176 571v2M177 562v3M177 566v1M178 568v2M179 563v5M179 572v1M180 559v3M180 567v1M181 561v1M181 569v1M181 571v1M182 572v1M183 563v1M183 565v1M184 569v1M184 572v1M185 570v1M186 561v1M186 567v2M186 571v2M187 563v1M187 568v1M187 572v1M188 564v2M188 572v1M189 562v1M189 567v2M189 570v1M191 561v2M193 568v1M194 564v1M195 562v2M195 567v1M195 572v1M196 556v6M196 567v1M196 569v1M197 562v1M197 564v3M197 568v1M197 571v1M198 561v1M198 564v1M198 571v2M199 566v1M200 561v3M200 565v3M200 569v3M201 562v4M201 567v1M202 568v2M203 572v1M204 570v1M205 569v2M206 564v2M206 567v1M206 570v1M206 572v1M207 560v4M207 565v2M207 568v1M207 572v1M208 561v1M209 562v2M209 567v2M210 563v1M211 562v1M211 564v4M211 569v1M211 571v1M212 561v1M212 568v3M212 572v1M213 572v1M214 562v1M214 565v1M214 569v1M214 571v2M215 563v2M215 568v2M215 571v2M216 561v1M216 565v2M216 568v1M217 563v3M217 567v2M218 568v2M219 561v1M219 568v1M219 572v1M220 565v1M220 567v4M221 566v1M221 568v3M222 561v2M222 566v2M223 561v1M223 568v1M223 572v1M224 572v1M225 563v1M225 568v2M225 572v1M226 561v1M226 572v1M227 562v2M227 566v1M227 568v1M228 560v1M228 564v1M228 568v3M229 555v8M229 564v2M229 567v2M229 570v1M230 569v2M230 572v1M231 560v1M231 567v3M231 571v1M232 568v1M233 554v1M233 556v1M233 558v3M233 568v1M233 570v3M234 560v2M234 568v3M234 572v1M235 560v1M235 568v1M236 559v2M236 568v3M237 559v2M237 568v2M237 571v1M238 557v2M238 561v2M238 568v1M238 570v1M239 563v2M239 568v1M240 561v1M240 568v1M241 562v3M241 567v1M241 569v2M242 560v1M243 560v1M243 568v1M244 560v10M244 571v1M245 562v1M245 565v3M245 569v1M246 564v2M246 567v4M247 564v2M247 568v5M248 561v1M248 567v1M249 556v4M249 568v1M249 571v1M250 562v1M250 566v1M250 568v1M250 571v2M251 561v6M251 568v1M252 561v1M252 568v1M252 571v1M253 561v1M253 565v4M254 563v3M254 568v3M255 562v1M255 566v2M255 569v1M256 564v3M256 568v1M257 561v1M257 563v1M257 565v1M257 569v2M258 566v1M258 571v2M259 561v3M259 565v2M259 568v1M260 562v1M260 565v1M260 567v1M261 558v1M261 561v2M261 567v2M261 570v1M262 566v1M262 568v1M262 572v1M263 569v2M263 572v1M264 564v1M264 566v1M264 568v2M265 563v5M265 570v3M266 571v1M267 565v1M267 569v1M268 562v2M268 568v1M268 571v1M269 561v1M270 564v1M271 562v4M272 565v1M272 567v1M272 569v1M273 560v2M273 563v1M273 566v4M274 569v1M275 571v2M276 562v5M276 569v1M276 571v1M277 562v1M277 565v2M277 568v5M278 561v1M278 568v1M278 572v1M279 567v1M279 571v1M280 558v4M280 566v1M280 569v1M280 571v2M281 562v2M281 566v2M281 571v1M282 561v1M282 567v2M282 572v1M283 568v2M283 571v1M284 570v1M285 561v5M285 567v5M286 561v1M286 563v6M286 570v1M286 572v1M287 561v2M287 567v3M287 571v1M288 561v1M288 566v2M288 569v1M288 572v1M289 562v1M290 563v5M290 569v1M290 571v1M291 567v1M291 569v1M292 572v1M293 565v1M293 567v1M294 562v1M294 564v1M294 572v1M295 561v3M295 565v3M295 572v1M296 562v6M296 569v1M296 571v1M298 562v1M299 561v2M299 567v2M299 572v1M300 561v2M300 565v1M300 567v2M301 561v1M301 568v1M301 571v1M302 570v1M303 569v1M303 571v1M304 561v1M304 567v2M304 570v1M305 562v1M305 567v3M305 572v1M308 562v2M308 567v4M308 572v1M309 562v1M309 567v3M310 561v1M310 567v1M311 562v1M311 566v1M311 568v2M311 571v2M312 562v3M312 567v2M313 565v5M314 562v2M314 570v1M314 572v1M316 563v1M317 566v2M318 562v4M319 562v2M319 565v2M319 569v4M322 570v1M322 572v1M323 561v1M323 569v2M324 561v1M324 567v4M325 561v1M325 566v3M325 571v1M326 560v2M326 567v3M327 561v1M327 568v3M327 572v1M328 560v2M328 567v2M328 570v1M329 561v1M330 563v2M330 568v1M331 561v5M332 564v2M332 567v2M332 570v2M333 554v11M333 567v2M333 570v1M334 560v1M334 568v1M334 570v3M335 561v2M335 570v2M336 562v2M336 567v1M336 571v1M337 562v1M337 565v1M337 572v1M338 560v6M338 569v4M339 570v1M339 572v1M340 560v1M340 567v2M340 570v1M340 572v1M341 561v3M341 567v2M342 562v1M342 566v2M342 569v1M343 562v3M343 566v1M346 561v1M346 563v4M346 571v2M347 562v4M347 568v3M348 572v1M349 568v2M352 571v1M353 565v2M353 568v1M353 571v2M354 560v2M354 567v2M355 560v2M355 568v1M355 570v1M356 561v1M356 566v1M356 568v1M356 572v1M357 554v1M357 556v3M357 561v1M357 568v2M357 572v1M358 561v1M358 568v1M358 572v1M359 561v2M359 568v2M359 572v1M360 562v2M360 565v2M360 572v1M361 559v2M361 563v1M361 566v4M362 561v1M362 568v1M363 568v3M364 564v3M364 568v1M366 563v1M367 560v1M367 566v1M368 563v1M368 565v1M368 572v1M369 560v5M369 566v3M370 562v1M370 569v2M371 571v2M372 567v1M373 567v1M373 571v1M374 572v1M375 562v3M375 568v1M376 562v4M377 558v3M377 563v1M377 565v4M377 570v1M377 572v1M378 567v1M379 562v3M379 566v2M380 556v2M380 567v1M380 570v3M381 569v1M382 559v2M382 567v1M382 569v2M382 572v1M383 562v2M383 565v1M383 568v2M383 571v1M384 561v2M384 566v1M384 568v2M384 572v1M385 562v3M385 567v2M385 570v1M386 560v1M386 568v1M386 570v1M387 559v2M387 572v1M388 564v1M388 567v4M389 561v9M389 571v1M390 569v1M390 571v2M392 556v4M392 561v2M392 567v2M392 571v1M393 561v2M393 566v3M393 570v3M394 563v2M394 567v5M395 560v2M395 567v2M395 572v1M396 571v1M397 572v1M398 571v1M399 569v1M400 562v2M400 566v2M401 561v1M401 566v2M401 569v1M401 571v1M402 561v2M402 567v3M403 561v4M403 566v2M403 569v1M403 572v1M404 561v2M404 565v3M404 569v1M405 569v3M406 563v1M406 568v1M406 571v1M407 565v2M407 572v1M408 560v1M408 571v1M409 560v1M409 568v1M409 572v1M410 560v1M410 569v1M410 571v2M411 560v1M411 568v2M411 571v1M412 569v1M412 571v1M413 565v2M413 570v1M414 561v1M414 568v1M415 561v1M415 568v3M416 561v2M416 566v4M416 571v1M417 562v4M417 571v1M418 562v2M418 565v2M419 562v1M419 564v2M419 569v1M420 564v2M420 569v1M421 564v1M422 565v2M424 558v4M424 565v3M425 560v9M426 563v3M426 568v1M426 570v3M427 564v1M428 562v1M428 566v1M428 568v1M428 571v2M429 563v3M429 567v1M429 569v1M429 572v1M430 571v2M431 571v1M432 562v2M432 567v2M433 561v1M433 572v1M434 564v2M434 568v1M434 570v1M434 572v1M435 564v2M435 568v2M435 572v1M436 567v2M436 570v3M437 561v1M438 562v2M438 566v1M438 569v1M439 562v1M439 567v1M439 569v1M439 571v1M440 569v2M441 568v1M441 570v1M442 561v3M442 567v1M442 570v1M442 572v1M443 562v1M443 567v2M444 563v1M444 565v2M445 561v2M445 565v1M445 567v1M446 569v1M446 571v1M447 563v2M447 566v3M447 570v1M448 563v1M448 565v2M448 568v1M449 562v1M449 564v2M449 567v1M449 570v2M450 560v1M450 569v1M451 568v2M452 565v2M453 563v4M454 565v2M454 571v1M455 559v2M455 569v2M456 556v1M456 558v3M456 564v1M456 569v1M456 571v1M457 561v1M457 565v1M458 568v1M459 571v2M460 562v1M460 564v1M460 566v1M460 569v1M460 572v1M461 561v1M461 568v1M461 570v1M461 572v1M463 568v5M464 564v1M464 567v1M464 572v1M465 561v1M465 568v1M466 561v1M466 567v2M466 571v1M467 561v1M467 567v2M467 570v2M468 562v1M468 564v1M468 567v1M469 562v1M469 572v1M470 562v1M470 564v1M470 567v1M470 570v2M471 562v1M471 566v3M471 571v1M472 561v1M472 568v1M472 570v3M473 561v1M474 561v1M474 568v2M475 568v1M475 571v1M476 564v2M476 572v1M477 562v4M477 568v1M478 561v1M478 568v2M479 568v2M479 572v1M480 558v3M480 569v1M481 561v1M481 571v2M482 561v1M482 567v2M483 562v2M483 566v2M483 572v1M484 561v1M484 568v2M485 560v1M486 546v3M486 560v2M486 566v4M486 571v1M487 557v1M487 561v2M487 565v1M487 567v1M487 569v1M487 572v1M488 561v2M488 567v1M488 571v1M489 563v4M490 562v1M490 568v1M490 571v1M491 571v2M492 560v2M492 567v2M493 562v1M493 568v1M493 571v1M494 562v3M494 570v1M495 561v1M495 563v1M495 566v1M495 570v1M495 572v1M496 561v5M496 567v4M497 559v6M497 566v5M497 572v1M498 561v1M498 568v1M499 560v2M499 568v2M499 572v1M500 561v1M500 568v1M500 571v1M501 568v1M501 570v2M502 561v1M502 567v5M503 569v1M503 571v1M504 562v1M504 566v2M505 561v1M505 566v2M506 559v2M506 568v1M506 571v1M507 561v1M507 568v3M508 561v1M508 563v1M508 567v1M508 572v1M509 564v5M509 570v1M510 563v1M510 567v1M511 562v2M511 568v1M511 571v2M513 566v1M514 560v1M514 568v1M514 570v2M515 561v1M515 568v2M516 562v1M516 565v4M516 571v1M517 561v1M517 563v2M517 566v2M518 562v1M518 566v1M518 568v2M518 571v1M519 562v5M519 570v1M520 570v2M521 561v1M522 562v2M522 565v3M523 563v3M523 569v1M523 571v1M524 562v1M524 564v2M525 566v1M525 571v2M526 561v1M526 567v1M526 570v1M527 560v1M527 572v1M528 556v6M528 565v5M528 572v1M529 563v1M530 561v2M530 564v2M530 568v1M530 571v2M531 562v1M531 566v2M531 569v3M532 562v1M532 567v3M532 571v1M533 561v1M533 567v1M534 561v1M534 567v1M534 571v1M535 561v1M535 568v1M536 560v2M536 568v2M536 571v1M537 560v2M537 567v2M537 570v1M538 561v1M538 564v1M538 566v2M538 569v1M539 559v3M539 563v4M540 557v4M540 568v1M540 570v1M541 561v1M541 563v2M541 566v1M541 571v1M542 560v2M542 568v1M543 561v2M543 567v1M544 562v2M544 565v4M545 562v6M546 561v4M546 566v2M546 569v1M546 572v1M547 562v4M548 561v1M548 568v2M548 571v1M549 561v1M549 570v3M550 561v3M550 572v1M551 560v2M551 567v2M551 570v1M552 568v1M552 570v1M553 560v1M554 560v1M555 561v1M555 568v1M556 563v1M556 566v2M556 569v1M557 563v2M557 569v1M558 561v1M558 572v1M559 561v1M559 569v1M560 561v1M560 567v1M561 561v1M561 569v1M561 572v1M562 562v1M563 558v3M563 568v3M564 561v2M564 566v1M564 569v1M565 564v2M565 571v2M566 561v2M566 564v3M567 560v4M567 565v3M567 569v2M568 562v6M568 572v1M569 563v2M569 571v1M570 562v1M570 567v1M571 556v5M571 568v1M571 570v1M572 559v2M572 568v1M572 572v1M573 561v1M573 565v1M573 568v1M573 570v1M574 572v1M575 561v3M575 568v1M575 571v2M576 564v3M576 568v1M577 567v1M577 571v1M578 561v1M578 568v3M579 561v1M579 567v3M580 562v3M580 566v1M580 568v4M581 561v5M581 567v2M582 561v1M582 568v2M582 572v1M583 561v1M583 568v1M584 562v1M584 568v1M585 561v1M585 566v2M586 571v1M587 571v2M588 560v4M588 567v1M589 562v1M589 567v3M589 572v1M590 562v2M590 565v1M590 568v1M591 562v2M592 565v4M592 572v1M593 562v2M594 562v3M594 568v3M595 568v2M595 571v1M596 559v2M596 567v2M596 570v1M597 561v1M597 569v3M598 552v1M598 555v2M598 559v1M598 568v1M599 559v2M599 568v1M599 571v1M600 560v1M600 569v1M600 571v2M601 559v2M601 570v2M602 562v1M602 566v2M602 569v1M603 563v2M603 567v2M604 572v1M605 565v2M605 572v1M606 561v3M606 565v3M607 563v2M607 566v2M607 570v2M608 563v3M610 561v1M610 564v1M610 572v1M611 562v1M611 567v5M612 568v1M613 568v5M614 561v1M614 567v2M615 561v1M615 569v1M615 571v2M616 562v1M616 564v2M616 572v1M617 563v3M618 561v1M618 567v1M619 560v1M620 561v1M620 569v1M620 571v1M621 563v6M621 571v1M622 563v2M622 567v3M623 557v8M623 566v1M623 568v2M624 557v1M624 561v1M624 572v1M625 561v1M625 568v1M626 562v1M626 564v1M626 568v1M626 571v1M627 562v1M627 568v1M628 561v1M628 568v3M628 572v1M629 560v2M629 571v1M630 569v1M631 568v1M632 561v1M632 563v8M632 572v1M633 561v5M633 567v1M633 569v1M633 572v1M634 560v1M634 568v3M635 560v1M635 568v1M636 564v1M636 567v1M637 563v2M637 566v3M638 562v4M638 567v2M639 562v2M639 565v3M639 569v1M639 571v1M640 563v2M640 568v3M641 562v1M641 567v1M641 569v2M642 566v1M642 571v1M643 562v1M643 568v1M643 571v2M644 568v1M644 570v1M644 572v1M645 561v1M645 567v2M645 571v2M646 565v1M646 571v1M647 565v1M648 554v1M648 559v2M648 568v5M649 561v1M649 563v1M649 568v1M649 570v1M650 562v3M651 562v1M651 564v4M652 561v1M652 567v4M653 566v3M653 572v1M654 556v5M654 568v2M654 571v1M655 561v1M655 568v1M656 561v2M656 567v1M657 562v1M657 569v1M657 572v1M658 561v1M658 568v1M658 571v1M659 561v1M660 564v1M660 566v2M660 569v1M660 571v1M661 565v1M662 559v2M662 570v1M663 562v6M663 571v1M664 564v4M665 557v7M665 567v2M666 566v5M667 565v1M667 568v1M667 572v1M668 562v1M668 566v2M669 561v2M669 565v2M670 564v1M670 569v2M671 568v1M671 570v1M672 556v1M672 559v1M672 561v1M672 568v1M672 570v1M672 572v1M673 562v1M673 564v3M673 569v2M674 562v2M674 565v4M674 570v1M674 572v1M675 562v2M675 566v4M675 571v2M676 561v1M676 568v2M677 568v2M678 557v1M678 562v2M678 566v1M678 568v1M678 570v1M679 563v7M680 557v3M680 571v1M681 568v2M682 561v2M682 567v1M682 570v2M683 568v2M683 572v1M684 568v1M684 570v2M685 570v3M686 564v2M686 567v2M687 564v2M688 563v4M689 563v1M689 565v1M689 567v1M689 569v2M689 572v1M690 561v2M690 566v2M691 560v2M691 571v1M692 567v1M693 561v1M693 568v2M693 571v1M694 561v1M694 572v1M695 560v1M695 569v1M696 561v1M696 564v1M696 569v2M697 562v2M697 565v2M697 571v1M698 561v1M699 559v2M699 568v1M699 571v1M700 569v1M701 561v1M701 570v2M702 572v1M703 569v1M704 562v1M704 564v1M704 566v1M704 571v2M705 561v1M705 567v1M705 572v1M706 562v1M706 565v1M706 569v1M707 560v3M707 569v1M707 572v1M708 566v2M709 560v4M709 565v5M709 572v1M710 569v1M711 568v1M711 571v1M712 564v2M712 569v4M713 566v2M713 572v1M714 562v4M714 568v1M714 571v2M715 561v1M715 563v1M715 567v1M716 567v2M717 567v3M717 572v1M718 561v1M718 569v2M719 561v1M719 572v1M720 561v1M720 569v1M721 561v1M721 563v2M721 567v2M721 570v1M722 562v1M722 568v1M723 562v2M723 566v2M724 561v1M724 568v3M724 572v1M725 561v1M725 568v2M725 571v1M726 560v2M726 568v1M726 571v1M727 560v2M727 568v1M727 571v1M728 560v1M728 568v1M729 561v1M729 569v1M730 560v1M730 568v3M731 561v2M731 567v1M732 557v1M732 561v2M732 567v6M733 562v2M733 568v3M733 572v1M734 553v3M734 559v1M734 561v3M734 565v1M735 560v1M735 564v2M735 567v4M735 572v1M737 561v1M737 568v2M737 572v1M738 563v3M739 563v1M739 567v1M739 569v1M740 562v1M740 565v2M741 565v2M741 571v1M744 567v2M745 561v1M745 568v2M746 562v1M746 564v2M746 567v2M746 571v1M747 568v3M748 561v2M748 567v1M748 571v1M749 561v2M749 568v1M749 570v1M749 572v1M750 561v1M750 568v1M750 571v1M751 561v2M751 568v3M752 561v1M752 570v1M753 561v1M753 569v1M753 571v1M754 562v4M754 569v1M754 571v1M755 562v2M755 569v1M756 559v4M756 566v6M757 568v1M757 572v1M758 561v1M758 567v2M759 561v1M759 568v1M759 572v1M760 561v1M761 560v2M761 568v2M762 561v1M762 566v2M762 572v1M763 561v3M763 565v2M763 572v1M764 556v4M764 568v1M764 570v1M765 561v1M765 567v2M765 570v1M766 560v1M766 570v1M767 560v1M767 568v3M767 572v1M768 561v1M768 568v1M768 570v1M769 561v1M769 568v1M770 563v3M770 571v1M771 564v1M771 567v1M772 565v2M772 569v1M773 561v1M773 568v2M773 572v1M774 562v1M774 568v1M775 561v1M775 568v1M776 561v2M776 568v1M776 572v1M777 562v1M777 572v1M778 561v1M778 567v2M778 571v1M779 562v1M779 571v2M780 561v1M780 567v3M781 557v4M781 571v2M782 564v1M782 566v2M783 553v4M783 561v1M783 567v2M784 568v1M784 571v1" stroke="#fff800"/><path d="M116 565v2M117 564v1M117 567v1M118 564v1M118 567v1M119 564v1M120 562v4M121 562v4M121 571v2M124 562v1M124 566v1M125 564v2M126 566v1M127 565v2M128 563v2M128 567v2M129 563v1M129 567v1M130 562v6M130 569v1M131 563v4M132 564v1M133 563v3M134 564v1M135 563v2M135 567v1M136 564v1M137 564v4M137 572v1M138 563v4M139 562v3M139 566v1M140 564v3M141 564v2M142 560v2M142 564v1M143 567v1M144 571v1M146 563v2M148 564v1M148 566v1M149 563v2M150 563v4M151 565v1M151 567v1M151 570v1M152 563v3M153 564v3M154 563v1M154 566v1M155 563v3M158 563v2M158 566v2M159 562v1M159 567v1M160 563v1M163 564v2M167 564v1M167 572v1M168 563v2M170 562v1M170 566v1M170 568v2M171 566v1M172 572v1M173 563v1M174 566v1M175 563v1M176 562v1M176 567v1M177 565v1M180 562v5M181 563v1M181 565v4M181 572v1M186 562v5M187 567v1M188 566v1M189 571v1M191 563v3M194 562v2M194 565v2M195 565v2M196 562v5M198 562v1M201 566v1M201 568v1M206 566v1M207 564v1M207 571v1M208 562v2M208 567v1M209 564v3M211 563v1M212 562v1M213 562v2M213 565v3M215 565v2M216 572v1M218 561v1M218 567v1M219 571v1M221 572v1M222 563v1M223 562v2M223 567v1M226 562v2M226 567v1M227 564v2M227 567v1M227 572v1M228 563v1M229 566v1M229 569v1M230 562v1M230 566v2M231 561v3M232 561v1M232 572v1M233 561v1M234 562v1M234 566v2M235 561v2M236 561v1M236 565v3M236 572v1M237 561v4M237 566v2M237 572v1M238 563v5M238 571v1M240 567v1M241 565v2M242 561v1M243 561v1M243 567v1M245 564v1M249 560v2M249 572v1M250 563v3M251 567v1M252 562v2M252 566v2M253 562v3M254 566v2M255 563v3M256 567v1M257 562v1M257 564v1M259 564v1M260 564v1M261 563v4M268 567v1M268 572v1M269 562v5M271 568v1M273 562v1M273 564v2M277 563v2M278 562v1M278 570v1M279 561v2M279 565v2M280 562v2M280 565v1M280 567v1M281 564v2M282 562v2M282 565v2M283 562v2M283 567v1M283 570v1M283 572v1M285 566v1M285 572v1M287 563v4M288 562v1M288 565v1M289 563v1M289 567v2M291 566v1M294 563v1M294 565v1M298 563v1M298 566v2M299 563v4M300 563v2M300 566v1M301 562v1M301 565v1M301 567v1M303 572v1M304 562v2M304 566v1M305 563v4M306 572v1M308 564v3M309 563v4M310 562v2M310 566v1M311 563v3M312 565v1M315 572v1M316 562v1M316 564v3M316 572v1M317 561v5M317 572v1M319 564v1M319 567v2M320 572v1M322 561v1M322 567v1M323 567v1M323 571v2M324 562v2M325 562v2M326 562v2M326 566v1M327 562v1M327 566v2M328 562v4M328 569v1M329 562v3M329 567v1M330 565v2M331 566v2M332 566v1M333 565v2M333 572v1M334 561v2M334 564v1M334 567v1M335 565v3M336 564v1M337 563v2M337 566v2M340 561v1M341 566v1M342 563v3M342 572v1M343 565v1M344 567v1M354 562v3M354 566v1M355 562v3M355 566v2M356 562v1M356 564v1M357 562v1M357 566v2M357 571v1M358 562v1M358 567v1M359 563v2M360 564v1M361 561v2M361 564v2M361 570v1M361 572v1M362 562v1M363 562v2M370 563v5M371 562v2M371 565v3M371 569v1M377 561v2M377 564v1M377 569v1M378 564v3M379 565v1M382 561v2M382 564v3M382 568v1M383 564v1M384 563v3M384 567v1M385 565v2M385 572v1M386 561v1M386 567v1M386 571v1M387 561v1M387 567v5M388 565v1M389 572v1M392 564v3M392 570v1M392 572v1M393 563v3M394 565v2M395 562v2M395 565v2M395 571v1M398 569v1M400 564v2M401 562v4M401 572v1M402 563v1M402 565v2M403 565v1M406 565v1M408 561v1M408 566v2M408 569v1M409 561v1M410 561v1M410 568v1M411 561v1M411 567v1M411 570v1M414 562v1M415 562v1M415 571v1M416 563v3M417 566v2M417 572v1M418 564v1M419 563v1M424 562v3M425 569v1M426 566v1M428 563v3M432 564v3M433 562v4M436 562v1M436 565v1M437 562v1M437 564v1M438 564v2M439 563v1M439 565v2M439 572v1M441 572v1M442 564v3M442 569v1M443 563v2M443 566v1M444 564v1M445 563v2M447 565v1M447 569v1M450 561v1M450 567v1M451 562v1M454 562v1M454 564v1M454 572v1M455 561v1M455 568v1M455 571v2M456 557v1M456 561v2M456 566v3M457 562v1M457 564v1M457 566v1M457 571v2M460 563v1M460 565v1M461 562v2M461 565v3M461 571v1M462 569v1M464 563v1M464 565v2M465 562v1M465 567v1M466 562v3M467 562v1M467 564v1M467 566v1M468 563v1M468 569v1M469 563v3M470 563v1M470 565v2M470 572v1M471 563v3M472 567v1M473 567v1M475 561v1M478 562v2M478 567v1M479 562v6M480 561v1M480 568v1M481 567v1M482 562v2M482 565v2M483 564v2M484 562v1M484 567v1M485 561v1M485 572v1M486 549v7M486 557v3M486 562v4M486 570v1M486 572v1M487 563v2M488 563v4M489 567v1M489 569v1M490 563v1M490 566v2M491 562v3M491 567v1M492 562v3M493 563v1M493 567v1M493 572v1M495 564v2M495 568v1M497 565v1M498 562v2M499 564v1M500 572v1M501 561v2M501 572v1M502 562v1M502 565v1M503 562v1M503 565v1M503 570v1M504 563v3M505 562v1M505 565v1M506 561v2M506 567v1M506 569v2M508 564v2M510 564v2M511 564v4M512 562v1M512 565v3M513 563v3M514 561v2M514 566v2M515 567v1M516 563v2M517 565v1M519 571v1M520 562v1M521 567v1M522 564v1M524 563v1M524 566v1M525 565v1M527 561v1M527 567v1M528 562v3M528 570v1M530 563v1M530 566v1M531 563v3M532 564v1M532 566v1M532 570v1M533 562v2M534 562v1M534 565v2M535 567v1M535 569v1M536 562v3M536 567v1M537 562v4M538 562v2M538 565v1M540 561v4M540 566v2M541 562v1M541 565v1M541 567v1M541 569v1M542 562v1M542 564v1M542 566v2M543 563v1M543 566v1M544 564v1M546 565v1M547 571v1M548 562v1M548 567v1M549 567v1M550 564v1M550 567v1M551 562v2M551 571v2M552 561v2M553 561v1M553 567v1M554 561v1M554 566v4M555 562v1M555 567v1M557 565v1M558 562v1M558 567v1M559 562v1M559 566v2M560 562v3M561 567v1M562 563v1M562 565v1M562 567v1M563 561v1M563 571v2M564 563v2M565 568v2M567 564v1M567 568v1M570 565v2M571 561v1M571 569v1M572 561v2M572 564v1M572 566v2M573 562v3M573 566v2M574 562v2M574 565v2M575 564v4M578 566v2M580 565v1M580 572v1M582 567v1M583 567v1M583 571v2M584 563v2M584 567v1M585 562v1M585 565v1M588 564v3M589 563v4M589 571v1M590 564v1M591 564v4M592 563v2M593 564v2M594 565v1M594 567v1M595 562v6M596 561v1M596 563v1M597 567v2M598 557v2M598 560v2M598 570v1M599 561v1M599 567v1M599 570v1M600 561v1M601 561v1M601 567v1M602 563v3M603 565v2M606 564v1M607 565v1M610 562v2M610 565v1M611 563v4M611 572v1M612 561v1M613 561v1M614 562v2M615 562v1M615 567v1M618 562v1M619 561v1M619 567v1M620 562v2M620 567v2M620 570v1M621 570v1M622 565v2M623 565v1M623 567v1M624 567v2M625 567v1M625 572v1M626 563v1M626 565v2M627 565v3M628 562v1M628 565v1M628 567v1M628 571v1M629 567v4M630 561v1M630 568v1M630 572v1M631 561v1M631 572v1M634 561v1M635 561v1M635 567v1M636 563v1M636 565v2M637 562v1M637 565v1M637 570v1M639 568v1M640 565v3M641 563v4M642 562v2M642 565v1M642 567v1M642 572v1M643 563v3M643 567v1M644 562v1M644 565v3M645 562v1M645 565v1M648 561v1M649 562v1M649 565v3M652 562v3M653 562v4M654 561v2M654 567v1M655 562v3M655 567v1M656 563v4M657 563v4M658 562v2M658 569v1M659 562v1M659 567v1M660 565v1M660 572v1M662 561v7M662 571v2M663 568v1M664 568v1M665 564v3M666 565v1M668 563v3M668 569v1M669 563v2M670 568v1M672 562v3M672 567v1M673 563v1M674 564v1M674 569v1M675 564v2M676 567v1M677 561v1M678 564v2M678 567v1M678 569v1M680 560v2M680 567v4M681 562v2M681 566v2M681 572v1M682 568v1M683 561v3M683 567v1M683 571v1M684 561v3M684 565v3M685 561v1M685 567v2M686 572v1M687 563v1M689 564v1M689 566v1M690 563v3M691 562v6M692 562v2M692 565v2M693 562v3M693 566v2M693 572v1M694 562v1M694 567v1M695 561v2M695 568v1M696 567v2M696 572v1M697 564v1M698 568v1M698 570v1M700 561v1M700 568v1M704 563v1M704 565v1M705 562v1M705 566v1M706 563v2M706 566v1M707 563v3M707 567v1M711 569v2M714 566v2M715 562v1M715 564v1M716 562v1M716 571v1M717 562v2M717 566v1M718 568v1M718 571v2M719 566v2M720 562v2M720 567v1M721 562v1M721 565v1M722 563v2M722 567v1M723 564v2M724 567v1M725 562v2M725 565v3M726 562v2M726 567v1M726 572v1M727 562v2M727 566v1M727 569v1M728 561v2M728 567v1M729 562v1M729 567v1M730 561v1M730 563v3M730 567v1M730 571v1M731 563v4M732 563v4M733 564v2M734 566v1M734 572v1M736 561v1M736 567v2M737 567v1M739 564v2M740 563v2M740 570v1M740 572v1M744 562v2M745 562v1M748 566v1M749 563v1M749 567v1M749 569v1M750 562v2M750 567v1M751 563v1M751 566v2M752 572v1M753 562v1M754 567v1M755 564v5M756 565v1M756 572v1M758 566v1M758 572v1M759 562v1M759 566v1M759 571v1M760 567v1M761 562v3M761 566v2M761 571v1M762 562v4M763 564v1M764 560v2M764 565v3M764 571v2M765 562v1M766 568v2M767 561v1M767 567v1M767 571v1M768 562v1M768 566v2M769 562v1M769 567v1M772 562v3M772 568v1M773 562v1M773 565v3M774 563v3M775 562v1M775 567v1M776 564v1M776 567v1M776 569v1M777 563v3M777 567v2M778 562v1M778 566v1M779 563v4M780 562v1M780 564v1M780 566v1M780 572v1M781 561v1M781 567v1M782 565v1M782 569v1M783 562v5M783 571v1M784 561v2M784 567v1" stroke="#ffd800"/><path d="M116 563v2M117 562v2M117 565v2M117 572v1M124 563v3M128 565v1M129 562v1M129 564v3M135 565v2M139 565v1M142 562v2M142 565v3M143 562v1M143 564v3M149 565v1M154 564v2M154 567v1M158 565v1M159 563v1M159 565v2M170 563v3M171 562v4M176 563v1M176 565v2M181 562v1M181 564v1M187 564v3M195 564v1M208 564v3M212 563v5M213 564v1M218 562v1M218 565v2M219 562v1M219 565v3M222 564v2M223 564v3M226 564v3M229 571v2M230 564v2M231 564v1M231 566v1M232 562v1M232 567v1M233 562v2M233 567v1M234 563v3M235 563v3M235 567v1M236 562v3M237 565v1M240 562v1M240 564v3M242 562v1M242 567v1M243 562v2M243 566v1M248 562v1M248 566v1M249 562v2M252 564v2M252 572v1M260 563v1M268 564v3M278 563v3M278 567v1M279 563v1M280 564v1M282 564v1M283 564v3M288 563v2M289 564v3M298 564v2M301 563v2M301 566v1M304 564v2M310 564v2M322 565v2M323 562v2M323 566v1M324 565v2M325 564v2M326 564v2M327 563v3M328 566v1M329 565v2M334 563v1M334 565v1M335 563v2M336 565v1M340 563v2M341 564v2M343 572v1M354 565v1M355 565v1M356 563v1M356 565v1M357 563v2M358 563v2M358 566v1M359 565v3M362 563v1M363 564v4M371 564v1M382 563v1M386 565v2M387 566v1M388 566v1M392 563v1M395 564v1M402 564v1M408 562v2M408 565v1M409 562v1M409 567v1M410 562v2M410 567v1M411 562v2M411 566v1M414 565v3M415 567v1M433 566v1M436 563v2M436 566v1M437 563v1M437 565v3M439 564v1M443 565v1M450 562v5M451 563v1M451 565v3M454 563v1M455 562v1M455 567v1M456 563v1M456 565v1M457 563v1M461 564v1M465 563v1M465 566v1M466 565v2M467 565v1M469 566v1M472 562v2M473 562v2M474 562v1M474 567v1M475 567v1M478 564v3M479 571v1M480 562v1M480 567v1M481 562v1M482 564v1M484 563v2M485 562v1M485 567v1M486 556v1M490 564v2M491 565v2M492 565v1M493 564v3M498 565v3M499 562v2M499 565v3M500 562v2M500 567v1M501 566v2M502 563v2M502 566v1M503 563v2M503 566v1M505 563v2M506 563v2M506 566v1M506 572v1M507 562v2M507 567v1M512 563v2M515 562v4M520 563v2M520 566v2M521 562v2M521 565v2M526 562v1M526 572v1M527 566v1M532 563v1M532 565v1M532 572v1M533 564v1M533 566v1M535 562v1M535 565v2M536 565v2M537 566v1M540 565v1M542 563v1M542 565v1M543 564v2M548 566v1M549 562v1M550 565v2M551 565v1M552 563v1M552 567v1M553 562v5M554 562v4M555 563v1M558 563v4M559 563v3M560 565v2M561 562v1M561 564v1M561 566v1M562 564v1M562 566v1M563 562v6M570 563v2M571 562v1M571 567v1M572 563v1M574 564v1M578 562v1M578 565v1M579 562v1M579 566v1M582 562v1M583 562v1M583 566v1M584 565v2M585 563v2M594 566v1M596 562v1M596 565v2M597 562v2M597 565v2M599 562v2M599 565v2M600 562v1M600 565v1M600 567v1M601 564v1M601 566v1M612 567v1M614 564v3M615 564v1M615 566v1M618 563v2M618 566v1M619 562v1M619 565v1M620 564v3M624 562v2M624 566v1M625 562v1M625 565v1M627 563v2M628 564v1M628 566v1M629 562v1M629 564v1M629 566v1M630 562v1M630 567v1M631 567v1M634 562v1M634 567v1M635 562v2M642 564v1M643 566v1M644 563v2M645 563v2M645 566v1M648 562v1M648 564v1M648 567v1M649 564v1M652 565v2M654 563v3M655 565v2M658 564v4M659 563v4M669 572v1M672 565v2M676 562v1M677 567v1M677 572v1M680 562v3M681 564v2M682 563v1M682 565v2M683 565v2M684 564v1M685 562v5M692 564v1M693 565v1M694 563v4M695 563v2M695 566v2M696 565v2M698 562v1M699 561v1M699 567v1M700 562v1M700 567v1M701 567v1M705 563v3M707 566v1M708 572v1M715 565v2M716 563v2M716 566v1M717 564v2M718 562v2M719 562v2M719 565v1M720 564v3M721 566v1M722 565v2M724 562v3M725 564v1M726 564v3M727 564v2M727 567v1M728 563v1M728 566v1M728 571v1M729 563v2M729 566v1M730 562v1M730 566v1M731 572v1M733 566v2M737 562v1M744 564v3M744 569v1M745 563v1M745 566v2M748 563v3M749 564v3M750 564v3M751 564v2M752 562v3M752 567v1M753 563v1M753 565v3M754 566v1M758 562v4M759 563v2M759 567v1M760 562v2M761 565v1M764 562v3M765 563v1M765 565v2M766 561v1M768 563v3M769 563v4M769 569v1M773 563v2M775 563v4M776 563v1M776 565v2M777 566v1M778 563v3M780 563v1M780 565v1M781 562v3M784 564v1M784 566v1M784 572v1" stroke="#ff9000"/><path d="M128 566v1M143 563v1M159 564v1M176 564v1M218 563v2M219 563v2M230 563v1M231 565v1M232 563v3M235 566v1M240 563v1M242 563v4M243 564v2M248 563v3M249 564v2M249 567v1M278 566v1M279 564v1M322 562v3M323 564v2M324 564v1M334 566v1M336 566v1M340 562v1M340 565v2M357 565v1M358 565v1M362 564v1M362 566v2M386 562v1M386 564v1M387 562v1M387 564v2M408 564v1M409 563v4M410 565v2M411 564v2M414 563v2M415 563v4M451 564v1M455 563v4M465 564v2M467 563v1M472 564v3M473 564v1M473 566v1M474 563v4M475 562v2M480 563v1M481 563v2M481 566v1M484 565v2M485 563v4M492 566v1M498 564v1M500 564v3M501 563v3M506 565v1M507 564v3M514 563v3M515 566v1M520 565v1M521 564v1M526 563v4M527 562v4M533 565v1M534 563v2M535 564v1M548 563v3M549 563v3M551 564v1M551 566v1M552 564v2M555 564v3M561 563v1M561 565v1M571 563v4M572 565v1M578 563v2M579 563v1M579 565v1M582 563v4M583 563v1M583 565v1M596 564v1M597 564v1M598 562v6M599 564v1M600 563v1M600 566v1M601 562v2M601 565v1M613 562v1M613 567v1M615 563v1M615 565v1M618 565v1M619 563v2M619 566v1M624 564v2M625 563v2M625 566v1M628 563v1M629 563v1M629 565v1M630 563v1M630 565v1M634 563v2M634 566v1M635 564v2M648 563v1M648 565v2M654 566v1M676 563v4M677 562v1M680 565v2M682 564v1M683 564v1M695 565v1M698 563v1M698 567v1M699 562v1M700 564v3M701 562v1M701 566v1M716 565v1M718 564v2M718 567v1M719 564v1M724 565v2M728 564v2M729 565v1M736 566v1M737 563v4M745 564v2M752 565v2M753 564v1M759 565v1M760 564v3M765 564v1M766 562v1M766 567v1M767 562v5M781 565v2M784 563v1M784 565v1" stroke="#ff5000"/><path d="M232 566v1M233 564v3M249 566v1M362 565v1M386 563v1M387 563v1M410 564v1M473 565v1M475 564v3M480 564v3M481 565v1M535 563v1M549 566v1M552 566v1M579 564v1M583 564v1M600 564v1M612 562v5M613 563v4M630 564v1M630 566v1M631 562v5M634 565v1M635 566v1M677 563v4M698 564v3M699 563v4M700 563v1M701 563v3M718 566v1M736 562v4M766 563v4" stroke="#e80000"/></g><path d="M142.2 531.8 C143.5 530.8 146.9 527.7 150.0 526.0 C153.1 524.3 156.9 523.8 160.7 521.7 C164.4 519.6 168.0 515.5 172.5 513.2 C177.0 511.0 181.2 509.9 187.7 508.2 C194.2 506.5 203.4 505.1 211.3 503.1 C219.2 501.1 227.6 498.6 234.9 496.4 C242.2 494.1 249.0 491.6 255.2 489.6 C261.4 487.6 265.3 486.6 272.0 484.6 C278.7 482.6 287.7 480.7 295.6 477.8 C303.5 474.9 315.3 468.8 319.2 467.0" fill="none" stroke="#20a0f0" stroke-width="2.0" stroke-linecap="round" stroke-linejoin="round" opacity="1"/><path d="M142.2 531.8 C143.5 530.8 146.9 527.7 150.0 526.0 C153.1 524.3 156.9 523.8 160.7 521.7 C164.4 519.6 168.0 515.5 172.5 513.2 C177.0 511.0 185.2 509.0 187.7 508.2" fill="none" stroke="#30c8e8" stroke-width="2.2" stroke-linecap="round" stroke-linejoin="round" opacity="1"/><path d="M133.0 530.0 C135.0 528.3 141.7 522.4 145.0 520.0 C148.3 517.6 150.3 517.2 153.0 515.7 C155.7 514.2 159.7 511.8 161.0 511.0" fill="none" stroke="#0850e0" stroke-width="1.4" stroke-linecap="round" stroke-linejoin="round" opacity="0.8"/><path d="M242.0 506.0 L248.0 505.0" fill="none" stroke="#1060e0" stroke-width="1.5" stroke-linecap="round" stroke-linejoin="round" opacity="0.8"/><path d="M423.0 503.0 C423.5 502.3 424.8 500.0 426.0 499.0 C427.2 498.0 429.8 497.3 430.5 497.0" fill="none" stroke="#1080f0" stroke-width="1.8" stroke-linecap="round" stroke-linejoin="round" opacity="1"/><path d="M446.0 489.8 C450.0 489.5 464.2 488.4 470.0 488.0 C475.8 487.6 477.3 487.2 481.0 487.2 C484.7 487.2 489.3 488.2 492.0 488.0 C494.7 487.8 490.7 486.7 497.0 486.2 C503.3 485.7 518.7 485.4 530.0 485.0 C541.3 484.6 555.7 483.9 565.0 484.0 C574.3 484.1 582.5 485.1 586.0 485.3" fill="none" stroke="#1890f0" stroke-width="2.0" stroke-linecap="round" stroke-linejoin="round" opacity="1"/><path d="M590.4 484.5 C592.3 485.6 597.8 488.4 602.0 491.2 C606.2 494.0 613.3 499.6 615.6 501.3" fill="none" stroke="#1080f0" stroke-width="1.8" stroke-linecap="round" stroke-linejoin="round" opacity="1"/><path d="M614.0 509.7 C615.7 509.3 620.7 508.1 624.0 507.5 C627.3 506.9 632.3 506.6 634.0 506.4" fill="none" stroke="#40e0b0" stroke-width="2.8" stroke-linecap="round" stroke-linejoin="round" opacity="1"/><path d="M634.0 503.0 C636.2 502.5 642.8 501.0 647.0 500.0 C651.2 499.0 657.4 497.6 659.5 497.1" fill="none" stroke="#20b8f0" stroke-width="2.2" stroke-linecap="round" stroke-linejoin="round" opacity="1"/><path d="M661.0 492.9 C662.5 492.7 666.9 492.1 670.0 491.8 C673.1 491.5 678.1 491.0 679.7 490.9" fill="none" stroke="#1890f0" stroke-width="1.9" stroke-linecap="round" stroke-linejoin="round" opacity="1"/><path d="M688.0 486.1 C693.3 485.5 710.2 483.6 720.0 482.5 C729.8 481.4 742.5 479.9 747.0 479.4" fill="none" stroke="#1880f0" stroke-width="1.9" stroke-linecap="round" stroke-linejoin="round" opacity="1"/><path d="M747.0 472.6 L755.6 467.6" fill="none" stroke="#0030b0" stroke-width="1.3" stroke-linecap="round" stroke-linejoin="round" opacity="1"/><path d="M577.0 539.3 C578.8 537.6 584.4 532.0 588.0 529.0 C591.6 526.0 594.5 524.0 598.8 521.6 C603.1 519.2 608.8 515.9 614.0 514.8 C619.2 513.7 625.0 514.8 630.0 514.8 C635.0 514.8 641.9 514.8 644.3 514.8" fill="none" stroke="#1070e8" stroke-width="1.6" stroke-linecap="round" stroke-linejoin="round" opacity="0.9"/><path d="M625.8 520.7 L639.0 520.0" fill="none" stroke="#0858e0" stroke-width="1.4" stroke-linecap="round" stroke-linejoin="round" opacity="0.8"/><path d="M565.0 494.6 L577.0 496.3" fill="none" stroke="#0030c0" stroke-width="1.3" stroke-linecap="round" stroke-linejoin="round" opacity="0.8"/><path d="M420.0 529.4 C421.8 526.2 427.6 516.1 431.0 510.0 C434.4 503.9 439.0 495.7 440.6 492.8" fill="none" stroke="#1060e8" stroke-width="1.4" stroke-linecap="round" stroke-linejoin="round" opacity="0.9" stroke-dasharray="1.2 1.8"/><path d="M440.0 511.0 C440.3 511.5 441.1 514.1 441.8 514.0 C442.5 513.9 443.6 511.1 444.0 510.5" fill="none" stroke="#0040d0" stroke-width="1.0" stroke-linecap="round" stroke-linejoin="round" opacity="0.7"/><path d="M402.6 535.7 L409.0 523.0" fill="none" stroke="#0040c0" stroke-width="1.2" stroke-linecap="round" stroke-linejoin="round" opacity="0.6" stroke-dasharray="1.2 1.8"/><path d="M785.5 317V574" stroke="#fff"/></g></svg></body></html>
